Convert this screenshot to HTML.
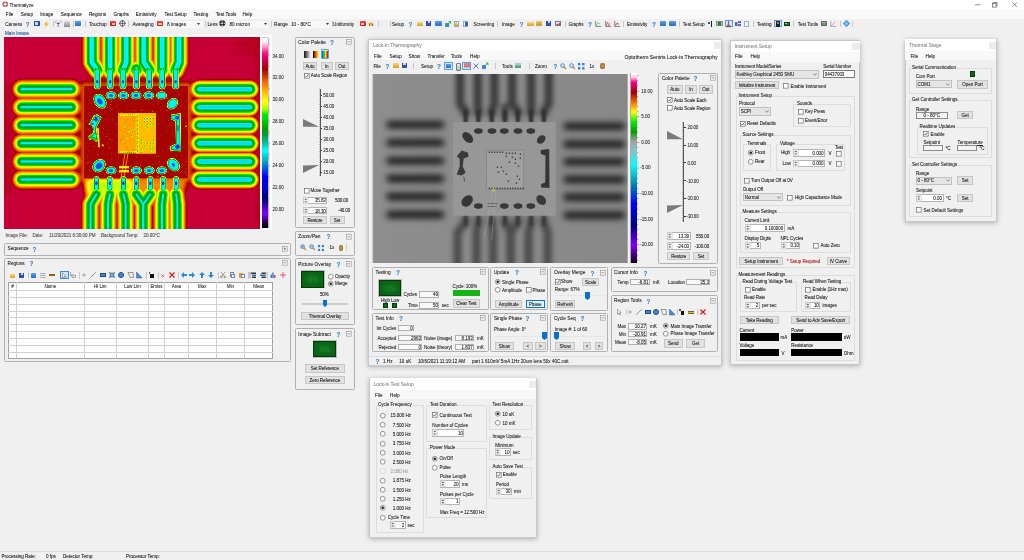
<!DOCTYPE html>
<html><head><meta charset="utf-8"><style>
html,body{margin:0;padding:0;}
body{width:1024px;height:560px;overflow:hidden;position:relative;background:#f0f0f0;font-family:"Liberation Sans",sans-serif;}
.a{position:absolute;}
.t{position:absolute;white-space:nowrap;font-family:"Liberation Sans",sans-serif;text-shadow:0 0 0.3px rgba(0,0,0,0.35);}
.btn{position:absolute;box-sizing:border-box;text-align:center;white-space:nowrap;color:#1a1a1a;font-family:"Liberation Sans",sans-serif;text-shadow:0 0 0.3px rgba(0,0,0,0.35);}
svg{position:absolute;overflow:visible;}
</style></head><body><div id="root" style="position:absolute;left:0;top:0;width:1024px;height:560px;overflow:hidden;will-change:transform;background:#f0f0f0">
<div class="a" style="left:0px;top:0px;width:1024px;height:9px;background:#ffffff;"></div>
<svg style="left:2px;top:1.2px" width="6.5" height="6.5" viewBox="0 0 10 10"><circle cx="5" cy="5" r="4.3" fill="#b04040"/><circle cx="5" cy="5" r="2" fill="#fff"/><path d="M5 0.5V9.5M0.5 5H9.5" stroke="#fff" stroke-width="0.9"/></svg>
<div class="t" style="left:9.5px;top:2.64px;font-size:4.6px;line-height:5.52px;color:#222;">Thermalyze</div>
<svg style="left:974.5px;top:1.5px" width="6" height="6" viewBox="0 0 6 6"><path d="M0 2.8H5.5" stroke="#444" stroke-width="0.6"/></svg>
<svg style="left:992.2px;top:1.5px" width="6" height="6" viewBox="0 0 6 6"><rect x="0.5" y="1.5" width="3.6" height="3.6" fill="none" stroke="#444" stroke-width="0.6"/><path d="M1.5 1.5V0.5H5.1V4.1H4.1" fill="none" stroke="#444" stroke-width="0.6"/></svg>
<svg style="left:1011.5px;top:1.5px" width="6" height="6" viewBox="0 0 6 6"><path d="M0.4 0.4L4.9 4.9M4.9 0.4L0.4 4.9" stroke="#444" stroke-width="0.6"/></svg>
<div class="a" style="left:0px;top:9px;width:1024px;height:9.8px;background:#f9f9f9;"></div>
<div class="t" style="left:5.8px;top:11.88px;font-size:4.7px;line-height:5.64px;color:#1a1a1a;">File</div>
<div class="t" style="left:20.8px;top:11.88px;font-size:4.7px;line-height:5.64px;color:#1a1a1a;">Setup</div>
<div class="t" style="left:40.3px;top:11.88px;font-size:4.7px;line-height:5.64px;color:#1a1a1a;">Image</div>
<div class="t" style="left:60.8px;top:11.88px;font-size:4.7px;line-height:5.64px;color:#1a1a1a;">Sequence</div>
<div class="t" style="left:88.9px;top:11.88px;font-size:4.7px;line-height:5.64px;color:#1a1a1a;">Regions</div>
<div class="t" style="left:113.5px;top:11.88px;font-size:4.7px;line-height:5.64px;color:#1a1a1a;">Graphs</div>
<div class="t" style="left:135.7px;top:11.88px;font-size:4.7px;line-height:5.64px;color:#1a1a1a;">Emissivity</div>
<div class="t" style="left:164.4px;top:11.88px;font-size:4.7px;line-height:5.64px;color:#1a1a1a;">Test Setup</div>
<div class="t" style="left:193.4px;top:11.88px;font-size:4.7px;line-height:5.64px;color:#1a1a1a;">Testing</div>
<div class="t" style="left:215.7px;top:11.88px;font-size:4.7px;line-height:5.64px;color:#1a1a1a;">Test Tools</div>
<div class="t" style="left:242.6px;top:11.88px;font-size:4.7px;line-height:5.64px;color:#1a1a1a;">Help</div>
<div class="a" style="left:0px;top:19px;width:1024px;height:10px;background:#f0f0f0;"></div>
<div class="t" style="left:5.2px;top:21.58px;font-size:4.7px;line-height:5.64px;color:#222;">Camera</div>
<div class="t" style="left:25.8px;top:20.56px;font-size:6.4px;line-height:7.68px;color:#3a92da;font-weight:bold;">?</div>
<div class="a" style="left:33.6px;top:21.2px;width:6.4px;height:5px;background:#2a4a9a;border-radius:0.5px"></div><div class="a" style="left:35.2px;top:22.4px;width:3.2px;height:2.4px;background:#c8d8f8"></div>
<svg style="left:43px;top:20.5px" width="6.5" height="6.5" viewBox="0 0 10 10"><path d="M7 0L1 5.5H4.5L2.5 10L9.5 4H6Z" fill="#f0b020"/></svg>
<div class="a" style="left:52.7px;top:20.5px;width:0.6px;height:6.5px;background:#c8c8c8"></div>
<svg style="left:54.6px;top:20.7px" width="6.4" height="6" viewBox="0 0 12 12"><path d="M6 2V12M3 5H9" stroke="#333" stroke-width="1.2"/><path d="M0 1V4M1 0H3M12 1V4M11 0H9" stroke="#3a8ad8" stroke-width="1.2"/></svg>
<div class="a" style="left:63.5px;top:20.7px;width:6.3px;height:6px;background:linear-gradient(#d8d8d8,#8a8a8a);border-radius:2px 2px 0.5px 0.5px"></div>
<div class="a" style="left:73px;top:20.5px;width:0.6px;height:6.5px;background:#c8c8c8"></div>
<div class="a" style="left:74.85px;top:21.099999999999998px;width:6.3px;height:5.2px;background:linear-gradient(#5aa0e6,#2a6cc0);border-radius:0.8px"></div>
<div class="a" style="left:84.5px;top:20.5px;width:0.6px;height:6.5px;background:#c8c8c8"></div>
<div class="t" style="left:89px;top:21.58px;font-size:4.7px;line-height:5.64px;color:#222;">Touchup</div>
<div class="a" style="left:110px;top:21.2px;width:6.3px;height:5px;background:linear-gradient(#f04848,#c01818);border-radius:0.8px"></div><div class="a" style="left:111.5px;top:22.7px;width:3.3px;height:2px;background:#fbb"></div>
<svg style="left:118.8px;top:20.3px" width="6.8" height="6.8" viewBox="0 0 10 10"><circle cx="5" cy="5" r="3.9" stroke="#222" stroke-width="1" fill="#fff"/><path d="M5 0V10M0 5H10" stroke="#222" stroke-width="0.9"/><circle cx="5" cy="5" r="1.1" fill="#d02020"/></svg>
<div class="a" style="left:128px;top:20.5px;width:0.6px;height:6.5px;background:#c8c8c8"></div>
<div class="t" style="left:132.5px;top:21.58px;font-size:4.7px;line-height:5.64px;color:#222;">Averaging</div>
<div class="a" style="left:156.8px;top:21.2px;width:6.3px;height:5px;background:linear-gradient(#f04848,#c01818);border-radius:0.8px"></div><div class="a" style="left:158.3px;top:22.7px;width:3.3px;height:2px;background:#fbb"></div>
<div class="a" style="left:165px;top:20.5px;width:38px;height:7.0px;background:#f8f8f8;"></div>
<div class="t" style="left:167px;top:21.58px;font-size:4.7px;line-height:5.64px;color:#222;">8 images</div>
<svg style="left:197px;top:22.7px" width="3" height="2" viewBox="0 0 3 2"><path d="M0 0H3L1.5 2Z" fill="#333"/></svg>
<div class="a" style="left:205px;top:20.5px;width:0.6px;height:6.5px;background:#c8c8c8"></div>
<div class="t" style="left:207.5px;top:21.58px;font-size:4.7px;line-height:5.64px;color:#222;">Lens</div>
<svg style="left:219.3px;top:20.4px" width="6.6" height="6.6" viewBox="0 0 10 10"><circle cx="5" cy="5" r="4.6" fill="#222"/><circle cx="5" cy="5" r="1.7" fill="#ddd"/><g fill="#ddd"><circle cx="5" cy="1.6" r="1"/><circle cx="5" cy="8.4" r="1"/><circle cx="1.6" cy="5" r="1"/><circle cx="8.4" cy="5" r="1"/></g></svg>
<div class="a" style="left:228px;top:20.5px;width:41px;height:7.0px;background:#f8f8f8;"></div>
<div class="t" style="left:229.5px;top:21.58px;font-size:4.7px;line-height:5.64px;color:#222;">80 micron</div>
<svg style="left:264px;top:22.7px" width="3" height="2" viewBox="0 0 3 2"><path d="M0 0H3L1.5 2Z" fill="#333"/></svg>
<div class="a" style="left:271px;top:20.5px;width:0.6px;height:6.5px;background:#c8c8c8"></div>
<div class="t" style="left:274px;top:21.58px;font-size:4.7px;line-height:5.64px;color:#222;">Range</div>
<div class="a" style="left:289.5px;top:20.5px;width:41.5px;height:7.0px;background:#f8f8f8;"></div>
<div class="t" style="left:291px;top:21.58px;font-size:4.7px;line-height:5.64px;color:#222;">10 - 80°C</div>
<svg style="left:325.5px;top:22.7px" width="3" height="2" viewBox="0 0 3 2"><path d="M0 0H3L1.5 2Z" fill="#333"/></svg>
<div class="a" style="left:331.5px;top:20.5px;width:0.6px;height:6.5px;background:#c8c8c8"></div>
<div class="t" style="left:333px;top:21.58px;font-size:4.7px;line-height:5.64px;color:#222;">Uniformity</div>
<div class="a" style="left:359.5px;top:21.2px;width:6.3px;height:5px;background:linear-gradient(#f04848,#c01818);border-radius:0.8px"></div><div class="a" style="left:361px;top:22.7px;width:3.3px;height:2px;background:#fbb"></div>
<svg style="left:368.0px;top:21.2px" width="6" height="5" viewBox="0 0 10 10"><rect x="1" y="4" width="2.5" height="6" fill="#e05020"/><rect x="4" y="2" width="2.5" height="8" fill="#f0a020"/><rect x="7" y="5" width="2.5" height="5" fill="#30a040"/></svg>
<div class="a" style="left:378px;top:20.5px;width:0.6px;height:6.5px;background:#c8c8c8"></div>
<div class="a" style="left:389.5px;top:20.5px;width:0.6px;height:6.5px;background:#c8c8c8"></div>
<div class="t" style="left:392px;top:21.64px;font-size:4.6px;line-height:5.52px;color:#222;">Setup</div>
<div class="t" style="left:408.5px;top:20.56px;font-size:6.4px;line-height:7.68px;color:#3a92da;font-weight:bold;">?</div>
<div class="a" style="left:416.85px;top:21.599999999999998px;width:6.3px;height:4.7px;background:linear-gradient(#f8d870,#d8a030);border-radius:0.5px"></div>
<div class="a" style="left:426.4px;top:20.9px;width:5.1px;height:5.6px;background:#3050b0"></div>
<div class="a" style="left:427.59999999999997px;top:20.9px;width:2.6999999999999997px;height:2.2399999999999998px;background:#c8d8f0"></div>
<div class="a" style="left:435.25px;top:21.099999999999998px;width:6.3px;height:5.2px;background:linear-gradient(#5aa0e6,#2a6cc0);border-radius:0.8px"></div>
<svg style="left:444.7px;top:20.7px" width="6.3" height="6" viewBox="0 0 12 12"><rect x="0" y="4" width="8" height="8" fill="#3a8ad8"/><path d="M5 7L11 1M7 1H11V5" stroke="#30a030" stroke-width="1.8" fill="none"/></svg>
<div class="a" style="left:453.6px;top:20.7px;width:5.6px;height:6px;background:#eef4fb;border:0.5px solid #8aa8c8;box-sizing:border-box"></div>
<svg style="left:454.2px;top:22.2px" width="4.5" height="4" viewBox="0 0 10 9"><path d="M5 0L10 9H0Z" fill="#e8b020"/></svg>
<div class="a" style="left:462.5px;top:20.7px;width:5.8px;height:6px;background:#eef4fb;border:0.5px solid #8aa8c8;box-sizing:border-box"></div><div class="a" style="left:464.8px;top:22.2px;width:2.8px;height:4px;background:#2a6ac0"></div>
<div class="t" style="left:473.5px;top:21.64px;font-size:4.6px;line-height:5.52px;color:#222;">Screening</div>
<div class="a" style="left:497px;top:20.5px;width:0.6px;height:6.5px;background:#c8c8c8"></div>
<div class="t" style="left:502px;top:21.64px;font-size:4.6px;line-height:5.52px;color:#222;">Image</div>
<div class="t" style="left:519.5px;top:20.56px;font-size:6.4px;line-height:7.68px;color:#3a92da;font-weight:bold;">?</div>
<div class="a" style="left:527.25px;top:21.599999999999998px;width:6.3px;height:4.7px;background:linear-gradient(#f8d870,#d8a030);border-radius:0.5px"></div>
<div class="a" style="left:536.0500000000001px;top:21.45px;width:6.3px;height:5.0px;background:linear-gradient(#f8d870,#d8a030);border-radius:0.5px"></div>
<svg style="left:536px;top:21.0px" width="6.3" height="5.5" viewBox="0 0 12 10"><path d="M0 3.5H12M0 6.5H12M4 0V10M8 0V10" stroke="#b08020" stroke-width="0.6"/></svg>
<div class="a" style="left:546.4000000000001px;top:20.9px;width:5.1px;height:5.6px;background:#3050b0"></div>
<div class="a" style="left:547.6000000000001px;top:20.9px;width:2.6999999999999997px;height:2.2399999999999998px;background:#c8d8f0"></div>
<div class="a" style="left:554.6px;top:21.099999999999998px;width:6.3px;height:5.2px;background:#e8eef8;border:0.6px solid #6a7a9a;box-sizing:border-box"></div>
<svg style="left:555.6px;top:22.099999999999998px" width="4.3" height="3.2" viewBox="0 0 10 7"><path d="M0 7L3 3L5 5L8 1L10 4V7Z" fill="#d04040"/></svg>
<div class="a" style="left:564.7px;top:20.5px;width:0.6px;height:6.5px;background:#c8c8c8"></div>
<div class="t" style="left:568.5px;top:21.64px;font-size:4.6px;line-height:5.52px;color:#222;">Graphs</div>
<div class="t" style="left:588px;top:20.56px;font-size:6.4px;line-height:7.68px;color:#3a92da;font-weight:bold;">?</div>
<svg style="left:595.0500000000001px;top:20.7px" width="6.3" height="6" viewBox="0 0 10 10"><path d="M1 0V9H10" stroke="#333" stroke-width="1" fill="none"/><path d="M2 7L5 3L8 5" stroke="#30a030" stroke-width="1" fill="none"/></svg>
<svg style="left:604.65px;top:20.7px" width="6.3" height="6" viewBox="0 0 10 10"><path d="M1 0V9H10" stroke="#333" stroke-width="1" fill="none"/><path d="M2 8L4 2L6 8L8 3" stroke="#d03030" stroke-width="1" fill="none"/></svg>
<svg style="left:613.65px;top:20.7px" width="6.3" height="6" viewBox="0 0 10 10"><path d="M1 0V9H10" stroke="#333" stroke-width="1" fill="none"/><path d="M2 7L5 3L8 5" stroke="#30a030" stroke-width="1" fill="none"/></svg>
<svg style="left:613.6px;top:20.7px" width="6.3" height="6" viewBox="0 0 10 10"><path d="M2 8L5 4L8 6" stroke="#d03030" stroke-width="0.9" fill="none"/></svg>
<div class="a" style="left:623.4px;top:20.5px;width:0.6px;height:6.5px;background:#c8c8c8"></div>
<div class="t" style="left:627px;top:21.64px;font-size:4.6px;line-height:5.52px;color:#222;">Emissivity</div>
<div class="t" style="left:652px;top:20.56px;font-size:6.4px;line-height:7.68px;color:#3a92da;font-weight:bold;">?</div>
<div class="a" style="left:660.0500000000001px;top:21.099999999999998px;width:6.3px;height:5.2px;background:linear-gradient(#5aa0e6,#2a6cc0);border-radius:0.8px"></div>
<div class="a" style="left:668.9px;top:20.95px;width:6.8px;height:5.5px;background:linear-gradient(#5aa0e6,#2a6cc0);border-radius:0.8px"></div>
<div class="a" style="left:679px;top:20.5px;width:0.6px;height:6.5px;background:#c8c8c8"></div>
<div class="t" style="left:682.8px;top:21.64px;font-size:4.6px;line-height:5.52px;color:#222;">Test Setup</div>
<div class="a" style="left:708.2px;top:21.5px;width:2.2px;height:2.8px;background:#2a4a9a"></div><div class="a" style="left:711.2px;top:20.7px;width:0.9px;height:6px;background:#222"></div>
<div class="a" style="left:716.4px;top:21.099999999999998px;width:6.4px;height:5.4px;background:#c8c8c8;border:0.5px solid #888;box-sizing:border-box"></div><div class="a" style="left:717.8px;top:22.2px;width:3.6px;height:3px;background:#1a7a2a"></div>
<div class="a" style="left:724.7px;top:19.9px;width:8.3px;height:7.6px;background:#cce4f7;border:0.6px solid #5aa0e8;box-sizing:border-box"></div>
<svg style="left:726.3px;top:20.7px" width="5" height="6" viewBox="0 0 10 12"><path d="M4 0H6V6L9 11H1L4 6Z" fill="#e04040"/><path d="M0 11.5H10" stroke="#333" stroke-width="1"/></svg>
<svg style="left:734.8px;top:21.099999999999998px" width="6" height="5.2" viewBox="0 0 12 10"><rect x="0" y="2" width="5" height="8" fill="#4a6aa8"/><rect x="6" y="0" width="6" height="4" fill="#4a6aa8"/><rect x="6" y="6" width="6" height="4" fill="#4a6aa8"/></svg>
<div class="a" style="left:743.8px;top:20.5px;width:5.6px;height:6.4px;background:#eef4fb;border:0.5px solid #9ab0d0;box-sizing:border-box;border-radius:0.5px"></div>
<div class="a" style="left:752.7px;top:20.5px;width:0.6px;height:6.5px;background:#c8c8c8"></div>
<div class="t" style="left:757px;top:21.64px;font-size:4.6px;line-height:5.52px;color:#222;">Testing</div>
<div class="a" style="left:773.6px;top:19.9px;width:8.9px;height:7.6px;background:#cce4f7;border:0.6px solid #5aa0e8;box-sizing:border-box"></div>
<div class="a" style="left:776.4px;top:20.7px;width:3.3px;height:6px;background:#222;border-radius:0.6px"></div><div class="a" style="left:777.2px;top:22.3px;width:1.7px;height:1.7px;background:#f08020;border-radius:50%"></div>
<div class="a" style="left:783.8px;top:21.5px;width:6.3px;height:4.4px;background:#1a7a2a;border:0.5px solid #0a3a10;box-sizing:border-box"></div><div class="a" style="left:785px;top:22.7px;width:1.6px;height:1.6px;background:#a0d0a0"></div>
<div class="a" style="left:793.3px;top:20.5px;width:0.6px;height:6.5px;background:#c8c8c8"></div>
<div class="t" style="left:797.7px;top:21.64px;font-size:4.6px;line-height:5.52px;color:#222;">Test Tools</div>
<div class="a" style="left:820.6px;top:21.2px;width:6.4px;height:5px;background:linear-gradient(#8ab0d8 50%,#6a9a50 50%);border:0.5px solid #666;box-sizing:border-box"></div>
<svg style="left:829.5px;top:20.7px" width="6.3" height="6" viewBox="0 0 10 10"><path d="M1 0V9H10" stroke="#6a6a9a" stroke-width="0.9" fill="none"/><path d="M2 8L9 1" stroke="#c04040" stroke-width="0.8"/></svg>
<div class="a" style="left:839.6px;top:20.5px;width:0.6px;height:6.5px;background:#c8c8c8"></div>
<svg style="left:842.8px;top:20.3px" width="7" height="7" viewBox="0 0 10 10"><path d="M5 0L10 5L5 10L0 5Z" fill="#2a7ad0"/><path d="M5 1.5L8.5 5L5 8.5L1.5 5Z" fill="#7cc0f8"/></svg>
<div class="a" style="left:852.3px;top:20.5px;width:0.6px;height:6.5px;background:#c8c8c8"></div>
<div class="t" style="left:5px;top:30.94px;font-size:4.6px;line-height:5.52px;color:#1c5ab8;">Main Image</div>
<div class="a" style="left:4px;top:35px;width:267.5px;height:194.8px;background:#fcfdfd;"></div>
<div class="t" style="left:5.6px;top:233.47px;font-size:4.55px;line-height:5.46px;color:#555;letter-spacing:-0.025px;">Image File:</div>
<div class="t" style="left:32.5px;top:233.47px;font-size:4.55px;line-height:5.46px;color:#555;letter-spacing:-0.025px;">Date:</div>
<div class="t" style="left:49px;top:233.47px;font-size:4.55px;line-height:5.46px;color:#555;letter-spacing:-0.025px;">11/29/2021 6:30:00 PM</div>
<div class="t" style="left:101px;top:233.47px;font-size:4.55px;line-height:5.46px;color:#555;letter-spacing:-0.025px;">Background Temp:</div>
<div class="t" style="left:143.5px;top:233.47px;font-size:4.55px;line-height:5.46px;color:#555;letter-spacing:-0.025px;">20.00°C</div>
<div class="a" style="left:4px;top:243px;width:286.5px;height:13px;border:1px solid #b0b0b0;box-sizing:border-box;border-radius:1.5px"></div>
<div class="t" style="left:7.5px;top:246.38px;font-size:4.7px;line-height:5.64px;color:#222;">Sequence</div>
<div class="t" style="left:32.5px;top:245.66px;font-size:6.4px;line-height:7.68px;color:#3a92da;font-weight:bold;">?</div>
<svg style="left:282.0px;top:245.7px" width="5.6" height="5.6" viewBox="0 0 5.6 5.6"><rect x="0.4" y="0.4" width="4.8" height="4.8" fill="#f8f8f8" stroke="#9a9a9a" stroke-width="0.7"/><path d="M1.5 2.8 H4.1" stroke="#555" stroke-width="0.6"/><path d="M2.8 1.5 V4.1" stroke="#555" stroke-width="0.6"/></svg>
<div class="a" style="left:4px;top:257.5px;width:286.5px;height:104.5px;border:1px solid #b0b0b0;box-sizing:border-box;border-radius:1.5px"></div>
<div class="t" style="left:7.5px;top:260.88px;font-size:4.7px;line-height:5.64px;color:#222;">Regions</div>
<div class="t" style="left:29.5px;top:260.16px;font-size:6.4px;line-height:7.68px;color:#3a92da;font-weight:bold;">?</div>
<svg style="left:282.0px;top:260.2px" width="5.6" height="5.6" viewBox="0 0 5.6 5.6"><rect x="0.4" y="0.4" width="4.8" height="4.8" fill="#f8f8f8" stroke="#9a9a9a" stroke-width="0.7"/><path d="M1.5 2.8 H4.1" stroke="#555" stroke-width="0.6"/></svg>
<div class="a" style="left:10.1px;top:273.55px;width:5px;height:4.0px;background:linear-gradient(#f8d870,#d8a030);border-radius:0.5px"></div>
<div class="a" style="left:19.4px;top:272.8px;width:4.5px;height:5px;background:#3050b0"></div>
<div class="a" style="left:20.599999999999998px;top:272.8px;width:2.1px;height:2.0px;background:#c8d8f0"></div>
<div class="a" style="left:28.3px;top:271.5px;width:0.6px;height:7.5px;background:#c8c8c8"></div>
<div class="a" style="left:30.75px;top:273.05px;width:5.5px;height:4.5px;background:linear-gradient(#5aa0e6,#2a6cc0);border-radius:0.8px"></div>
<svg style="left:40px;top:272.8px" width="6" height="5" viewBox="0 0 12 10"><g fill="#4a80c8"><rect x="0" y="0.5" width="1.6" height="1.6"/><rect x="0" y="4.2" width="1.6" height="1.6"/><rect x="0" y="7.9" width="1.6" height="1.6"/></g><g fill="#555"><rect x="3" y="0.8" width="8" height="1"/><rect x="3" y="4.5" width="8" height="1"/><rect x="3" y="8.2" width="8" height="1"/></g></svg>
<div class="a" style="left:49.0px;top:274.3px;width:6px;height:2px;background:#e0b030;border-top:0.6px solid #806020;border-bottom:0.6px solid #806020;box-sizing:border-box"></div>
<div class="a" style="left:59.5px;top:271.3px;width:9px;height:8px;background:#cce4f7;border:0.6px solid #3c8ad8;box-sizing:border-box"></div>
<svg style="left:62px;top:272.5px" width="5" height="6" viewBox="0 0 10 12"><path d="M1 0V10L3.5 7.5L5.5 11.5L7 10.8L5 7H8.5Z" fill="#fff" stroke="#333" stroke-width="0.8"/></svg>
<svg style="left:70px;top:272.3px" width="6" height="6" viewBox="0 0 12 12"><path d="M1 0V7L2.5 5.5L4 8" fill="none" stroke="#333" stroke-width="0.8"/><rect x="4" y="6" width="7" height="5" fill="#e8e8e8" stroke="#333" stroke-width="0.8"/></svg>
<div class="a" style="left:79.3px;top:271.5px;width:0.6px;height:7.5px;background:#c8c8c8"></div>
<svg style="left:82px;top:273.3px" width="4" height="4" viewBox="0 0 4 4"><path d="M2 0V4M0 2H4" stroke="#888" stroke-width="0.6"/></svg>
<svg style="left:90px;top:272.3px" width="6" height="6" viewBox="0 0 6 6"><path d="M0.3 5.7L5.7 0.3" stroke="#444" stroke-width="0.6"/></svg>
<div class="a" style="left:99.5px;top:273.3px;width:6px;height:4px;background:#3a8ad8;border:0.6px solid #1a4a90;box-sizing:border-box"></div>
<svg style="left:109px;top:272.3px" width="6" height="6" viewBox="0 0 12 12"><rect x="2" y="2" width="8" height="8" fill="#6ab0f0" stroke="#234" stroke-width="0.9"/><path d="M0 0L3 3M12 0L9 3M0 12L3 9M12 12L9 9" stroke="#234" stroke-width="1"/></svg>
<div class="a" style="left:118px;top:272.3px;width:6px;height:6px;border-radius:50%;background:#3a8ad8;border:0.5px solid #1a4a90;box-sizing:border-box"></div>
<svg style="left:127.5px;top:272.3px" width="6" height="6" viewBox="0 0 12 12"><path d="M0 1H10L11 11H4Z" fill="#eee" stroke="#333" stroke-width="0.9"/></svg>
<svg style="left:136px;top:272.3px" width="6" height="6" viewBox="0 0 12 12"><path d="M1 0L11 10L11 12H1Z" fill="#4a90d8" stroke="#1a4a90" stroke-width="0.9"/></svg>
<div class="a" style="left:146px;top:271.5px;width:0.6px;height:7.5px;background:#c8c8c8"></div>
<div class="a" style="left:150px;top:274.3px;width:3.5px;height:3.5px;background:#111"></div><div class="a" style="left:148.5px;top:272.3px;width:1.5px;height:1.5px;background:#555"></div>
<div class="a" style="left:157.6px;top:271.5px;width:0.6px;height:7.5px;background:#c8c8c8"></div>
<svg style="left:161px;top:273.6px" width="3.4" height="3.4" viewBox="0 0 4 4"><path d="M0.4 0.4L3.6 3.6M3.6 0.4L0.4 3.6" stroke="#e02020" stroke-width="0.7"/></svg>
<svg style="left:169px;top:272.3px" width="6" height="6" viewBox="0 0 6 6"><path d="M0.5 0.5L5.5 5.5M5.5 0.5L0.5 5.5" stroke="#e01818" stroke-width="1.2"/></svg>
<div class="a" style="left:178.4px;top:271.5px;width:0.6px;height:7.5px;background:#c8c8c8"></div>
<svg style="left:181px;top:272.3px;transform:rotate(180deg)" width="6" height="6" viewBox="0 0 12 12"><path d="M0 4H6V0L12 6L6 12V8H0Z" fill="#2a8ae0"/></svg>
<svg style="left:189.3px;top:272.3px;transform:rotate(0deg)" width="6" height="6" viewBox="0 0 12 12"><path d="M0 4H6V0L12 6L6 12V8H0Z" fill="#2a8ae0"/></svg>
<svg style="left:199.2px;top:272.3px;transform:rotate(270deg)" width="6" height="6" viewBox="0 0 12 12"><path d="M0 4H6V0L12 6L6 12V8H0Z" fill="#2a8ae0"/></svg>
<svg style="left:208.3px;top:272.3px;transform:rotate(90deg)" width="6" height="6" viewBox="0 0 12 12"><path d="M0 4H6V0L12 6L6 12V8H0Z" fill="#2a8ae0"/></svg>
<div class="a" style="left:217.6px;top:271.5px;width:0.6px;height:7.5px;background:#c8c8c8"></div>
<svg style="left:220px;top:272.3px" width="6" height="6" viewBox="0 0 12 12"><path d="M2 0L9 9M10 0L3 9" stroke="#555" stroke-width="1"/><circle cx="2.5" cy="10" r="1.8" fill="none" stroke="#555"/><circle cx="9.5" cy="10" r="1.8" fill="none" stroke="#555"/></svg>
<div class="a" style="left:229.5px;top:272.3px;width:4px;height:4.5px;border:0.5px solid #6a8ab0;background:#f4f8fc;box-sizing:border-box"></div><div class="a" style="left:231px;top:273.8px;width:4px;height:4.5px;border:0.5px solid #6a8ab0;background:#f4f8fc;box-sizing:border-box"></div>
<div class="a" style="left:238.5px;top:272.8px;width:4.5px;height:5px;background:#e8a030"></div><div class="a" style="left:241px;top:274.3px;width:3.5px;height:4px;border:0.5px solid #6a8ab0;background:#fff;box-sizing:border-box"></div>
<div class="a" style="left:247.6px;top:271.5px;width:0.6px;height:7.5px;background:#c8c8c8"></div>
<svg style="left:249.5px;top:272.3px" width="6" height="6" viewBox="0 0 12 12"><rect x="2" y="1" width="10" height="3" fill="#333"/><rect x="4" y="5" width="8" height="3" fill="#2a70c0"/><rect x="4" y="9" width="8" height="3" fill="#333"/><path d="M0 0V12" stroke="#333"/></svg>
<svg style="left:259.5px;top:272.3px" width="6" height="6" viewBox="0 0 12 12"><rect x="3" y="1" width="8" height="3" fill="#333"/><rect x="0" y="5" width="10" height="3" fill="#2a70c0"/><rect x="3" y="9" width="8" height="3" fill="#333"/><path d="M11.5 0V12" stroke="#333"/></svg>
<div class="a" style="left:267.4px;top:271.5px;width:0.6px;height:7.5px;background:#c8c8c8"></div>
<svg style="left:270px;top:272.3px" width="6" height="6" viewBox="0 0 12 12"><rect x="1" y="5" width="3" height="7" fill="#3a7ad8"/><rect x="4.5" y="1" width="3" height="11" fill="#3a7ad8"/><rect x="8" y="6" width="3" height="6" fill="#e04040"/></svg>
<svg style="left:279.5px;top:272.3px" width="6" height="6" viewBox="0 0 12 12"><path d="M6 0V12M0 6H12" stroke="#e04040" stroke-width="1.6"/></svg>
<div class="a" style="left:8px;top:282px;width:265px;height:76.5px;background:#ffffff;border:1px solid #a0a0a0;box-sizing:border-box;"></div>
<div class="a" style="left:16.3px;top:282px;width:0.6000000000000014px;height:76px;background:#cfcfcf;"></div>
<div class="a" style="left:84.4px;top:282px;width:0.5999999999999943px;height:76px;background:#cfcfcf;"></div>
<div class="a" style="left:116.3px;top:282px;width:0.5999999999999943px;height:76px;background:#cfcfcf;"></div>
<div class="a" style="left:148.4px;top:282px;width:0.5999999999999943px;height:76px;background:#cfcfcf;"></div>
<div class="a" style="left:164.4px;top:282px;width:0.5999999999999943px;height:76px;background:#cfcfcf;"></div>
<div class="a" style="left:188.4px;top:282px;width:0.5999999999999943px;height:76px;background:#cfcfcf;"></div>
<div class="a" style="left:216.25px;top:282px;width:0.5999999999999943px;height:76px;background:#cfcfcf;"></div>
<div class="a" style="left:244.4px;top:282px;width:0.5999999999999943px;height:76px;background:#cfcfcf;"></div>
<div class="a" style="left:8px;top:290px;width:265px;height:0.6000000000000227px;background:#d0d0d0;"></div>
<div class="a" style="left:8px;top:296.9px;width:265px;height:0.6000000000000227px;background:#d0d0d0;"></div>
<div class="a" style="left:8px;top:303.75px;width:265px;height:0.6000000000000227px;background:#d0d0d0;"></div>
<div class="a" style="left:8px;top:310.6px;width:265px;height:0.6000000000000227px;background:#d0d0d0;"></div>
<div class="a" style="left:8px;top:317.4px;width:265px;height:0.6000000000000227px;background:#d0d0d0;"></div>
<div class="a" style="left:8px;top:324.2px;width:265px;height:0.6000000000000227px;background:#d0d0d0;"></div>
<div class="a" style="left:8px;top:331px;width:265px;height:0.6000000000000227px;background:#d0d0d0;"></div>
<div class="a" style="left:8px;top:337.8px;width:265px;height:0.6000000000000227px;background:#d0d0d0;"></div>
<div class="a" style="left:8px;top:344.7px;width:265px;height:0.6000000000000227px;background:#d0d0d0;"></div>
<div class="a" style="left:8px;top:351.6px;width:265px;height:0.6000000000000227px;background:#d0d0d0;"></div>
<div class="t" style="left:-37.5px;width:100px;text-align:center;top:284.27px;font-size:4.55px;line-height:5.46px;color:#222;letter-spacing:-0.075px;">#</div>
<div class="t" style="left:0.29999999999999716px;width:100px;text-align:center;top:284.27px;font-size:4.55px;line-height:5.46px;color:#333;letter-spacing:-0.075px;">Name</div>
<div class="t" style="left:50.3px;width:100px;text-align:center;top:284.27px;font-size:4.55px;line-height:5.46px;color:#333;letter-spacing:-0.075px;">Hi Lim</div>
<div class="t" style="left:82.4px;width:100px;text-align:center;top:284.27px;font-size:4.55px;line-height:5.46px;color:#333;letter-spacing:-0.075px;">Low Lim</div>
<div class="t" style="left:106.4px;width:100px;text-align:center;top:284.27px;font-size:4.55px;line-height:5.46px;color:#333;letter-spacing:-0.075px;">Emiss</div>
<div class="t" style="left:126.4px;width:100px;text-align:center;top:284.27px;font-size:4.55px;line-height:5.46px;color:#333;letter-spacing:-0.075px;">Area</div>
<div class="t" style="left:152.3px;width:100px;text-align:center;top:284.27px;font-size:4.55px;line-height:5.46px;color:#333;letter-spacing:-0.075px;">Max</div>
<div class="t" style="left:180.3px;width:100px;text-align:center;top:284.27px;font-size:4.55px;line-height:5.46px;color:#333;letter-spacing:-0.075px;">Min</div>
<div class="t" style="left:208.7px;width:100px;text-align:center;top:284.27px;font-size:4.55px;line-height:5.46px;color:#333;letter-spacing:-0.075px;">Mean</div>
<div class="a" style="left:0px;top:551px;width:1024px;height:0.6000000000000227px;background:#dcdcdc;"></div>
<div class="t" style="left:1.5px;top:553.97px;font-size:4.55px;line-height:5.46px;color:#1a1a1a;letter-spacing:-0.025px;">Processing Rate:</div>
<div class="t" style="left:46px;top:553.97px;font-size:4.55px;line-height:5.46px;color:#1a1a1a;letter-spacing:-0.025px;">0 fps</div>
<div class="t" style="left:63px;top:553.97px;font-size:4.55px;line-height:5.46px;color:#1a1a1a;letter-spacing:-0.025px;">Detector Temp:</div>
<div class="t" style="left:126px;top:553.97px;font-size:4.55px;line-height:5.46px;color:#1a1a1a;letter-spacing:-0.025px;">Processor Temp:</div>
<svg style="left:4px;top:36.8px;overflow:hidden" width="256" height="192" viewBox="4 36.8 256 192"><defs><filter id="cm" x="4" y="36.8" width="256" height="192" filterUnits="userSpaceOnUse" color-interpolation-filters="sRGB"><feGaussianBlur stdDeviation="0.65"/><feComponentTransfer><feFuncR type="table" tableValues="1.000 1.000 1.000 1.000 1.000 1.000 1.000 1.000 0.975 0.925 0.879 0.835 0.791 0.746 0.700 0.654 0.648 0.698 0.747 0.797 0.845 0.892 0.940 0.987 1.000 1.000 1.000 1.000 1.000 1.000 1.000 1.000 0.959 0.895 0.832 0.768 0.560 0.304 0.049 0.000 0.000 0.000 0.000 0.000 0.000 0.000 0.000 0.000 0.000 0.000 0.000 0.000 0.000 0.000 0.000 0.000 0.000 0.000 0.000 0.000 0.000 0.000 0.000 0.000 0.000 0.000 0.000 0.000 0.000 0.000 0.000 0.000 0.000 0.000 0.000 0.000 0.000 0.000 0.000 0.000 0.000 0.060 0.126 0.193 0.259 0.325 0.391 0.457 0.478 0.402 0.327 0.251 0.175 0.099 0.041 0.000"/><feFuncG type="table" tableValues="1.000 0.969 0.926 0.780 0.633 0.476 0.311 0.146 0.046 0.011 0.000 0.000 0.000 0.000 0.000 0.000 0.028 0.094 0.160 0.226 0.291 0.355 0.420 0.484 0.547 0.608 0.670 0.732 0.793 0.855 0.917 0.978 1.000 1.000 1.000 1.000 0.985 0.965 0.945 0.908 0.866 0.825 0.782 0.738 0.694 0.650 0.627 0.627 0.627 0.640 0.674 0.707 0.741 0.796 0.861 0.926 0.991 0.948 0.888 0.828 0.767 0.707 0.630 0.548 0.465 0.383 0.295 0.207 0.119 0.031 0.000 0.000 0.000 0.000 0.000 0.000 0.000 0.000 0.000 0.000 0.000 0.000 0.000 0.000 0.000 0.000 0.000 0.000 0.000 0.000 0.000 0.000 0.000 0.000 0.000 0.000"/><feFuncB type="table" tableValues="1.000 0.986 0.965 0.892 0.818 0.740 0.658 0.575 0.499 0.429 0.364 0.301 0.238 0.172 0.105 0.039 0.000 0.000 0.000 0.000 0.000 0.000 0.000 0.000 0.000 0.000 0.000 0.000 0.000 0.000 0.000 0.000 0.000 0.000 0.000 0.000 0.000 0.000 0.000 0.000 0.000 0.000 0.000 0.000 0.000 0.000 0.040 0.120 0.200 0.288 0.389 0.491 0.592 0.692 0.790 0.888 0.986 0.964 0.922 0.880 0.838 0.796 0.802 0.827 0.852 0.877 0.905 0.933 0.962 0.990 0.978 0.944 0.909 0.875 0.841 0.807 0.772 0.715 0.625 0.536 0.447 0.507 0.581 0.654 0.728 0.802 0.876 0.949 0.952 0.802 0.651 0.500 0.349 0.198 0.083 0.000"/></feComponentTransfer></filter><filter id="sb" color-interpolation-filters="sRGB" x="-50%" y="-50%" width="200%" height="200%"><feGaussianBlur stdDeviation="2.5"/></filter><radialGradient id="tr" cx="1" cy="0" r="0.45"><stop offset="0" stop-color="rgb(38,38,38)"/><stop offset="1" stop-color="rgb(33,33,33)"/></radialGradient></defs><g filter="url(#cm)"><rect x="4" y="36" width="256" height="194" fill="rgb(33,33,33)"/><rect x="180" y="37" width="80" height="70" fill="url(#tr)"/><rect x="0" y="82" width="12" height="112" fill="rgb(37,37,37)" filter="url(#sb)"/><rect x="256" y="37" width="10" height="191" fill="rgb(38,38,38)" filter="url(#sb)"/><g fill="none" stroke-linecap="round" stroke-linejoin="round"><path d="M21.6 89.0H71.4" stroke="rgb(33,33,33)" stroke-width="23.20"/><path d="M21.6 107.0H71.4" stroke="rgb(33,33,33)" stroke-width="23.20"/><path d="M21.6 125.0H71.4" stroke="rgb(33,33,33)" stroke-width="23.20"/><path d="M21.6 143.1H71.4" stroke="rgb(33,33,33)" stroke-width="23.20"/><path d="M21.6 161.3H71.4" stroke="rgb(33,33,33)" stroke-width="23.20"/><path d="M21.6 179.3H71.4" stroke="rgb(33,33,33)" stroke-width="23.20"/><path d="M21.6 89.0H71.4" stroke="rgb(37,37,37)" stroke-width="22.20"/><path d="M21.6 107.0H71.4" stroke="rgb(37,37,37)" stroke-width="22.20"/><path d="M21.6 125.0H71.4" stroke="rgb(37,37,37)" stroke-width="22.20"/><path d="M21.6 143.1H71.4" stroke="rgb(37,37,37)" stroke-width="22.20"/><path d="M21.6 161.3H71.4" stroke="rgb(37,37,37)" stroke-width="22.20"/><path d="M21.6 179.3H71.4" stroke="rgb(37,37,37)" stroke-width="22.20"/><path d="M199.5 89.0H250.0" stroke="rgb(33,33,33)" stroke-width="22.60"/><path d="M199.5 107.0H250.0" stroke="rgb(33,33,33)" stroke-width="22.60"/><path d="M199.5 125.0H250.0" stroke="rgb(33,33,33)" stroke-width="22.60"/><path d="M199.5 143.1H250.0" stroke="rgb(33,33,33)" stroke-width="22.60"/><path d="M199.5 161.3H250.0" stroke="rgb(33,33,33)" stroke-width="22.60"/><path d="M199.5 179.3H250.0" stroke="rgb(33,33,33)" stroke-width="22.60"/><path d="M91.8 30V62L97.3 70" stroke="rgb(33,33,33)" stroke-width="23.00"/><path d="M110.1 30V62L110.2 70" stroke="rgb(33,33,33)" stroke-width="23.00"/><path d="M126.2 30V62L123 70" stroke="rgb(33,33,33)" stroke-width="23.00"/><path d="M136.4 69V70" stroke="rgb(33,33,33)" stroke-width="23.00"/><path d="M143.8 30V62L149.3 70" stroke="rgb(33,33,33)" stroke-width="23.00"/><path d="M162.2 30V62L162.2 70" stroke="rgb(33,33,33)" stroke-width="23.00"/><path d="M179.0 30V62L175.6 70" stroke="rgb(33,33,33)" stroke-width="23.00"/><path d="M21.6 89.0H71.4" stroke="rgb(40,40,40)" stroke-width="21.20"/><path d="M21.6 107.0H71.4" stroke="rgb(40,40,40)" stroke-width="21.20"/><path d="M21.6 125.0H71.4" stroke="rgb(40,40,40)" stroke-width="21.20"/><path d="M21.6 143.1H71.4" stroke="rgb(40,40,40)" stroke-width="21.20"/><path d="M21.6 161.3H71.4" stroke="rgb(40,40,40)" stroke-width="21.20"/><path d="M21.6 179.3H71.4" stroke="rgb(40,40,40)" stroke-width="21.20"/><path d="M199.5 89.0H250.0" stroke="rgb(36,36,36)" stroke-width="21.60"/><path d="M199.5 107.0H250.0" stroke="rgb(36,36,36)" stroke-width="21.60"/><path d="M199.5 125.0H250.0" stroke="rgb(36,36,36)" stroke-width="21.60"/><path d="M199.5 143.1H250.0" stroke="rgb(36,36,36)" stroke-width="21.60"/><path d="M199.5 161.3H250.0" stroke="rgb(36,36,36)" stroke-width="21.60"/><path d="M199.5 179.3H250.0" stroke="rgb(36,36,36)" stroke-width="21.60"/><path d="M91.8 30V62L97.3 70" stroke="rgb(37,37,37)" stroke-width="22.00"/><path d="M110.1 30V62L110.2 70" stroke="rgb(37,37,37)" stroke-width="22.00"/><path d="M126.2 30V62L123 70" stroke="rgb(37,37,37)" stroke-width="22.00"/><path d="M136.4 69V70" stroke="rgb(37,37,37)" stroke-width="22.00"/><path d="M143.8 30V62L149.3 70" stroke="rgb(37,37,37)" stroke-width="22.00"/><path d="M162.2 30V62L162.2 70" stroke="rgb(37,37,37)" stroke-width="22.00"/><path d="M179.0 30V62L175.6 70" stroke="rgb(37,37,37)" stroke-width="22.00"/><path d="M90.5 240V204L96.4 194" stroke="rgb(33,33,33)" stroke-width="21.00"/><path d="M108 240V204L109.9 194" stroke="rgb(33,33,33)" stroke-width="21.00"/><path d="M125.7 240V204L123.4 194" stroke="rgb(33,33,33)" stroke-width="21.00"/><path d="M143.3 240V204L136.3 194" stroke="rgb(33,33,33)" stroke-width="21.00"/><path d="M143.3 240V204L150.3 194" stroke="rgb(33,33,33)" stroke-width="21.00"/><path d="M162 240V204L163.2 194" stroke="rgb(33,33,33)" stroke-width="21.00"/><path d="M177.3 240V204L176.1 194" stroke="rgb(33,33,33)" stroke-width="21.00"/><path d="M21.6 89.0H71.4" stroke="rgb(44,44,44)" stroke-width="20.20"/><path d="M21.6 107.0H71.4" stroke="rgb(44,44,44)" stroke-width="20.20"/><path d="M21.6 125.0H71.4" stroke="rgb(44,44,44)" stroke-width="20.20"/><path d="M21.6 143.1H71.4" stroke="rgb(44,44,44)" stroke-width="20.20"/><path d="M21.6 161.3H71.4" stroke="rgb(44,44,44)" stroke-width="20.20"/><path d="M21.6 179.3H71.4" stroke="rgb(44,44,44)" stroke-width="20.20"/><path d="M199.5 89.0H250.0" stroke="rgb(38,38,38)" stroke-width="20.60"/><path d="M199.5 107.0H250.0" stroke="rgb(38,38,38)" stroke-width="20.60"/><path d="M199.5 125.0H250.0" stroke="rgb(38,38,38)" stroke-width="20.60"/><path d="M199.5 143.1H250.0" stroke="rgb(38,38,38)" stroke-width="20.60"/><path d="M199.5 161.3H250.0" stroke="rgb(38,38,38)" stroke-width="20.60"/><path d="M199.5 179.3H250.0" stroke="rgb(38,38,38)" stroke-width="20.60"/><path d="M91.8 30V62L97.3 70" stroke="rgb(41,41,41)" stroke-width="21.00"/><path d="M110.1 30V62L110.2 70" stroke="rgb(41,41,41)" stroke-width="21.00"/><path d="M126.2 30V62L123 70" stroke="rgb(41,41,41)" stroke-width="21.00"/><path d="M136.4 69V70" stroke="rgb(41,41,41)" stroke-width="21.00"/><path d="M143.8 30V62L149.3 70" stroke="rgb(41,41,41)" stroke-width="21.00"/><path d="M162.2 30V62L162.2 70" stroke="rgb(41,41,41)" stroke-width="21.00"/><path d="M179.0 30V62L175.6 70" stroke="rgb(41,41,41)" stroke-width="21.00"/><path d="M90.5 240V204L96.4 194" stroke="rgb(37,37,37)" stroke-width="20.00"/><path d="M108 240V204L109.9 194" stroke="rgb(37,37,37)" stroke-width="20.00"/><path d="M125.7 240V204L123.4 194" stroke="rgb(37,37,37)" stroke-width="20.00"/><path d="M143.3 240V204L136.3 194" stroke="rgb(37,37,37)" stroke-width="20.00"/><path d="M143.3 240V204L150.3 194" stroke="rgb(37,37,37)" stroke-width="20.00"/><path d="M162 240V204L163.2 194" stroke="rgb(37,37,37)" stroke-width="20.00"/><path d="M177.3 240V204L176.1 194" stroke="rgb(37,37,37)" stroke-width="20.00"/><path d="M21.6 89.0H71.4" stroke="rgb(48,48,48)" stroke-width="19.20"/><path d="M21.6 107.0H71.4" stroke="rgb(48,48,48)" stroke-width="19.20"/><path d="M21.6 125.0H71.4" stroke="rgb(48,48,48)" stroke-width="19.20"/><path d="M21.6 143.1H71.4" stroke="rgb(48,48,48)" stroke-width="19.20"/><path d="M21.6 161.3H71.4" stroke="rgb(48,48,48)" stroke-width="19.20"/><path d="M21.6 179.3H71.4" stroke="rgb(48,48,48)" stroke-width="19.20"/><path d="M199.5 89.0H250.0" stroke="rgb(44,44,44)" stroke-width="19.60"/><path d="M199.5 107.0H250.0" stroke="rgb(44,44,44)" stroke-width="19.60"/><path d="M199.5 125.0H250.0" stroke="rgb(44,44,44)" stroke-width="19.60"/><path d="M199.5 143.1H250.0" stroke="rgb(44,44,44)" stroke-width="19.60"/><path d="M199.5 161.3H250.0" stroke="rgb(44,44,44)" stroke-width="19.60"/><path d="M199.5 179.3H250.0" stroke="rgb(44,44,44)" stroke-width="19.60"/><path d="M91.8 30V62L97.3 70" stroke="rgb(45,45,45)" stroke-width="20.00"/><path d="M110.1 30V62L110.2 70" stroke="rgb(45,45,45)" stroke-width="20.00"/><path d="M126.2 30V62L123 70" stroke="rgb(45,45,45)" stroke-width="20.00"/><path d="M136.4 69V70" stroke="rgb(45,45,45)" stroke-width="20.00"/><path d="M143.8 30V62L149.3 70" stroke="rgb(45,45,45)" stroke-width="20.00"/><path d="M162.2 30V62L162.2 70" stroke="rgb(45,45,45)" stroke-width="20.00"/><path d="M179.0 30V62L175.6 70" stroke="rgb(45,45,45)" stroke-width="20.00"/><path d="M90.5 240V204L96.4 194" stroke="rgb(42,42,42)" stroke-width="19.00"/><path d="M108 240V204L109.9 194" stroke="rgb(42,42,42)" stroke-width="19.00"/><path d="M125.7 240V204L123.4 194" stroke="rgb(42,42,42)" stroke-width="19.00"/><path d="M143.3 240V204L136.3 194" stroke="rgb(42,42,42)" stroke-width="19.00"/><path d="M143.3 240V204L150.3 194" stroke="rgb(42,42,42)" stroke-width="19.00"/><path d="M162 240V204L163.2 194" stroke="rgb(42,42,42)" stroke-width="19.00"/><path d="M177.3 240V204L176.1 194" stroke="rgb(42,42,42)" stroke-width="19.00"/><path d="M21.6 89.0H71.4" stroke="rgb(53,53,53)" stroke-width="18.20"/><path d="M21.6 107.0H71.4" stroke="rgb(53,53,53)" stroke-width="18.20"/><path d="M21.6 125.0H71.4" stroke="rgb(53,53,53)" stroke-width="18.20"/><path d="M21.6 143.1H71.4" stroke="rgb(53,53,53)" stroke-width="18.20"/><path d="M21.6 161.3H71.4" stroke="rgb(53,53,53)" stroke-width="18.20"/><path d="M21.6 179.3H71.4" stroke="rgb(53,53,53)" stroke-width="18.20"/><path d="M199.5 89.0H250.0" stroke="rgb(49,49,49)" stroke-width="18.60"/><path d="M199.5 107.0H250.0" stroke="rgb(49,49,49)" stroke-width="18.60"/><path d="M199.5 125.0H250.0" stroke="rgb(49,49,49)" stroke-width="18.60"/><path d="M199.5 143.1H250.0" stroke="rgb(49,49,49)" stroke-width="18.60"/><path d="M199.5 161.3H250.0" stroke="rgb(49,49,49)" stroke-width="18.60"/><path d="M199.5 179.3H250.0" stroke="rgb(49,49,49)" stroke-width="18.60"/><path d="M91.8 30V62L97.3 70" stroke="rgb(49,49,49)" stroke-width="19.00"/><path d="M110.1 30V62L110.2 70" stroke="rgb(49,49,49)" stroke-width="19.00"/><path d="M126.2 30V62L123 70" stroke="rgb(49,49,49)" stroke-width="19.00"/><path d="M136.4 69V70" stroke="rgb(49,49,49)" stroke-width="19.00"/><path d="M143.8 30V62L149.3 70" stroke="rgb(49,49,49)" stroke-width="19.00"/><path d="M162.2 30V62L162.2 70" stroke="rgb(49,49,49)" stroke-width="19.00"/><path d="M179.0 30V62L175.6 70" stroke="rgb(49,49,49)" stroke-width="19.00"/><path d="M90.5 240V204L96.4 194" stroke="rgb(47,47,47)" stroke-width="18.00"/><path d="M108 240V204L109.9 194" stroke="rgb(47,47,47)" stroke-width="18.00"/><path d="M125.7 240V204L123.4 194" stroke="rgb(47,47,47)" stroke-width="18.00"/><path d="M143.3 240V204L136.3 194" stroke="rgb(47,47,47)" stroke-width="18.00"/><path d="M143.3 240V204L150.3 194" stroke="rgb(47,47,47)" stroke-width="18.00"/><path d="M162 240V204L163.2 194" stroke="rgb(47,47,47)" stroke-width="18.00"/><path d="M177.3 240V204L176.1 194" stroke="rgb(47,47,47)" stroke-width="18.00"/><path d="M21.6 89.0H71.4" stroke="rgb(57,57,57)" stroke-width="17.20"/><path d="M21.6 107.0H71.4" stroke="rgb(57,57,57)" stroke-width="17.20"/><path d="M21.6 125.0H71.4" stroke="rgb(57,57,57)" stroke-width="17.20"/><path d="M21.6 143.1H71.4" stroke="rgb(57,57,57)" stroke-width="17.20"/><path d="M21.6 161.3H71.4" stroke="rgb(57,57,57)" stroke-width="17.20"/><path d="M21.6 179.3H71.4" stroke="rgb(57,57,57)" stroke-width="17.20"/><path d="M199.5 89.0H250.0" stroke="rgb(56,56,56)" stroke-width="17.60"/><path d="M199.5 107.0H250.0" stroke="rgb(56,56,56)" stroke-width="17.60"/><path d="M199.5 125.0H250.0" stroke="rgb(56,56,56)" stroke-width="17.60"/><path d="M199.5 143.1H250.0" stroke="rgb(56,56,56)" stroke-width="17.60"/><path d="M199.5 161.3H250.0" stroke="rgb(56,56,56)" stroke-width="17.60"/><path d="M199.5 179.3H250.0" stroke="rgb(56,56,56)" stroke-width="17.60"/><path d="M91.8 30V62L97.3 70" stroke="rgb(53,53,53)" stroke-width="18.00"/><path d="M110.1 30V62L110.2 70" stroke="rgb(53,53,53)" stroke-width="18.00"/><path d="M126.2 30V62L123 70" stroke="rgb(53,53,53)" stroke-width="18.00"/><path d="M136.4 69V70" stroke="rgb(53,53,53)" stroke-width="18.00"/><path d="M143.8 30V62L149.3 70" stroke="rgb(53,53,53)" stroke-width="18.00"/><path d="M162.2 30V62L162.2 70" stroke="rgb(53,53,53)" stroke-width="18.00"/><path d="M179.0 30V62L175.6 70" stroke="rgb(53,53,53)" stroke-width="18.00"/><path d="M90.5 240V204L96.4 194" stroke="rgb(52,52,52)" stroke-width="17.00"/><path d="M108 240V204L109.9 194" stroke="rgb(52,52,52)" stroke-width="17.00"/><path d="M125.7 240V204L123.4 194" stroke="rgb(52,52,52)" stroke-width="17.00"/><path d="M143.3 240V204L136.3 194" stroke="rgb(52,52,52)" stroke-width="17.00"/><path d="M143.3 240V204L150.3 194" stroke="rgb(52,52,52)" stroke-width="17.00"/><path d="M162 240V204L163.2 194" stroke="rgb(52,52,52)" stroke-width="17.00"/><path d="M177.3 240V204L176.1 194" stroke="rgb(52,52,52)" stroke-width="17.00"/><path d="M21.6 89.0H71.4" stroke="rgb(62,62,62)" stroke-width="16.20"/><path d="M21.6 107.0H71.4" stroke="rgb(62,62,62)" stroke-width="16.20"/><path d="M21.6 125.0H71.4" stroke="rgb(62,62,62)" stroke-width="16.20"/><path d="M21.6 143.1H71.4" stroke="rgb(62,62,62)" stroke-width="16.20"/><path d="M21.6 161.3H71.4" stroke="rgb(62,62,62)" stroke-width="16.20"/><path d="M21.6 179.3H71.4" stroke="rgb(62,62,62)" stroke-width="16.20"/><path d="M199.5 89.0H250.0" stroke="rgb(64,64,64)" stroke-width="16.60"/><path d="M199.5 107.0H250.0" stroke="rgb(64,64,64)" stroke-width="16.60"/><path d="M199.5 125.0H250.0" stroke="rgb(64,64,64)" stroke-width="16.60"/><path d="M199.5 143.1H250.0" stroke="rgb(64,64,64)" stroke-width="16.60"/><path d="M199.5 161.3H250.0" stroke="rgb(64,64,64)" stroke-width="16.60"/><path d="M199.5 179.3H250.0" stroke="rgb(64,64,64)" stroke-width="16.60"/><path d="M91.8 30V62L97.3 70" stroke="rgb(58,58,58)" stroke-width="17.00"/><path d="M110.1 30V62L110.2 70" stroke="rgb(58,58,58)" stroke-width="17.00"/><path d="M126.2 30V62L123 70" stroke="rgb(58,58,58)" stroke-width="17.00"/><path d="M136.4 69V70" stroke="rgb(58,58,58)" stroke-width="17.00"/><path d="M143.8 30V62L149.3 70" stroke="rgb(58,58,58)" stroke-width="17.00"/><path d="M162.2 30V62L162.2 70" stroke="rgb(58,58,58)" stroke-width="17.00"/><path d="M179.0 30V62L175.6 70" stroke="rgb(58,58,58)" stroke-width="17.00"/><path d="M90.5 240V204L96.4 194" stroke="rgb(57,57,57)" stroke-width="16.00"/><path d="M108 240V204L109.9 194" stroke="rgb(57,57,57)" stroke-width="16.00"/><path d="M125.7 240V204L123.4 194" stroke="rgb(57,57,57)" stroke-width="16.00"/><path d="M143.3 240V204L136.3 194" stroke="rgb(57,57,57)" stroke-width="16.00"/><path d="M143.3 240V204L150.3 194" stroke="rgb(57,57,57)" stroke-width="16.00"/><path d="M162 240V204L163.2 194" stroke="rgb(57,57,57)" stroke-width="16.00"/><path d="M177.3 240V204L176.1 194" stroke="rgb(57,57,57)" stroke-width="16.00"/><path d="M21.6 89.0H71.4" stroke="rgb(67,67,67)" stroke-width="15.20"/><path d="M21.6 107.0H71.4" stroke="rgb(67,67,67)" stroke-width="15.20"/><path d="M21.6 125.0H71.4" stroke="rgb(67,67,67)" stroke-width="15.20"/><path d="M21.6 143.1H71.4" stroke="rgb(67,67,67)" stroke-width="15.20"/><path d="M21.6 161.3H71.4" stroke="rgb(67,67,67)" stroke-width="15.20"/><path d="M21.6 179.3H71.4" stroke="rgb(67,67,67)" stroke-width="15.20"/><path d="M199.5 89.0H250.0" stroke="rgb(72,72,72)" stroke-width="15.60"/><path d="M199.5 107.0H250.0" stroke="rgb(72,72,72)" stroke-width="15.60"/><path d="M199.5 125.0H250.0" stroke="rgb(72,72,72)" stroke-width="15.60"/><path d="M199.5 143.1H250.0" stroke="rgb(72,72,72)" stroke-width="15.60"/><path d="M199.5 161.3H250.0" stroke="rgb(72,72,72)" stroke-width="15.60"/><path d="M199.5 179.3H250.0" stroke="rgb(72,72,72)" stroke-width="15.60"/><path d="M91.8 30V62L97.3 70" stroke="rgb(65,65,65)" stroke-width="16.00"/><path d="M110.1 30V62L110.2 70" stroke="rgb(65,65,65)" stroke-width="16.00"/><path d="M126.2 30V62L123 70" stroke="rgb(65,65,65)" stroke-width="16.00"/><path d="M136.4 69V70" stroke="rgb(65,65,65)" stroke-width="16.00"/><path d="M143.8 30V62L149.3 70" stroke="rgb(65,65,65)" stroke-width="16.00"/><path d="M162.2 30V62L162.2 70" stroke="rgb(65,65,65)" stroke-width="16.00"/><path d="M179.0 30V62L175.6 70" stroke="rgb(65,65,65)" stroke-width="16.00"/><path d="M90.5 240V204L96.4 194" stroke="rgb(63,63,63)" stroke-width="15.00"/><path d="M108 240V204L109.9 194" stroke="rgb(63,63,63)" stroke-width="15.00"/><path d="M125.7 240V204L123.4 194" stroke="rgb(63,63,63)" stroke-width="15.00"/><path d="M143.3 240V204L136.3 194" stroke="rgb(63,63,63)" stroke-width="15.00"/><path d="M143.3 240V204L150.3 194" stroke="rgb(63,63,63)" stroke-width="15.00"/><path d="M162 240V204L163.2 194" stroke="rgb(63,63,63)" stroke-width="15.00"/><path d="M177.3 240V204L176.1 194" stroke="rgb(63,63,63)" stroke-width="15.00"/><path d="M21.6 89.0H71.4" stroke="rgb(72,72,72)" stroke-width="14.20"/><path d="M21.6 107.0H71.4" stroke="rgb(72,72,72)" stroke-width="14.20"/><path d="M21.6 125.0H71.4" stroke="rgb(72,72,72)" stroke-width="14.20"/><path d="M21.6 143.1H71.4" stroke="rgb(72,72,72)" stroke-width="14.20"/><path d="M21.6 161.3H71.4" stroke="rgb(72,72,72)" stroke-width="14.20"/><path d="M21.6 179.3H71.4" stroke="rgb(72,72,72)" stroke-width="14.20"/><path d="M199.5 89.0H250.0" stroke="rgb(79,79,79)" stroke-width="14.60"/><path d="M199.5 107.0H250.0" stroke="rgb(79,79,79)" stroke-width="14.60"/><path d="M199.5 125.0H250.0" stroke="rgb(79,79,79)" stroke-width="14.60"/><path d="M199.5 143.1H250.0" stroke="rgb(79,79,79)" stroke-width="14.60"/><path d="M199.5 161.3H250.0" stroke="rgb(79,79,79)" stroke-width="14.60"/><path d="M199.5 179.3H250.0" stroke="rgb(79,79,79)" stroke-width="14.60"/><path d="M91.8 30V62L97.3 70" stroke="rgb(71,71,71)" stroke-width="15.00"/><path d="M110.1 30V62L110.2 70" stroke="rgb(71,71,71)" stroke-width="15.00"/><path d="M126.2 30V62L123 70" stroke="rgb(71,71,71)" stroke-width="15.00"/><path d="M136.4 69V70" stroke="rgb(71,71,71)" stroke-width="15.00"/><path d="M143.8 30V62L149.3 70" stroke="rgb(71,71,71)" stroke-width="15.00"/><path d="M162.2 30V62L162.2 70" stroke="rgb(71,71,71)" stroke-width="15.00"/><path d="M179.0 30V62L175.6 70" stroke="rgb(71,71,71)" stroke-width="15.00"/><path d="M90.5 240V204L96.4 194" stroke="rgb(69,69,69)" stroke-width="14.00"/><path d="M108 240V204L109.9 194" stroke="rgb(69,69,69)" stroke-width="14.00"/><path d="M125.7 240V204L123.4 194" stroke="rgb(69,69,69)" stroke-width="14.00"/><path d="M143.3 240V204L136.3 194" stroke="rgb(69,69,69)" stroke-width="14.00"/><path d="M143.3 240V204L150.3 194" stroke="rgb(69,69,69)" stroke-width="14.00"/><path d="M162 240V204L163.2 194" stroke="rgb(69,69,69)" stroke-width="14.00"/><path d="M177.3 240V204L176.1 194" stroke="rgb(69,69,69)" stroke-width="14.00"/><path d="M21.6 89.0H71.4" stroke="rgb(78,78,78)" stroke-width="13.20"/><path d="M21.6 107.0H71.4" stroke="rgb(78,78,78)" stroke-width="13.20"/><path d="M21.6 125.0H71.4" stroke="rgb(78,78,78)" stroke-width="13.20"/><path d="M21.6 143.1H71.4" stroke="rgb(78,78,78)" stroke-width="13.20"/><path d="M21.6 161.3H71.4" stroke="rgb(78,78,78)" stroke-width="13.20"/><path d="M21.6 179.3H71.4" stroke="rgb(78,78,78)" stroke-width="13.20"/><path d="M199.5 89.0H250.0" stroke="rgb(85,85,85)" stroke-width="13.60"/><path d="M199.5 107.0H250.0" stroke="rgb(85,85,85)" stroke-width="13.60"/><path d="M199.5 125.0H250.0" stroke="rgb(85,85,85)" stroke-width="13.60"/><path d="M199.5 143.1H250.0" stroke="rgb(85,85,85)" stroke-width="13.60"/><path d="M199.5 161.3H250.0" stroke="rgb(85,85,85)" stroke-width="13.60"/><path d="M199.5 179.3H250.0" stroke="rgb(85,85,85)" stroke-width="13.60"/><path d="M91.8 30V62L97.3 70" stroke="rgb(77,77,77)" stroke-width="14.00"/><path d="M110.1 30V62L110.2 70" stroke="rgb(77,77,77)" stroke-width="14.00"/><path d="M126.2 30V62L123 70" stroke="rgb(77,77,77)" stroke-width="14.00"/><path d="M136.4 69V70" stroke="rgb(77,77,77)" stroke-width="14.00"/><path d="M143.8 30V62L149.3 70" stroke="rgb(77,77,77)" stroke-width="14.00"/><path d="M162.2 30V62L162.2 70" stroke="rgb(77,77,77)" stroke-width="14.00"/><path d="M179.0 30V62L175.6 70" stroke="rgb(77,77,77)" stroke-width="14.00"/><path d="M90.5 240V204L96.4 194" stroke="rgb(75,75,75)" stroke-width="13.00"/><path d="M108 240V204L109.9 194" stroke="rgb(75,75,75)" stroke-width="13.00"/><path d="M125.7 240V204L123.4 194" stroke="rgb(75,75,75)" stroke-width="13.00"/><path d="M143.3 240V204L136.3 194" stroke="rgb(75,75,75)" stroke-width="13.00"/><path d="M143.3 240V204L150.3 194" stroke="rgb(75,75,75)" stroke-width="13.00"/><path d="M162 240V204L163.2 194" stroke="rgb(75,75,75)" stroke-width="13.00"/><path d="M177.3 240V204L176.1 194" stroke="rgb(75,75,75)" stroke-width="13.00"/><path d="M21.6 89.0H71.4" stroke="rgb(85,85,85)" stroke-width="12.20"/><path d="M21.6 107.0H71.4" stroke="rgb(85,85,85)" stroke-width="12.20"/><path d="M21.6 125.0H71.4" stroke="rgb(85,85,85)" stroke-width="12.20"/><path d="M21.6 143.1H71.4" stroke="rgb(85,85,85)" stroke-width="12.20"/><path d="M21.6 161.3H71.4" stroke="rgb(85,85,85)" stroke-width="12.20"/><path d="M21.6 179.3H71.4" stroke="rgb(85,85,85)" stroke-width="12.20"/><path d="M199.5 89.0H250.0" stroke="rgb(92,92,92)" stroke-width="12.60"/><path d="M199.5 107.0H250.0" stroke="rgb(92,92,92)" stroke-width="12.60"/><path d="M199.5 125.0H250.0" stroke="rgb(92,92,92)" stroke-width="12.60"/><path d="M199.5 143.1H250.0" stroke="rgb(92,92,92)" stroke-width="12.60"/><path d="M199.5 161.3H250.0" stroke="rgb(92,92,92)" stroke-width="12.60"/><path d="M199.5 179.3H250.0" stroke="rgb(92,92,92)" stroke-width="12.60"/><path d="M91.8 30V62L97.3 70" stroke="rgb(83,83,83)" stroke-width="13.00"/><path d="M110.1 30V62L110.2 70" stroke="rgb(83,83,83)" stroke-width="13.00"/><path d="M126.2 30V62L123 70" stroke="rgb(83,83,83)" stroke-width="13.00"/><path d="M136.4 69V70" stroke="rgb(83,83,83)" stroke-width="13.00"/><path d="M143.8 30V62L149.3 70" stroke="rgb(83,83,83)" stroke-width="13.00"/><path d="M162.2 30V62L162.2 70" stroke="rgb(83,83,83)" stroke-width="13.00"/><path d="M179.0 30V62L175.6 70" stroke="rgb(83,83,83)" stroke-width="13.00"/><path d="M90.5 240V204L96.4 194" stroke="rgb(82,82,82)" stroke-width="12.00"/><path d="M108 240V204L109.9 194" stroke="rgb(82,82,82)" stroke-width="12.00"/><path d="M125.7 240V204L123.4 194" stroke="rgb(82,82,82)" stroke-width="12.00"/><path d="M143.3 240V204L136.3 194" stroke="rgb(82,82,82)" stroke-width="12.00"/><path d="M143.3 240V204L150.3 194" stroke="rgb(82,82,82)" stroke-width="12.00"/><path d="M162 240V204L163.2 194" stroke="rgb(82,82,82)" stroke-width="12.00"/><path d="M177.3 240V204L176.1 194" stroke="rgb(82,82,82)" stroke-width="12.00"/><path d="M21.6 89.0H71.4" stroke="rgb(91,91,91)" stroke-width="11.20"/><path d="M21.6 107.0H71.4" stroke="rgb(91,91,91)" stroke-width="11.20"/><path d="M21.6 125.0H71.4" stroke="rgb(91,91,91)" stroke-width="11.20"/><path d="M21.6 143.1H71.4" stroke="rgb(91,91,91)" stroke-width="11.20"/><path d="M21.6 161.3H71.4" stroke="rgb(91,91,91)" stroke-width="11.20"/><path d="M21.6 179.3H71.4" stroke="rgb(91,91,91)" stroke-width="11.20"/><path d="M199.5 89.0H250.0" stroke="rgb(98,98,98)" stroke-width="11.60"/><path d="M199.5 107.0H250.0" stroke="rgb(98,98,98)" stroke-width="11.60"/><path d="M199.5 125.0H250.0" stroke="rgb(98,98,98)" stroke-width="11.60"/><path d="M199.5 143.1H250.0" stroke="rgb(98,98,98)" stroke-width="11.60"/><path d="M199.5 161.3H250.0" stroke="rgb(98,98,98)" stroke-width="11.60"/><path d="M199.5 179.3H250.0" stroke="rgb(98,98,98)" stroke-width="11.60"/><path d="M91.8 30V62L97.3 70" stroke="rgb(90,90,90)" stroke-width="12.00"/><path d="M110.1 30V62L110.2 70" stroke="rgb(90,90,90)" stroke-width="12.00"/><path d="M126.2 30V62L123 70" stroke="rgb(90,90,90)" stroke-width="12.00"/><path d="M136.4 69V70" stroke="rgb(90,90,90)" stroke-width="12.00"/><path d="M143.8 30V62L149.3 70" stroke="rgb(90,90,90)" stroke-width="12.00"/><path d="M162.2 30V62L162.2 70" stroke="rgb(90,90,90)" stroke-width="12.00"/><path d="M179.0 30V62L175.6 70" stroke="rgb(90,90,90)" stroke-width="12.00"/><path d="M90.5 240V204L96.4 194" stroke="rgb(88,88,88)" stroke-width="11.00"/><path d="M108 240V204L109.9 194" stroke="rgb(88,88,88)" stroke-width="11.00"/><path d="M125.7 240V204L123.4 194" stroke="rgb(88,88,88)" stroke-width="11.00"/><path d="M143.3 240V204L136.3 194" stroke="rgb(88,88,88)" stroke-width="11.00"/><path d="M143.3 240V204L150.3 194" stroke="rgb(88,88,88)" stroke-width="11.00"/><path d="M162 240V204L163.2 194" stroke="rgb(88,88,88)" stroke-width="11.00"/><path d="M177.3 240V204L176.1 194" stroke="rgb(88,88,88)" stroke-width="11.00"/><path d="M21.6 89.0H71.4" stroke="rgb(98,98,98)" stroke-width="10.20"/><path d="M21.6 107.0H71.4" stroke="rgb(98,98,98)" stroke-width="10.20"/><path d="M21.6 125.0H71.4" stroke="rgb(98,98,98)" stroke-width="10.20"/><path d="M21.6 143.1H71.4" stroke="rgb(98,98,98)" stroke-width="10.20"/><path d="M21.6 161.3H71.4" stroke="rgb(98,98,98)" stroke-width="10.20"/><path d="M21.6 179.3H71.4" stroke="rgb(98,98,98)" stroke-width="10.20"/><path d="M199.5 89.0H250.0" stroke="rgb(104,104,104)" stroke-width="10.60"/><path d="M199.5 107.0H250.0" stroke="rgb(104,104,104)" stroke-width="10.60"/><path d="M199.5 125.0H250.0" stroke="rgb(104,104,104)" stroke-width="10.60"/><path d="M199.5 143.1H250.0" stroke="rgb(104,104,104)" stroke-width="10.60"/><path d="M199.5 161.3H250.0" stroke="rgb(104,104,104)" stroke-width="10.60"/><path d="M199.5 179.3H250.0" stroke="rgb(104,104,104)" stroke-width="10.60"/><path d="M91.8 30V62L97.3 70" stroke="rgb(98,98,98)" stroke-width="11.00"/><path d="M110.1 30V62L110.2 70" stroke="rgb(98,98,98)" stroke-width="11.00"/><path d="M126.2 30V62L123 70" stroke="rgb(98,98,98)" stroke-width="11.00"/><path d="M136.4 69V70" stroke="rgb(98,98,98)" stroke-width="11.00"/><path d="M143.8 30V62L149.3 70" stroke="rgb(98,98,98)" stroke-width="11.00"/><path d="M162.2 30V62L162.2 70" stroke="rgb(98,98,98)" stroke-width="11.00"/><path d="M179.0 30V62L175.6 70" stroke="rgb(98,98,98)" stroke-width="11.00"/><path d="M90.5 240V204L96.4 194" stroke="rgb(94,94,94)" stroke-width="10.00"/><path d="M108 240V204L109.9 194" stroke="rgb(94,94,94)" stroke-width="10.00"/><path d="M125.7 240V204L123.4 194" stroke="rgb(94,94,94)" stroke-width="10.00"/><path d="M143.3 240V204L136.3 194" stroke="rgb(94,94,94)" stroke-width="10.00"/><path d="M143.3 240V204L150.3 194" stroke="rgb(94,94,94)" stroke-width="10.00"/><path d="M162 240V204L163.2 194" stroke="rgb(94,94,94)" stroke-width="10.00"/><path d="M177.3 240V204L176.1 194" stroke="rgb(94,94,94)" stroke-width="10.00"/><path d="M21.6 89.0H71.4" stroke="rgb(105,105,105)" stroke-width="9.20"/><path d="M21.6 107.0H71.4" stroke="rgb(105,105,105)" stroke-width="9.20"/><path d="M21.6 125.0H71.4" stroke="rgb(105,105,105)" stroke-width="9.20"/><path d="M21.6 143.1H71.4" stroke="rgb(105,105,105)" stroke-width="9.20"/><path d="M21.6 161.3H71.4" stroke="rgb(105,105,105)" stroke-width="9.20"/><path d="M21.6 179.3H71.4" stroke="rgb(105,105,105)" stroke-width="9.20"/><path d="M199.5 89.0H250.0" stroke="rgb(110,110,110)" stroke-width="9.60"/><path d="M199.5 107.0H250.0" stroke="rgb(110,110,110)" stroke-width="9.60"/><path d="M199.5 125.0H250.0" stroke="rgb(110,110,110)" stroke-width="9.60"/><path d="M199.5 143.1H250.0" stroke="rgb(110,110,110)" stroke-width="9.60"/><path d="M199.5 161.3H250.0" stroke="rgb(110,110,110)" stroke-width="9.60"/><path d="M199.5 179.3H250.0" stroke="rgb(110,110,110)" stroke-width="9.60"/><path d="M91.8 30V62L97.3 70" stroke="rgb(106,106,106)" stroke-width="10.00"/><path d="M110.1 30V62L110.2 70" stroke="rgb(106,106,106)" stroke-width="10.00"/><path d="M126.2 30V62L123 70" stroke="rgb(106,106,106)" stroke-width="10.00"/><path d="M136.4 69V70" stroke="rgb(106,106,106)" stroke-width="10.00"/><path d="M143.8 30V62L149.3 70" stroke="rgb(106,106,106)" stroke-width="10.00"/><path d="M162.2 30V62L162.2 70" stroke="rgb(106,106,106)" stroke-width="10.00"/><path d="M179.0 30V62L175.6 70" stroke="rgb(106,106,106)" stroke-width="10.00"/><path d="M90.5 240V204L96.4 194" stroke="rgb(101,101,101)" stroke-width="9.00"/><path d="M108 240V204L109.9 194" stroke="rgb(101,101,101)" stroke-width="9.00"/><path d="M125.7 240V204L123.4 194" stroke="rgb(101,101,101)" stroke-width="9.00"/><path d="M143.3 240V204L136.3 194" stroke="rgb(101,101,101)" stroke-width="9.00"/><path d="M143.3 240V204L150.3 194" stroke="rgb(101,101,101)" stroke-width="9.00"/><path d="M162 240V204L163.2 194" stroke="rgb(101,101,101)" stroke-width="9.00"/><path d="M177.3 240V204L176.1 194" stroke="rgb(101,101,101)" stroke-width="9.00"/><path d="M21.6 89.0H71.4" stroke="rgb(111,111,111)" stroke-width="8.20"/><path d="M21.6 107.0H71.4" stroke="rgb(111,111,111)" stroke-width="8.20"/><path d="M21.6 125.0H71.4" stroke="rgb(111,111,111)" stroke-width="8.20"/><path d="M21.6 143.1H71.4" stroke="rgb(111,111,111)" stroke-width="8.20"/><path d="M21.6 161.3H71.4" stroke="rgb(111,111,111)" stroke-width="8.20"/><path d="M21.6 179.3H71.4" stroke="rgb(111,111,111)" stroke-width="8.20"/><path d="M199.5 89.0H250.0" stroke="rgb(116,116,116)" stroke-width="8.60"/><path d="M199.5 107.0H250.0" stroke="rgb(116,116,116)" stroke-width="8.60"/><path d="M199.5 125.0H250.0" stroke="rgb(116,116,116)" stroke-width="8.60"/><path d="M199.5 143.1H250.0" stroke="rgb(116,116,116)" stroke-width="8.60"/><path d="M199.5 161.3H250.0" stroke="rgb(116,116,116)" stroke-width="8.60"/><path d="M199.5 179.3H250.0" stroke="rgb(116,116,116)" stroke-width="8.60"/><path d="M91.8 30V62L97.3 70" stroke="rgb(112,112,112)" stroke-width="9.00"/><path d="M110.1 30V62L110.2 70" stroke="rgb(112,112,112)" stroke-width="9.00"/><path d="M126.2 30V62L123 70" stroke="rgb(112,112,112)" stroke-width="9.00"/><path d="M136.4 69V70" stroke="rgb(112,112,112)" stroke-width="9.00"/><path d="M143.8 30V62L149.3 70" stroke="rgb(112,112,112)" stroke-width="9.00"/><path d="M162.2 30V62L162.2 70" stroke="rgb(112,112,112)" stroke-width="9.00"/><path d="M179.0 30V62L175.6 70" stroke="rgb(112,112,112)" stroke-width="9.00"/><path d="M90.5 240V204L96.4 194" stroke="rgb(107,107,107)" stroke-width="8.00"/><path d="M108 240V204L109.9 194" stroke="rgb(107,107,107)" stroke-width="8.00"/><path d="M125.7 240V204L123.4 194" stroke="rgb(107,107,107)" stroke-width="8.00"/><path d="M143.3 240V204L136.3 194" stroke="rgb(107,107,107)" stroke-width="8.00"/><path d="M143.3 240V204L150.3 194" stroke="rgb(107,107,107)" stroke-width="8.00"/><path d="M162 240V204L163.2 194" stroke="rgb(107,107,107)" stroke-width="8.00"/><path d="M177.3 240V204L176.1 194" stroke="rgb(107,107,107)" stroke-width="8.00"/><path d="M21.6 89.0H71.4" stroke="rgb(117,117,117)" stroke-width="7.20"/><path d="M21.6 107.0H71.4" stroke="rgb(117,117,117)" stroke-width="7.20"/><path d="M21.6 125.0H71.4" stroke="rgb(117,117,117)" stroke-width="7.20"/><path d="M21.6 143.1H71.4" stroke="rgb(117,117,117)" stroke-width="7.20"/><path d="M21.6 161.3H71.4" stroke="rgb(117,117,117)" stroke-width="7.20"/><path d="M21.6 179.3H71.4" stroke="rgb(117,117,117)" stroke-width="7.20"/><path d="M199.5 89.0H250.0" stroke="rgb(120,120,120)" stroke-width="7.60"/><path d="M199.5 107.0H250.0" stroke="rgb(120,120,120)" stroke-width="7.60"/><path d="M199.5 125.0H250.0" stroke="rgb(120,120,120)" stroke-width="7.60"/><path d="M199.5 143.1H250.0" stroke="rgb(120,120,120)" stroke-width="7.60"/><path d="M199.5 161.3H250.0" stroke="rgb(120,120,120)" stroke-width="7.60"/><path d="M199.5 179.3H250.0" stroke="rgb(120,120,120)" stroke-width="7.60"/><path d="M91.8 30V62L97.3 70" stroke="rgb(117,117,117)" stroke-width="8.00"/><path d="M110.1 30V62L110.2 70" stroke="rgb(117,117,117)" stroke-width="8.00"/><path d="M126.2 30V62L123 70" stroke="rgb(117,117,117)" stroke-width="8.00"/><path d="M136.4 69V70" stroke="rgb(117,117,117)" stroke-width="8.00"/><path d="M143.8 30V62L149.3 70" stroke="rgb(117,117,117)" stroke-width="8.00"/><path d="M162.2 30V62L162.2 70" stroke="rgb(117,117,117)" stroke-width="8.00"/><path d="M179.0 30V62L175.6 70" stroke="rgb(117,117,117)" stroke-width="8.00"/><path d="M90.5 240V204L96.4 194" stroke="rgb(113,113,113)" stroke-width="7.00"/><path d="M108 240V204L109.9 194" stroke="rgb(113,113,113)" stroke-width="7.00"/><path d="M125.7 240V204L123.4 194" stroke="rgb(113,113,113)" stroke-width="7.00"/><path d="M143.3 240V204L136.3 194" stroke="rgb(113,113,113)" stroke-width="7.00"/><path d="M143.3 240V204L150.3 194" stroke="rgb(113,113,113)" stroke-width="7.00"/><path d="M162 240V204L163.2 194" stroke="rgb(113,113,113)" stroke-width="7.00"/><path d="M177.3 240V204L176.1 194" stroke="rgb(113,113,113)" stroke-width="7.00"/><path d="M21.6 89.0H71.4" stroke="rgb(121,121,121)" stroke-width="6.20"/><path d="M21.6 107.0H71.4" stroke="rgb(121,121,121)" stroke-width="6.20"/><path d="M21.6 125.0H71.4" stroke="rgb(121,121,121)" stroke-width="6.20"/><path d="M21.6 143.1H71.4" stroke="rgb(121,121,121)" stroke-width="6.20"/><path d="M21.6 161.3H71.4" stroke="rgb(121,121,121)" stroke-width="6.20"/><path d="M21.6 179.3H71.4" stroke="rgb(121,121,121)" stroke-width="6.20"/><path d="M199.5 89.0H250.0" stroke="rgb(125,125,125)" stroke-width="6.60"/><path d="M199.5 107.0H250.0" stroke="rgb(125,125,125)" stroke-width="6.60"/><path d="M199.5 125.0H250.0" stroke="rgb(125,125,125)" stroke-width="6.60"/><path d="M199.5 143.1H250.0" stroke="rgb(125,125,125)" stroke-width="6.60"/><path d="M199.5 161.3H250.0" stroke="rgb(125,125,125)" stroke-width="6.60"/><path d="M199.5 179.3H250.0" stroke="rgb(125,125,125)" stroke-width="6.60"/><path d="M91.8 30V62L97.3 70" stroke="rgb(123,123,123)" stroke-width="7.00"/><path d="M110.1 30V62L110.2 70" stroke="rgb(123,123,123)" stroke-width="7.00"/><path d="M126.2 30V62L123 70" stroke="rgb(123,123,123)" stroke-width="7.00"/><path d="M136.4 69V70" stroke="rgb(123,123,123)" stroke-width="7.00"/><path d="M143.8 30V62L149.3 70" stroke="rgb(123,123,123)" stroke-width="7.00"/><path d="M162.2 30V62L162.2 70" stroke="rgb(123,123,123)" stroke-width="7.00"/><path d="M179.0 30V62L175.6 70" stroke="rgb(123,123,123)" stroke-width="7.00"/><path d="M90.5 240V204L96.4 194" stroke="rgb(119,119,119)" stroke-width="6.00"/><path d="M108 240V204L109.9 194" stroke="rgb(119,119,119)" stroke-width="6.00"/><path d="M125.7 240V204L123.4 194" stroke="rgb(119,119,119)" stroke-width="6.00"/><path d="M143.3 240V204L136.3 194" stroke="rgb(119,119,119)" stroke-width="6.00"/><path d="M143.3 240V204L150.3 194" stroke="rgb(119,119,119)" stroke-width="6.00"/><path d="M162 240V204L163.2 194" stroke="rgb(119,119,119)" stroke-width="6.00"/><path d="M177.3 240V204L176.1 194" stroke="rgb(119,119,119)" stroke-width="6.00"/><path d="M21.6 89.0H71.4" stroke="rgb(126,126,126)" stroke-width="5.20"/><path d="M21.6 107.0H71.4" stroke="rgb(126,126,126)" stroke-width="5.20"/><path d="M21.6 125.0H71.4" stroke="rgb(126,126,126)" stroke-width="5.20"/><path d="M21.6 143.1H71.4" stroke="rgb(126,126,126)" stroke-width="5.20"/><path d="M21.6 161.3H71.4" stroke="rgb(126,126,126)" stroke-width="5.20"/><path d="M21.6 179.3H71.4" stroke="rgb(126,126,126)" stroke-width="5.20"/><path d="M199.5 89.0H250.0" stroke="rgb(129,129,129)" stroke-width="5.60"/><path d="M199.5 107.0H250.0" stroke="rgb(129,129,129)" stroke-width="5.60"/><path d="M199.5 125.0H250.0" stroke="rgb(129,129,129)" stroke-width="5.60"/><path d="M199.5 143.1H250.0" stroke="rgb(129,129,129)" stroke-width="5.60"/><path d="M199.5 161.3H250.0" stroke="rgb(129,129,129)" stroke-width="5.60"/><path d="M199.5 179.3H250.0" stroke="rgb(129,129,129)" stroke-width="5.60"/><path d="M91.8 30V62L97.3 70" stroke="rgb(128,128,128)" stroke-width="6.00"/><path d="M110.1 30V62L110.2 70" stroke="rgb(128,128,128)" stroke-width="6.00"/><path d="M126.2 30V62L123 70" stroke="rgb(128,128,128)" stroke-width="6.00"/><path d="M136.4 69V70" stroke="rgb(128,128,128)" stroke-width="6.00"/><path d="M143.8 30V62L149.3 70" stroke="rgb(128,128,128)" stroke-width="6.00"/><path d="M162.2 30V62L162.2 70" stroke="rgb(128,128,128)" stroke-width="6.00"/><path d="M179.0 30V62L175.6 70" stroke="rgb(128,128,128)" stroke-width="6.00"/><path d="M90.5 240V204L96.4 194" stroke="rgb(123,123,123)" stroke-width="5.00"/><path d="M108 240V204L109.9 194" stroke="rgb(123,123,123)" stroke-width="5.00"/><path d="M125.7 240V204L123.4 194" stroke="rgb(123,123,123)" stroke-width="5.00"/><path d="M143.3 240V204L136.3 194" stroke="rgb(123,123,123)" stroke-width="5.00"/><path d="M143.3 240V204L150.3 194" stroke="rgb(123,123,123)" stroke-width="5.00"/><path d="M162 240V204L163.2 194" stroke="rgb(123,123,123)" stroke-width="5.00"/><path d="M177.3 240V204L176.1 194" stroke="rgb(123,123,123)" stroke-width="5.00"/><path d="M21.6 89.0H71.4" stroke="rgb(133,133,133)" stroke-width="4.20"/><path d="M21.6 107.0H71.4" stroke="rgb(133,133,133)" stroke-width="4.20"/><path d="M21.6 125.0H71.4" stroke="rgb(133,133,133)" stroke-width="4.20"/><path d="M21.6 143.1H71.4" stroke="rgb(133,133,133)" stroke-width="4.20"/><path d="M21.6 161.3H71.4" stroke="rgb(133,133,133)" stroke-width="4.20"/><path d="M21.6 179.3H71.4" stroke="rgb(133,133,133)" stroke-width="4.20"/><path d="M199.5 89.0H250.0" stroke="rgb(153,153,153)" stroke-width="4.60"/><path d="M199.5 107.0H250.0" stroke="rgb(153,153,153)" stroke-width="4.60"/><path d="M199.5 125.0H250.0" stroke="rgb(153,153,153)" stroke-width="4.60"/><path d="M199.5 143.1H250.0" stroke="rgb(153,153,153)" stroke-width="4.60"/><path d="M199.5 161.3H250.0" stroke="rgb(153,153,153)" stroke-width="4.60"/><path d="M199.5 179.3H250.0" stroke="rgb(153,153,153)" stroke-width="4.60"/><path d="M91.8 30V62L97.3 70" stroke="rgb(148,148,148)" stroke-width="5.00"/><path d="M110.1 30V62L110.2 70" stroke="rgb(148,148,148)" stroke-width="5.00"/><path d="M126.2 30V62L123 70" stroke="rgb(148,148,148)" stroke-width="5.00"/><path d="M136.4 69V70" stroke="rgb(148,148,148)" stroke-width="5.00"/><path d="M143.8 30V62L149.3 70" stroke="rgb(148,148,148)" stroke-width="5.00"/><path d="M162.2 30V62L162.2 70" stroke="rgb(148,148,148)" stroke-width="5.00"/><path d="M179.0 30V62L175.6 70" stroke="rgb(148,148,148)" stroke-width="5.00"/><path d="M90.5 240V204L96.4 194" stroke="rgb(130,130,130)" stroke-width="4.00"/><path d="M108 240V204L109.9 194" stroke="rgb(130,130,130)" stroke-width="4.00"/><path d="M125.7 240V204L123.4 194" stroke="rgb(130,130,130)" stroke-width="4.00"/><path d="M143.3 240V204L136.3 194" stroke="rgb(130,130,130)" stroke-width="4.00"/><path d="M143.3 240V204L150.3 194" stroke="rgb(130,130,130)" stroke-width="4.00"/><path d="M162 240V204L163.2 194" stroke="rgb(130,130,130)" stroke-width="4.00"/><path d="M177.3 240V204L176.1 194" stroke="rgb(130,130,130)" stroke-width="4.00"/><path d="M21.6 89.0H71.4" stroke="rgb(153,153,153)" stroke-width="2.10"/><path d="M21.6 107.0H71.4" stroke="rgb(153,153,153)" stroke-width="2.10"/><path d="M21.6 125.0H71.4" stroke="rgb(153,153,153)" stroke-width="2.10"/><path d="M21.6 143.1H71.4" stroke="rgb(153,153,153)" stroke-width="2.10"/><path d="M21.6 161.3H71.4" stroke="rgb(153,153,153)" stroke-width="2.10"/><path d="M21.6 179.3H71.4" stroke="rgb(153,153,153)" stroke-width="2.10"/><path d="M199.5 89.0H250.0" stroke="rgb(156,156,156)" stroke-width="2.76"/><path d="M199.5 107.0H250.0" stroke="rgb(156,156,156)" stroke-width="2.76"/><path d="M199.5 125.0H250.0" stroke="rgb(156,156,156)" stroke-width="2.76"/><path d="M199.5 143.1H250.0" stroke="rgb(156,156,156)" stroke-width="2.76"/><path d="M199.5 161.3H250.0" stroke="rgb(156,156,156)" stroke-width="2.76"/><path d="M199.5 179.3H250.0" stroke="rgb(156,156,156)" stroke-width="2.76"/><path d="M91.8 30V62L97.3 70" stroke="rgb(153,153,153)" stroke-width="2.94"/><path d="M110.1 30V62L110.2 70" stroke="rgb(153,153,153)" stroke-width="2.94"/><path d="M126.2 30V62L123 70" stroke="rgb(153,153,153)" stroke-width="2.94"/><path d="M136.4 69V70" stroke="rgb(153,153,153)" stroke-width="2.94"/><path d="M143.8 30V62L149.3 70" stroke="rgb(153,153,153)" stroke-width="2.94"/><path d="M162.2 30V62L162.2 70" stroke="rgb(153,153,153)" stroke-width="2.94"/><path d="M179.0 30V62L175.6 70" stroke="rgb(153,153,153)" stroke-width="2.94"/><path d="M90.5 240V204L96.4 194" stroke="rgb(149,149,149)" stroke-width="1.98"/><path d="M108 240V204L109.9 194" stroke="rgb(149,149,149)" stroke-width="1.98"/><path d="M125.7 240V204L123.4 194" stroke="rgb(149,149,149)" stroke-width="1.98"/><path d="M143.3 240V204L136.3 194" stroke="rgb(149,149,149)" stroke-width="1.98"/><path d="M143.3 240V204L150.3 194" stroke="rgb(149,149,149)" stroke-width="1.98"/><path d="M162 240V204L163.2 194" stroke="rgb(149,149,149)" stroke-width="1.98"/><path d="M177.3 240V204L176.1 194" stroke="rgb(149,149,149)" stroke-width="1.98"/></g><g style="mix-blend-mode:lighten"><path d="M84 178 L186 178 L186 190 L150 192 L126 196 L112 194 L98 200 L86 196Z" fill="rgb(64,64,64)" filter="url(#sb)"/><path d="M86 179 L132 179 L132 190 L126 194 L112 192 L98 197 L88 194Z" fill="rgb(94,94,94)" filter="url(#sb)"/></g><g style="mix-blend-mode:lighten"><rect x="83.4" y="85.1" width="105.4" height="93.6" fill="none" stroke="rgb(64,64,64)" stroke-width="5" filter="url(#sb)"/></g><rect x="83.4" y="85.1" width="105.4" height="93.6" fill="rgb(56,56,56)"/><rect x="84.2" y="85.9" width="103.8" height="92" fill="rgb(42,42,42)"/><path d="M131.1 137.4h0.8v0.8h-0.8zM113.2 177.3h0.6v0.6h-0.6zM114.3 92.9h0.6v0.6h-0.6zM186.5 86.5h1.0v1.0h-1.0zM157.1 109.9h1.0v1.0h-1.0zM147.5 133.7h0.8v0.8h-0.8zM98.5 131.7h0.6v0.6h-0.6zM88.2 107.1h0.8v0.8h-0.8zM187.2 101.0h1.0v1.0h-1.0zM185.2 135.4h0.8v0.8h-0.8zM167.8 92.3h0.6v0.6h-0.6zM102.3 117.0h0.6v0.6h-0.6zM150.3 134.1h1.0v1.0h-1.0zM110.9 147.6h1.0v1.0h-1.0zM179.8 98.3h0.6v0.6h-0.6zM170.2 124.9h1.0v1.0h-1.0zM96.4 132.5h0.8v0.8h-0.8zM134.2 88.7h1.0v1.0h-1.0zM85.9 150.3h0.6v0.6h-0.6zM156.1 156.3h0.6v0.6h-0.6zM150.7 150.3h0.8v0.8h-0.8zM92.3 140.9h0.6v0.6h-0.6zM96.2 167.7h1.0v1.0h-1.0zM130.6 161.3h0.6v0.6h-0.6zM114.5 155.6h0.6v0.6h-0.6zM93.7 127.8h0.8v0.8h-0.8zM98.6 130.9h1.0v1.0h-1.0zM86.3 130.3h0.6v0.6h-0.6zM185.0 158.8h0.8v0.8h-0.8zM84.6 161.2h0.6v0.6h-0.6zM172.8 114.1h0.6v0.6h-0.6zM164.0 164.4h1.0v1.0h-1.0zM126.4 93.1h0.8v0.8h-0.8zM131.3 123.2h1.0v1.0h-1.0zM98.7 155.3h1.0v1.0h-1.0zM180.5 91.4h0.6v0.6h-0.6zM134.5 177.0h1.0v1.0h-1.0zM123.3 115.8h0.8v0.8h-0.8zM171.5 108.6h0.8v0.8h-0.8zM177.6 95.5h0.6v0.6h-0.6zM117.9 99.5h0.8v0.8h-0.8zM175.0 104.9h1.0v1.0h-1.0zM176.9 104.3h0.8v0.8h-0.8zM108.8 147.0h0.8v0.8h-0.8zM113.8 109.3h1.0v1.0h-1.0zM93.5 112.4h0.6v0.6h-0.6zM143.1 135.9h1.0v1.0h-1.0zM160.5 138.1h1.0v1.0h-1.0zM179.7 102.6h0.8v0.8h-0.8zM181.0 119.2h0.6v0.6h-0.6zM170.9 127.4h0.8v0.8h-0.8zM115.2 147.5h0.6v0.6h-0.6zM133.8 109.9h1.0v1.0h-1.0zM143.8 172.3h0.6v0.6h-0.6zM127.3 111.6h0.8v0.8h-0.8zM84.9 136.3h1.0v1.0h-1.0zM163.3 93.7h1.0v1.0h-1.0zM175.6 149.4h0.8v0.8h-0.8zM118.8 149.2h1.0v1.0h-1.0zM175.7 114.7h0.8v0.8h-0.8zM133.1 149.6h0.6v0.6h-0.6zM126.2 168.8h1.0v1.0h-1.0zM187.2 104.9h0.8v0.8h-0.8zM134.4 124.2h1.0v1.0h-1.0zM181.2 165.2h0.8v0.8h-0.8zM91.1 119.7h1.0v1.0h-1.0zM125.6 159.6h1.0v1.0h-1.0zM94.3 173.0h0.6v0.6h-0.6zM129.4 129.0h0.8v0.8h-0.8zM89.9 174.6h0.8v0.8h-0.8zM186.8 92.4h0.6v0.6h-0.6zM157.8 109.3h0.8v0.8h-0.8zM131.3 135.3h0.8v0.8h-0.8zM92.1 137.0h0.8v0.8h-0.8zM144.2 112.4h0.8v0.8h-0.8zM123.1 140.5h0.8v0.8h-0.8zM186.7 122.5h0.6v0.6h-0.6zM187.5 146.2h1.0v1.0h-1.0zM183.2 149.8h1.0v1.0h-1.0zM86.1 164.7h0.6v0.6h-0.6zM172.1 96.0h1.0v1.0h-1.0zM126.4 142.2h1.0v1.0h-1.0zM107.2 94.2h0.8v0.8h-0.8zM93.3 176.1h0.8v0.8h-0.8zM118.3 115.4h0.6v0.6h-0.6zM154.5 176.0h0.6v0.6h-0.6zM145.1 128.6h1.0v1.0h-1.0zM95.0 114.4h0.6v0.6h-0.6zM182.4 156.1h0.8v0.8h-0.8zM155.5 119.6h1.0v1.0h-1.0zM167.6 141.8h1.0v1.0h-1.0zM92.3 89.1h0.8v0.8h-0.8zM111.3 91.4h0.8v0.8h-0.8zM99.2 168.6h1.0v1.0h-1.0zM138.0 139.3h1.0v1.0h-1.0zM159.3 147.8h0.6v0.6h-0.6zM140.1 93.7h1.0v1.0h-1.0zM98.8 98.9h1.0v1.0h-1.0zM156.8 108.1h1.0v1.0h-1.0zM112.7 134.0h1.0v1.0h-1.0zM125.8 131.8h1.0v1.0h-1.0zM166.9 107.8h0.8v0.8h-0.8zM166.6 151.3h0.8v0.8h-0.8zM167.0 102.5h0.8v0.8h-0.8zM115.7 108.7h0.6v0.6h-0.6zM187.0 131.8h1.0v1.0h-1.0zM143.9 153.8h0.6v0.6h-0.6zM126.8 114.1h0.6v0.6h-0.6zM90.7 139.6h0.6v0.6h-0.6zM162.0 139.7h1.0v1.0h-1.0zM136.9 88.5h1.0v1.0h-1.0zM182.7 118.6h0.6v0.6h-0.6zM99.8 114.8h1.0v1.0h-1.0zM168.1 168.8h0.8v0.8h-0.8zM156.7 89.0h1.0v1.0h-1.0zM151.2 170.4h0.8v0.8h-0.8zM154.4 91.4h0.8v0.8h-0.8zM130.2 138.9h0.6v0.6h-0.6zM138.2 119.9h1.0v1.0h-1.0zM186.6 169.9h0.6v0.6h-0.6zM103.5 103.6h1.0v1.0h-1.0zM159.3 151.6h0.6v0.6h-0.6zM104.0 129.1h0.8v0.8h-0.8zM148.3 154.4h0.8v0.8h-0.8zM158.9 91.2h0.6v0.6h-0.6zM91.8 161.7h0.8v0.8h-0.8zM186.2 89.1h0.8v0.8h-0.8zM180.8 125.0h1.0v1.0h-1.0z" fill="rgb(38,38,38)"/><path d="M131.0 164.3h0.6v0.6h-0.6zM91.0 89.7h1.0v1.0h-1.0zM157.4 115.2h1.0v1.0h-1.0zM115.8 167.0h0.6v0.6h-0.6zM94.8 176.5h0.8v0.8h-0.8zM124.3 93.3h1.0v1.0h-1.0zM149.1 114.8h1.0v1.0h-1.0zM88.5 174.1h1.0v1.0h-1.0zM147.8 112.0h1.0v1.0h-1.0zM155.7 139.7h1.0v1.0h-1.0zM176.8 120.0h1.0v1.0h-1.0zM152.5 126.7h0.8v0.8h-0.8zM167.3 155.2h0.6v0.6h-0.6zM96.1 129.4h0.8v0.8h-0.8zM132.3 145.8h0.6v0.6h-0.6zM182.3 94.3h0.8v0.8h-0.8zM113.8 152.3h1.0v1.0h-1.0zM116.9 170.5h0.6v0.6h-0.6zM175.9 98.7h0.6v0.6h-0.6zM136.3 148.9h0.6v0.6h-0.6zM104.0 97.0h0.6v0.6h-0.6zM126.2 104.3h0.6v0.6h-0.6zM182.6 153.3h0.8v0.8h-0.8zM149.7 155.1h0.6v0.6h-0.6zM136.2 145.9h1.0v1.0h-1.0zM100.4 140.3h0.6v0.6h-0.6zM125.6 106.3h0.8v0.8h-0.8zM165.6 91.8h0.6v0.6h-0.6zM158.0 141.7h0.8v0.8h-0.8zM95.0 143.1h1.0v1.0h-1.0zM149.4 102.8h0.8v0.8h-0.8zM180.0 99.2h0.6v0.6h-0.6zM117.2 158.3h1.0v1.0h-1.0zM169.5 142.1h0.8v0.8h-0.8zM120.8 132.0h1.0v1.0h-1.0zM91.0 169.8h1.0v1.0h-1.0zM119.1 98.5h1.0v1.0h-1.0zM175.4 166.3h0.6v0.6h-0.6zM174.1 151.4h0.8v0.8h-0.8zM157.7 104.4h1.0v1.0h-1.0zM137.6 175.4h1.0v1.0h-1.0zM180.2 132.0h0.6v0.6h-0.6zM108.8 131.0h1.0v1.0h-1.0zM146.6 110.3h1.0v1.0h-1.0zM93.6 161.2h0.8v0.8h-0.8zM126.8 119.7h1.0v1.0h-1.0zM161.2 90.1h0.8v0.8h-0.8zM127.6 94.3h0.8v0.8h-0.8zM106.7 118.1h1.0v1.0h-1.0zM135.0 143.5h0.8v0.8h-0.8zM112.2 119.4h1.0v1.0h-1.0zM90.2 122.4h0.8v0.8h-0.8zM107.3 170.7h0.8v0.8h-0.8zM115.1 160.7h1.0v1.0h-1.0zM100.6 104.0h0.6v0.6h-0.6zM153.4 107.5h0.6v0.6h-0.6zM140.7 159.3h0.8v0.8h-0.8zM86.9 139.0h0.8v0.8h-0.8zM145.7 110.6h1.0v1.0h-1.0zM103.0 90.8h1.0v1.0h-1.0zM100.5 120.4h0.8v0.8h-0.8zM124.7 170.3h0.8v0.8h-0.8zM180.2 173.4h0.8v0.8h-0.8zM117.1 173.6h1.0v1.0h-1.0zM146.6 149.7h0.6v0.6h-0.6zM120.2 150.5h0.8v0.8h-0.8zM107.7 130.0h1.0v1.0h-1.0zM151.6 92.0h0.6v0.6h-0.6zM116.3 118.6h0.6v0.6h-0.6zM145.4 128.9h1.0v1.0h-1.0zM87.8 119.2h1.0v1.0h-1.0zM156.0 162.9h1.0v1.0h-1.0zM163.1 91.6h0.8v0.8h-0.8zM124.3 97.2h1.0v1.0h-1.0zM141.3 116.8h0.8v0.8h-0.8zM94.6 157.9h0.6v0.6h-0.6zM101.3 103.8h0.8v0.8h-0.8zM169.2 136.0h1.0v1.0h-1.0zM93.7 159.3h1.0v1.0h-1.0zM155.2 118.0h1.0v1.0h-1.0zM180.6 174.0h0.8v0.8h-0.8zM147.6 142.3h0.6v0.6h-0.6zM108.6 166.7h0.6v0.6h-0.6zM165.2 116.8h1.0v1.0h-1.0zM110.8 166.3h0.8v0.8h-0.8zM127.7 147.5h0.8v0.8h-0.8zM178.7 99.6h0.6v0.6h-0.6zM117.4 90.4h0.6v0.6h-0.6zM159.4 170.6h0.6v0.6h-0.6zM89.8 101.3h0.8v0.8h-0.8zM151.7 128.8h0.8v0.8h-0.8zM118.7 169.6h1.0v1.0h-1.0zM150.3 92.1h0.6v0.6h-0.6zM174.2 114.8h1.0v1.0h-1.0zM175.5 132.0h0.6v0.6h-0.6zM139.2 106.1h0.8v0.8h-0.8zM185.0 173.1h0.8v0.8h-0.8zM109.7 160.7h1.0v1.0h-1.0zM159.7 142.8h0.6v0.6h-0.6zM175.8 93.3h0.8v0.8h-0.8zM187.1 127.9h1.0v1.0h-1.0zM111.2 142.3h0.8v0.8h-0.8zM150.1 88.9h0.8v0.8h-0.8zM175.8 102.5h1.0v1.0h-1.0zM141.5 90.5h1.0v1.0h-1.0zM107.3 88.4h0.8v0.8h-0.8zM102.3 102.2h0.6v0.6h-0.6zM130.3 151.8h0.8v0.8h-0.8zM93.8 132.1h1.0v1.0h-1.0zM186.8 87.7h0.8v0.8h-0.8zM145.5 139.5h0.6v0.6h-0.6zM85.8 152.2h1.0v1.0h-1.0zM109.4 145.4h0.6v0.6h-0.6z" fill="rgb(46,46,46)"/><path d="M167.3 129.8h0.6v0.6h-0.6zM148.6 98.1h0.8v0.8h-0.8zM116.6 89.6h1.0v1.0h-1.0zM131.6 128.6h0.6v0.6h-0.6zM158.3 163.1h0.8v0.8h-0.8zM88.8 151.0h0.8v0.8h-0.8zM96.4 96.4h1.0v1.0h-1.0zM158.1 155.2h1.0v1.0h-1.0zM140.1 172.7h1.0v1.0h-1.0zM123.3 138.3h0.8v0.8h-0.8zM105.9 163.9h1.0v1.0h-1.0zM155.7 92.5h0.8v0.8h-0.8zM117.2 103.9h0.6v0.6h-0.6zM135.9 132.0h0.6v0.6h-0.6zM149.7 161.6h0.6v0.6h-0.6zM139.9 165.1h1.0v1.0h-1.0zM107.0 106.2h1.0v1.0h-1.0zM137.6 125.6h0.8v0.8h-0.8zM103.2 93.5h0.8v0.8h-0.8zM185.4 88.6h0.6v0.6h-0.6zM140.2 124.3h1.0v1.0h-1.0zM184.4 164.4h1.0v1.0h-1.0zM87.3 156.8h0.6v0.6h-0.6zM185.3 160.8h1.0v1.0h-1.0zM105.5 91.2h0.6v0.6h-0.6zM131.4 110.4h1.0v1.0h-1.0zM127.7 157.3h0.6v0.6h-0.6zM155.1 137.9h0.6v0.6h-0.6zM122.5 146.0h0.8v0.8h-0.8zM171.2 125.0h1.0v1.0h-1.0zM98.0 154.0h0.8v0.8h-0.8zM137.6 91.3h0.6v0.6h-0.6zM132.8 173.4h1.0v1.0h-1.0zM106.0 135.9h0.8v0.8h-0.8zM148.7 152.7h1.0v1.0h-1.0zM163.5 168.7h0.6v0.6h-0.6zM158.0 176.3h1.0v1.0h-1.0zM157.3 171.7h0.6v0.6h-0.6zM109.1 138.3h1.0v1.0h-1.0zM186.7 160.9h0.6v0.6h-0.6zM176.9 108.4h0.8v0.8h-0.8zM170.1 103.4h0.6v0.6h-0.6zM126.6 126.0h0.6v0.6h-0.6zM177.7 134.4h1.0v1.0h-1.0zM122.5 136.2h0.6v0.6h-0.6zM107.3 154.4h0.6v0.6h-0.6zM125.4 118.9h0.6v0.6h-0.6zM132.2 93.4h0.6v0.6h-0.6zM139.2 90.6h1.0v1.0h-1.0zM109.8 111.9h0.6v0.6h-0.6zM152.3 157.8h0.8v0.8h-0.8zM161.2 134.9h0.6v0.6h-0.6zM118.0 141.9h0.8v0.8h-0.8zM88.9 115.1h1.0v1.0h-1.0zM138.6 110.6h0.8v0.8h-0.8zM108.2 109.5h0.6v0.6h-0.6zM116.3 172.6h0.6v0.6h-0.6zM118.0 156.6h1.0v1.0h-1.0zM88.7 100.2h0.6v0.6h-0.6zM90.1 131.6h0.8v0.8h-0.8zM107.2 133.9h0.8v0.8h-0.8zM121.8 150.8h1.0v1.0h-1.0zM171.3 161.9h0.8v0.8h-0.8zM104.5 118.9h0.6v0.6h-0.6zM125.3 91.7h1.0v1.0h-1.0zM172.8 172.5h0.6v0.6h-0.6zM149.2 132.4h0.6v0.6h-0.6zM136.2 120.7h1.0v1.0h-1.0zM88.9 170.2h1.0v1.0h-1.0zM90.1 116.1h0.8v0.8h-0.8zM118.3 109.8h0.8v0.8h-0.8zM103.9 129.2h0.8v0.8h-0.8zM169.9 159.1h0.8v0.8h-0.8zM93.6 145.6h1.0v1.0h-1.0zM111.9 120.6h0.8v0.8h-0.8zM122.3 116.8h0.8v0.8h-0.8zM180.5 133.6h0.6v0.6h-0.6zM135.7 162.1h0.8v0.8h-0.8zM95.7 124.1h1.0v1.0h-1.0zM109.0 146.8h1.0v1.0h-1.0zM100.4 174.8h0.6v0.6h-0.6zM157.9 100.7h1.0v1.0h-1.0zM105.5 176.9h0.6v0.6h-0.6zM148.9 110.8h0.8v0.8h-0.8zM96.5 114.8h0.6v0.6h-0.6zM172.6 105.9h0.8v0.8h-0.8zM89.4 143.3h0.6v0.6h-0.6zM180.7 155.0h1.0v1.0h-1.0zM109.6 105.9h0.6v0.6h-0.6zM142.1 175.3h0.8v0.8h-0.8zM88.1 150.1h0.6v0.6h-0.6zM161.8 150.4h1.0v1.0h-1.0zM92.3 136.5h1.0v1.0h-1.0zM93.4 149.7h0.8v0.8h-0.8zM87.5 172.0h0.6v0.6h-0.6zM156.8 171.9h0.6v0.6h-0.6zM111.5 139.8h1.0v1.0h-1.0zM151.9 110.2h1.0v1.0h-1.0zM97.2 115.7h0.6v0.6h-0.6zM95.3 130.5h0.8v0.8h-0.8zM121.2 166.9h1.0v1.0h-1.0zM180.7 115.0h1.0v1.0h-1.0zM138.7 112.7h0.8v0.8h-0.8zM89.9 118.8h1.0v1.0h-1.0zM167.8 170.6h0.8v0.8h-0.8zM142.6 108.8h0.8v0.8h-0.8zM172.3 130.8h0.8v0.8h-0.8zM131.2 115.2h0.6v0.6h-0.6zM131.4 129.6h0.8v0.8h-0.8zM152.4 148.2h0.8v0.8h-0.8zM108.1 141.5h1.0v1.0h-1.0zM144.9 152.7h1.0v1.0h-1.0zM170.7 122.1h1.0v1.0h-1.0zM139.1 176.7h0.6v0.6h-0.6zM112.7 119.1h1.0v1.0h-1.0zM86.7 91.7h0.6v0.6h-0.6zM163.5 148.4h0.6v0.6h-0.6zM127.5 169.2h0.6v0.6h-0.6zM175.9 155.1h1.0v1.0h-1.0zM186.4 168.0h1.0v1.0h-1.0zM106.8 127.2h0.8v0.8h-0.8zM186.4 170.4h0.6v0.6h-0.6zM103.5 144.3h0.6v0.6h-0.6zM180.8 90.5h0.8v0.8h-0.8zM118.5 100.0h1.0v1.0h-1.0zM178.7 102.9h0.6v0.6h-0.6zM136.0 156.2h1.0v1.0h-1.0zM186.3 159.6h0.6v0.6h-0.6zM129.5 93.2h0.6v0.6h-0.6z" fill="rgb(54,54,54)"/><path d="M94.2 114.1h1.0v1.0h-1.0zM167.9 149.6h1.0v1.0h-1.0zM147.9 100.8h1.0v1.0h-1.0zM183.2 163.6h0.6v0.6h-0.6zM185.5 122.7h1.0v1.0h-1.0zM98.4 150.8h0.6v0.6h-0.6zM146.7 124.9h0.6v0.6h-0.6zM93.2 129.6h0.8v0.8h-0.8zM85.8 93.1h1.0v1.0h-1.0zM116.3 158.5h1.0v1.0h-1.0zM98.5 127.9h0.8v0.8h-0.8zM109.0 99.3h1.0v1.0h-1.0zM150.4 120.1h1.0v1.0h-1.0zM111.5 151.9h0.8v0.8h-0.8zM127.9 111.5h0.6v0.6h-0.6zM88.2 100.7h1.0v1.0h-1.0zM156.7 166.5h0.8v0.8h-0.8zM159.3 110.1h0.8v0.8h-0.8zM186.5 170.8h1.0v1.0h-1.0zM137.3 87.9h1.0v1.0h-1.0zM126.3 152.3h0.8v0.8h-0.8zM110.3 155.3h1.0v1.0h-1.0zM128.3 143.2h0.6v0.6h-0.6zM140.3 93.1h1.0v1.0h-1.0zM161.2 162.8h0.6v0.6h-0.6zM128.5 120.1h0.8v0.8h-0.8zM174.6 93.6h0.8v0.8h-0.8zM115.3 157.1h0.8v0.8h-0.8zM106.5 146.8h1.0v1.0h-1.0zM159.3 119.8h0.8v0.8h-0.8zM168.1 106.6h1.0v1.0h-1.0zM100.8 113.4h1.0v1.0h-1.0zM87.2 146.0h1.0v1.0h-1.0zM92.0 142.8h0.8v0.8h-0.8zM139.0 111.4h0.8v0.8h-0.8zM164.4 102.8h0.8v0.8h-0.8zM127.4 169.9h0.8v0.8h-0.8zM153.2 92.6h1.0v1.0h-1.0zM161.4 157.9h1.0v1.0h-1.0zM133.5 113.2h0.8v0.8h-0.8zM162.3 137.1h0.8v0.8h-0.8zM103.9 120.8h0.8v0.8h-0.8zM94.8 89.4h0.8v0.8h-0.8zM149.1 104.5h0.6v0.6h-0.6zM100.8 124.0h0.6v0.6h-0.6zM184.7 129.8h1.0v1.0h-1.0zM115.0 152.8h0.8v0.8h-0.8zM104.2 166.6h1.0v1.0h-1.0zM122.9 146.7h1.0v1.0h-1.0zM103.7 168.1h1.0v1.0h-1.0zM172.7 89.3h0.6v0.6h-0.6zM170.1 158.1h0.8v0.8h-0.8zM115.2 125.1h0.6v0.6h-0.6zM105.6 121.3h0.6v0.6h-0.6zM159.0 169.0h0.8v0.8h-0.8zM120.0 106.1h0.6v0.6h-0.6zM161.5 130.4h1.0v1.0h-1.0zM142.0 118.7h0.8v0.8h-0.8zM108.7 144.1h0.8v0.8h-0.8zM135.5 129.5h0.6v0.6h-0.6zM111.7 96.0h0.8v0.8h-0.8zM97.5 92.3h0.6v0.6h-0.6zM137.3 148.3h0.6v0.6h-0.6zM89.5 151.4h0.6v0.6h-0.6zM172.6 102.1h0.8v0.8h-0.8zM129.1 100.3h0.8v0.8h-0.8zM122.2 110.1h0.6v0.6h-0.6zM143.3 172.1h0.6v0.6h-0.6zM154.0 111.2h1.0v1.0h-1.0zM116.4 133.3h0.6v0.6h-0.6zM163.6 176.2h0.8v0.8h-0.8zM86.8 122.9h0.8v0.8h-0.8zM86.6 102.4h1.0v1.0h-1.0zM175.9 160.4h1.0v1.0h-1.0zM152.7 169.4h0.6v0.6h-0.6zM131.0 112.4h1.0v1.0h-1.0zM163.9 136.5h0.6v0.6h-0.6zM153.3 125.7h0.8v0.8h-0.8zM102.2 139.3h0.6v0.6h-0.6zM148.7 114.5h0.6v0.6h-0.6zM163.8 104.7h1.0v1.0h-1.0zM113.3 98.7h0.6v0.6h-0.6zM85.8 142.1h0.8v0.8h-0.8zM124.5 111.8h1.0v1.0h-1.0zM153.3 100.7h0.8v0.8h-0.8zM151.4 150.3h0.6v0.6h-0.6zM94.4 158.8h0.6v0.6h-0.6zM184.9 157.1h0.8v0.8h-0.8zM187.4 137.8h1.0v1.0h-1.0zM183.8 124.1h0.6v0.6h-0.6zM150.7 163.6h0.8v0.8h-0.8zM143.0 132.1h0.8v0.8h-0.8zM161.7 130.9h0.8v0.8h-0.8zM126.4 174.4h1.0v1.0h-1.0zM165.7 144.9h0.8v0.8h-0.8zM180.0 144.6h1.0v1.0h-1.0zM96.2 165.5h0.8v0.8h-0.8zM117.9 99.2h0.6v0.6h-0.6zM174.5 129.5h0.8v0.8h-0.8zM164.1 116.0h0.8v0.8h-0.8zM120.6 123.9h0.8v0.8h-0.8zM161.0 114.0h0.6v0.6h-0.6zM116.4 165.9h1.0v1.0h-1.0zM179.8 166.5h0.8v0.8h-0.8zM172.9 171.6h1.0v1.0h-1.0zM163.7 100.8h0.6v0.6h-0.6zM96.0 165.6h0.8v0.8h-0.8zM167.7 86.6h0.6v0.6h-0.6zM119.1 118.1h0.6v0.6h-0.6zM89.9 89.5h0.8v0.8h-0.8zM92.9 106.8h0.8v0.8h-0.8zM160.3 105.8h0.6v0.6h-0.6zM86.1 114.2h0.8v0.8h-0.8zM150.3 144.2h0.8v0.8h-0.8zM113.4 126.8h0.8v0.8h-0.8zM95.0 118.6h0.6v0.6h-0.6zM107.7 151.2h0.6v0.6h-0.6zM118.6 170.9h0.8v0.8h-0.8zM138.3 130.9h0.6v0.6h-0.6zM109.4 116.3h0.8v0.8h-0.8zM144.9 124.7h1.0v1.0h-1.0zM93.5 103.1h1.0v1.0h-1.0zM88.8 91.8h0.8v0.8h-0.8zM176.0 91.6h0.6v0.6h-0.6zM173.4 123.7h1.0v1.0h-1.0zM115.2 141.2h1.0v1.0h-1.0zM126.5 100.8h0.6v0.6h-0.6zM110.2 102.7h0.6v0.6h-0.6zM146.3 165.0h0.6v0.6h-0.6zM128.4 137.1h0.8v0.8h-0.8zM137.7 176.6h1.0v1.0h-1.0zM183.2 137.3h1.0v1.0h-1.0zM179.0 147.9h0.8v0.8h-0.8zM124.1 134.8h0.6v0.6h-0.6zM92.5 165.2h0.6v0.6h-0.6zM99.7 101.3h0.6v0.6h-0.6z" fill="rgb(43,43,43)"/><path d="M185.7 174.3h1.0v1.0h-1.0zM171.3 133.7h0.8v0.8h-0.8zM132.4 130.8h1.0v1.0h-1.0zM103.9 132.8h0.6v0.6h-0.6zM125.1 164.2h1.0v1.0h-1.0zM110.2 103.8h1.0v1.0h-1.0zM135.1 133.8h0.6v0.6h-0.6zM97.5 130.1h1.0v1.0h-1.0zM176.3 175.7h1.0v1.0h-1.0zM122.4 90.5h1.0v1.0h-1.0zM118.5 171.5h1.0v1.0h-1.0zM93.5 88.5h0.6v0.6h-0.6zM126.2 109.3h0.8v0.8h-0.8zM123.9 133.8h0.8v0.8h-0.8zM177.8 94.4h0.8v0.8h-0.8zM97.9 127.8h0.6v0.6h-0.6zM158.9 161.0h1.0v1.0h-1.0zM133.0 177.5h1.0v1.0h-1.0zM138.7 112.9h1.0v1.0h-1.0zM172.2 143.2h0.6v0.6h-0.6zM144.9 98.9h1.0v1.0h-1.0zM97.5 123.2h0.6v0.6h-0.6zM103.2 127.8h0.8v0.8h-0.8zM113.3 97.1h0.6v0.6h-0.6zM180.2 146.9h0.8v0.8h-0.8zM149.7 123.7h0.8v0.8h-0.8zM166.7 106.9h0.8v0.8h-0.8zM97.3 126.8h0.8v0.8h-0.8zM142.6 130.6h0.8v0.8h-0.8zM115.8 152.5h0.8v0.8h-0.8zM157.6 138.3h0.8v0.8h-0.8zM117.2 122.9h1.0v1.0h-1.0zM168.6 124.9h0.6v0.6h-0.6zM150.4 134.2h0.6v0.6h-0.6zM109.8 101.3h0.8v0.8h-0.8zM116.3 96.9h0.6v0.6h-0.6zM99.0 147.3h0.8v0.8h-0.8zM130.4 165.1h1.0v1.0h-1.0zM88.3 128.6h0.6v0.6h-0.6zM109.7 139.0h0.8v0.8h-0.8zM132.2 97.8h0.6v0.6h-0.6zM177.9 142.5h0.6v0.6h-0.6zM178.2 136.1h0.8v0.8h-0.8zM181.3 166.6h1.0v1.0h-1.0zM177.1 88.0h1.0v1.0h-1.0zM187.0 104.9h0.6v0.6h-0.6zM107.8 98.6h0.6v0.6h-0.6zM136.6 163.4h1.0v1.0h-1.0zM96.0 126.1h0.8v0.8h-0.8zM140.9 109.8h1.0v1.0h-1.0zM167.5 132.3h0.8v0.8h-0.8zM110.7 101.0h1.0v1.0h-1.0zM154.5 151.7h1.0v1.0h-1.0zM88.6 123.2h0.6v0.6h-0.6zM125.0 170.5h0.6v0.6h-0.6zM140.5 98.9h1.0v1.0h-1.0zM111.3 152.5h0.8v0.8h-0.8zM180.4 112.4h0.8v0.8h-0.8zM163.6 118.4h0.6v0.6h-0.6zM153.3 131.9h0.6v0.6h-0.6zM120.0 122.7h1.0v1.0h-1.0zM150.5 97.9h0.8v0.8h-0.8zM153.1 121.7h0.6v0.6h-0.6zM129.7 165.7h0.8v0.8h-0.8zM185.5 121.9h0.6v0.6h-0.6zM142.8 99.6h0.8v0.8h-0.8zM111.8 108.8h0.8v0.8h-0.8zM124.5 120.1h0.8v0.8h-0.8zM168.0 119.7h0.8v0.8h-0.8zM121.0 111.9h0.8v0.8h-0.8zM138.6 87.4h1.0v1.0h-1.0zM97.0 153.7h0.8v0.8h-0.8zM95.9 103.5h0.6v0.6h-0.6zM104.7 111.9h0.6v0.6h-0.6zM182.6 93.6h0.8v0.8h-0.8zM127.1 106.6h0.6v0.6h-0.6zM152.3 110.9h1.0v1.0h-1.0zM177.8 146.9h0.8v0.8h-0.8zM100.3 161.0h1.0v1.0h-1.0zM168.8 147.9h0.8v0.8h-0.8zM167.7 172.4h0.8v0.8h-0.8zM125.9 112.5h0.6v0.6h-0.6zM102.3 94.1h0.6v0.6h-0.6zM130.3 168.2h0.6v0.6h-0.6zM170.2 151.3h0.6v0.6h-0.6zM125.4 149.4h1.0v1.0h-1.0zM180.3 104.7h0.8v0.8h-0.8zM164.7 96.1h0.6v0.6h-0.6zM93.8 131.0h0.8v0.8h-0.8zM102.3 167.4h0.8v0.8h-0.8zM140.4 126.2h0.6v0.6h-0.6zM98.9 104.1h0.8v0.8h-0.8zM134.9 140.2h1.0v1.0h-1.0zM87.8 162.0h1.0v1.0h-1.0zM185.8 152.5h0.6v0.6h-0.6zM185.0 171.5h1.0v1.0h-1.0zM103.7 174.3h1.0v1.0h-1.0zM180.9 164.1h0.6v0.6h-0.6zM133.9 96.7h1.0v1.0h-1.0zM151.5 148.9h0.8v0.8h-0.8zM166.7 109.7h1.0v1.0h-1.0zM185.3 170.0h0.6v0.6h-0.6zM147.4 169.4h0.6v0.6h-0.6zM156.0 155.5h1.0v1.0h-1.0zM151.3 154.7h0.6v0.6h-0.6zM143.1 172.4h0.8v0.8h-0.8zM151.8 157.1h0.6v0.6h-0.6zM103.8 145.5h0.6v0.6h-0.6zM133.5 124.4h1.0v1.0h-1.0zM126.0 121.4h0.8v0.8h-0.8zM86.8 162.5h1.0v1.0h-1.0zM111.0 158.5h0.8v0.8h-0.8zM115.4 173.5h0.8v0.8h-0.8zM133.8 109.8h1.0v1.0h-1.0zM92.3 113.8h0.6v0.6h-0.6zM87.0 120.6h0.8v0.8h-0.8zM153.4 163.9h0.6v0.6h-0.6zM154.9 149.4h0.8v0.8h-0.8zM132.3 168.4h0.8v0.8h-0.8zM156.7 175.7h1.0v1.0h-1.0zM149.2 121.4h0.8v0.8h-0.8zM109.1 103.8h0.6v0.6h-0.6zM126.7 120.9h1.0v1.0h-1.0zM98.1 121.4h0.8v0.8h-0.8zM179.7 96.3h0.6v0.6h-0.6z" fill="rgb(59,59,59)"/><path d="M87.6 128.7h1.0v1.0h-1.0zM136.0 146.8h1.0v1.0h-1.0zM125.7 163.5h0.6v0.6h-0.6zM106.1 169.3h0.8v0.8h-0.8zM93.5 116.8h0.6v0.6h-0.6zM127.7 121.4h0.8v0.8h-0.8zM170.2 98.9h0.6v0.6h-0.6zM181.4 104.4h0.8v0.8h-0.8zM86.2 111.0h0.6v0.6h-0.6zM98.6 93.1h1.0v1.0h-1.0zM181.8 89.3h1.0v1.0h-1.0zM86.0 146.8h1.0v1.0h-1.0zM96.4 109.9h1.0v1.0h-1.0zM135.7 142.4h0.8v0.8h-0.8zM97.2 108.5h0.6v0.6h-0.6zM171.0 149.2h1.0v1.0h-1.0zM112.6 131.8h1.0v1.0h-1.0zM96.3 86.9h0.6v0.6h-0.6zM139.9 90.5h1.0v1.0h-1.0zM167.0 137.7h0.6v0.6h-0.6zM127.1 173.6h0.8v0.8h-0.8zM177.3 171.6h1.0v1.0h-1.0zM147.7 168.9h0.6v0.6h-0.6zM90.9 173.1h0.6v0.6h-0.6zM163.3 116.2h0.8v0.8h-0.8zM174.7 169.2h1.0v1.0h-1.0zM115.3 106.2h1.0v1.0h-1.0zM160.6 109.9h1.0v1.0h-1.0zM89.7 104.3h0.6v0.6h-0.6zM171.7 95.6h1.0v1.0h-1.0zM124.3 171.9h0.8v0.8h-0.8zM145.9 125.6h0.8v0.8h-0.8zM89.9 115.2h0.6v0.6h-0.6zM94.6 160.2h0.6v0.6h-0.6zM96.4 143.3h0.6v0.6h-0.6zM130.3 154.5h0.6v0.6h-0.6zM121.9 122.5h0.6v0.6h-0.6zM160.6 120.0h1.0v1.0h-1.0zM167.5 162.4h1.0v1.0h-1.0zM167.1 124.9h0.6v0.6h-0.6zM155.0 115.7h0.8v0.8h-0.8zM145.1 141.1h1.0v1.0h-1.0zM141.0 160.9h0.8v0.8h-0.8zM140.9 173.6h0.6v0.6h-0.6zM174.5 168.9h0.6v0.6h-0.6zM158.3 95.3h1.0v1.0h-1.0zM116.4 111.4h1.0v1.0h-1.0zM150.5 127.2h0.6v0.6h-0.6zM103.9 114.4h0.6v0.6h-0.6zM138.9 97.3h0.6v0.6h-0.6zM158.8 158.2h0.8v0.8h-0.8zM146.3 129.3h1.0v1.0h-1.0zM178.5 137.9h0.8v0.8h-0.8zM115.0 142.6h1.0v1.0h-1.0zM97.3 135.4h0.6v0.6h-0.6zM102.2 126.6h1.0v1.0h-1.0zM156.2 171.8h0.8v0.8h-0.8zM132.0 154.8h0.6v0.6h-0.6zM184.5 91.3h0.6v0.6h-0.6zM184.5 90.3h1.0v1.0h-1.0zM186.1 99.7h1.0v1.0h-1.0zM176.2 99.4h1.0v1.0h-1.0zM180.9 105.9h0.6v0.6h-0.6zM167.3 130.2h0.6v0.6h-0.6zM145.7 155.6h0.8v0.8h-0.8zM87.8 114.9h0.8v0.8h-0.8zM157.9 123.4h1.0v1.0h-1.0zM96.8 131.4h0.8v0.8h-0.8zM138.1 154.1h0.6v0.6h-0.6zM116.3 169.7h0.6v0.6h-0.6zM122.0 92.2h0.8v0.8h-0.8zM149.1 143.0h1.0v1.0h-1.0zM175.1 121.3h0.6v0.6h-0.6zM167.5 105.4h1.0v1.0h-1.0zM148.5 124.1h0.6v0.6h-0.6zM167.0 97.9h1.0v1.0h-1.0zM107.5 152.2h0.6v0.6h-0.6zM112.7 107.2h0.6v0.6h-0.6zM92.6 103.1h0.6v0.6h-0.6zM95.7 176.4h0.8v0.8h-0.8zM183.7 106.5h1.0v1.0h-1.0zM148.0 117.9h1.0v1.0h-1.0zM174.8 93.1h0.6v0.6h-0.6zM96.6 103.0h0.6v0.6h-0.6zM172.0 142.7h0.6v0.6h-0.6zM95.2 146.3h0.6v0.6h-0.6zM102.1 132.5h1.0v1.0h-1.0zM164.4 97.4h0.6v0.6h-0.6zM131.0 137.3h0.6v0.6h-0.6zM85.1 153.6h0.8v0.8h-0.8zM123.4 127.2h0.6v0.6h-0.6zM135.3 149.3h1.0v1.0h-1.0zM169.3 145.8h1.0v1.0h-1.0zM167.2 148.7h1.0v1.0h-1.0zM99.7 150.5h0.8v0.8h-0.8zM181.7 100.3h0.6v0.6h-0.6zM151.6 135.9h0.8v0.8h-0.8zM153.0 99.3h1.0v1.0h-1.0zM185.0 162.3h0.8v0.8h-0.8zM119.0 147.9h1.0v1.0h-1.0zM99.9 109.6h0.6v0.6h-0.6zM109.7 106.3h1.0v1.0h-1.0zM178.3 176.6h0.6v0.6h-0.6zM145.6 154.0h0.6v0.6h-0.6zM120.6 177.3h0.8v0.8h-0.8zM88.5 99.9h1.0v1.0h-1.0zM87.0 155.9h1.0v1.0h-1.0zM107.1 159.2h1.0v1.0h-1.0zM127.4 135.7h0.8v0.8h-0.8zM151.1 149.3h0.8v0.8h-0.8zM183.0 146.4h1.0v1.0h-1.0zM129.4 123.6h0.6v0.6h-0.6zM173.3 135.2h1.0v1.0h-1.0zM178.9 93.7h0.8v0.8h-0.8zM112.3 149.7h0.6v0.6h-0.6zM130.7 119.8h0.6v0.6h-0.6zM179.5 158.7h1.0v1.0h-1.0zM134.7 169.0h1.0v1.0h-1.0zM99.5 141.6h0.8v0.8h-0.8zM155.6 161.9h1.0v1.0h-1.0zM133.8 91.9h1.0v1.0h-1.0zM86.0 119.6h1.0v1.0h-1.0zM113.9 113.5h0.6v0.6h-0.6zM151.2 90.1h0.8v0.8h-0.8zM158.1 154.8h1.0v1.0h-1.0zM149.8 153.9h1.0v1.0h-1.0zM158.1 103.4h1.0v1.0h-1.0zM135.3 91.9h1.0v1.0h-1.0zM108.2 102.9h0.6v0.6h-0.6z" fill="rgb(51,51,51)"/><path d="M149.3 157.3h0.8v0.8h-0.8zM111.1 156.8h0.8v0.8h-0.8zM150.1 87.9h0.8v0.8h-0.8zM90.7 102.5h1.0v1.0h-1.0zM143.4 98.5h0.6v0.6h-0.6zM88.1 88.1h1.0v1.0h-1.0zM92.2 92.6h0.8v0.8h-0.8zM157.0 158.7h0.8v0.8h-0.8zM137.9 133.3h1.0v1.0h-1.0zM124.1 139.6h0.6v0.6h-0.6zM157.8 173.0h0.6v0.6h-0.6zM117.5 161.9h1.0v1.0h-1.0zM104.9 161.5h0.6v0.6h-0.6zM136.5 89.9h1.0v1.0h-1.0zM109.9 131.4h0.8v0.8h-0.8zM168.0 168.6h1.0v1.0h-1.0zM94.4 138.4h0.8v0.8h-0.8zM146.3 132.4h0.8v0.8h-0.8zM168.4 123.4h1.0v1.0h-1.0zM115.6 95.7h1.0v1.0h-1.0zM177.5 91.0h1.0v1.0h-1.0zM94.6 109.3h1.0v1.0h-1.0zM113.8 122.8h0.8v0.8h-0.8zM139.1 130.5h1.0v1.0h-1.0zM144.4 152.3h0.6v0.6h-0.6zM148.9 119.2h1.0v1.0h-1.0zM88.6 92.0h0.8v0.8h-0.8zM101.1 107.9h0.8v0.8h-0.8zM133.8 105.7h0.8v0.8h-0.8zM113.6 99.5h1.0v1.0h-1.0zM129.6 159.6h0.8v0.8h-0.8zM110.1 119.4h0.6v0.6h-0.6zM116.0 136.1h0.6v0.6h-0.6zM112.7 96.1h0.6v0.6h-0.6zM134.9 169.1h0.8v0.8h-0.8zM125.1 117.2h1.0v1.0h-1.0zM162.5 176.2h0.6v0.6h-0.6zM116.7 104.5h0.6v0.6h-0.6zM136.9 126.7h0.8v0.8h-0.8zM102.3 155.4h1.0v1.0h-1.0zM134.4 123.1h1.0v1.0h-1.0zM100.7 115.8h1.0v1.0h-1.0zM169.2 94.0h1.0v1.0h-1.0zM100.7 162.2h0.8v0.8h-0.8zM116.5 93.4h0.8v0.8h-0.8zM105.8 142.6h1.0v1.0h-1.0zM123.2 135.6h0.8v0.8h-0.8zM169.1 121.6h0.8v0.8h-0.8zM186.0 134.7h0.8v0.8h-0.8zM141.9 105.1h0.8v0.8h-0.8zM118.4 171.0h0.8v0.8h-0.8zM97.1 161.5h1.0v1.0h-1.0zM129.0 168.8h0.6v0.6h-0.6zM89.2 89.3h0.8v0.8h-0.8zM95.4 152.5h0.8v0.8h-0.8zM92.6 106.8h0.6v0.6h-0.6zM141.8 145.2h0.8v0.8h-0.8zM109.0 99.8h0.8v0.8h-0.8zM155.7 119.5h1.0v1.0h-1.0zM86.4 103.1h1.0v1.0h-1.0zM99.7 105.1h1.0v1.0h-1.0zM173.7 107.1h0.8v0.8h-0.8zM132.8 116.1h0.6v0.6h-0.6zM86.9 118.1h1.0v1.0h-1.0zM132.8 142.5h0.6v0.6h-0.6zM167.3 148.7h0.8v0.8h-0.8zM146.9 111.1h1.0v1.0h-1.0zM114.7 124.2h1.0v1.0h-1.0zM124.9 151.7h0.8v0.8h-0.8zM158.2 116.2h0.6v0.6h-0.6zM112.1 111.2h1.0v1.0h-1.0zM102.5 96.2h0.8v0.8h-0.8zM91.1 167.7h1.0v1.0h-1.0zM152.2 143.2h0.6v0.6h-0.6zM125.9 150.7h1.0v1.0h-1.0zM115.9 105.2h0.6v0.6h-0.6zM168.1 102.7h0.6v0.6h-0.6zM156.6 163.4h1.0v1.0h-1.0zM113.2 110.0h1.0v1.0h-1.0zM155.7 153.5h0.8v0.8h-0.8zM93.6 119.6h0.6v0.6h-0.6zM159.0 147.4h0.6v0.6h-0.6zM87.4 96.5h1.0v1.0h-1.0zM127.4 93.6h1.0v1.0h-1.0zM96.0 170.1h0.8v0.8h-0.8zM124.1 145.5h0.8v0.8h-0.8zM101.3 121.3h0.8v0.8h-0.8zM145.6 173.9h1.0v1.0h-1.0zM96.6 155.5h0.6v0.6h-0.6zM170.5 173.5h1.0v1.0h-1.0zM179.4 159.5h0.8v0.8h-0.8zM173.2 153.6h0.6v0.6h-0.6zM185.6 96.5h0.6v0.6h-0.6zM114.0 137.5h0.8v0.8h-0.8zM136.6 138.0h0.6v0.6h-0.6zM98.4 113.8h0.6v0.6h-0.6zM108.4 113.9h1.0v1.0h-1.0zM186.4 120.2h0.6v0.6h-0.6zM186.7 105.3h1.0v1.0h-1.0zM174.9 173.9h0.8v0.8h-0.8zM175.7 147.3h0.8v0.8h-0.8zM130.1 159.6h0.6v0.6h-0.6zM111.3 142.8h1.0v1.0h-1.0zM133.2 143.3h0.6v0.6h-0.6zM132.7 137.6h0.6v0.6h-0.6zM126.1 150.4h0.8v0.8h-0.8zM143.1 91.6h0.8v0.8h-0.8zM135.0 130.4h0.8v0.8h-0.8zM171.1 132.3h0.6v0.6h-0.6zM185.1 101.0h0.8v0.8h-0.8zM137.6 115.3h1.0v1.0h-1.0zM139.4 139.3h0.8v0.8h-0.8zM164.2 116.8h0.6v0.6h-0.6zM100.0 136.7h1.0v1.0h-1.0zM144.7 171.6h1.0v1.0h-1.0zM179.9 144.6h0.8v0.8h-0.8zM124.8 162.9h0.8v0.8h-0.8zM157.9 117.4h1.0v1.0h-1.0zM119.9 173.2h0.6v0.6h-0.6zM153.1 113.0h0.6v0.6h-0.6zM148.8 119.5h0.8v0.8h-0.8zM113.5 132.5h0.6v0.6h-0.6zM141.0 141.3h0.6v0.6h-0.6zM154.2 102.1h1.0v1.0h-1.0zM157.3 106.2h0.6v0.6h-0.6zM94.3 90.5h0.8v0.8h-0.8zM84.9 170.6h0.8v0.8h-0.8zM132.8 133.1h1.0v1.0h-1.0zM168.6 119.5h0.8v0.8h-0.8zM92.2 109.0h1.0v1.0h-1.0zM92.0 155.8h0.6v0.6h-0.6zM107.5 101.6h0.6v0.6h-0.6zM183.2 115.7h1.0v1.0h-1.0zM123.9 161.5h0.8v0.8h-0.8zM184.2 108.3h0.8v0.8h-0.8zM103.7 108.1h1.0v1.0h-1.0zM87.4 175.9h1.0v1.0h-1.0zM158.0 99.1h1.0v1.0h-1.0zM94.4 87.0h0.6v0.6h-0.6zM172.2 112.9h1.0v1.0h-1.0z" fill="rgb(48,48,48)"/><g fill="none" stroke-linecap="round"><path d="M97.3 71V85.8" stroke="rgb(92,92,92)" stroke-width="6.6"/><path d="M110.2 71V85.8" stroke="rgb(92,92,92)" stroke-width="6.6"/><path d="M123 71V85.8" stroke="rgb(92,92,92)" stroke-width="6.6"/><path d="M136.4 71V85.8" stroke="rgb(92,92,92)" stroke-width="6.6"/><path d="M149.3 71V85.8" stroke="rgb(92,92,92)" stroke-width="6.6"/><path d="M162.2 71V85.8" stroke="rgb(92,92,92)" stroke-width="6.6"/><path d="M175.6 71V85.8" stroke="rgb(92,92,92)" stroke-width="6.6"/><path d="M96.4 179V188" stroke="rgb(92,92,92)" stroke-width="5.94"/><path d="M109.9 179V188" stroke="rgb(92,92,92)" stroke-width="5.94"/><path d="M123.4 179V188" stroke="rgb(92,92,92)" stroke-width="5.94"/><path d="M136.3 179V188" stroke="rgb(92,92,92)" stroke-width="5.94"/><path d="M150.3 179V188" stroke="rgb(92,92,92)" stroke-width="5.94"/><path d="M163.2 179V188" stroke="rgb(92,92,92)" stroke-width="5.94"/><path d="M176.1 179V188" stroke="rgb(92,92,92)" stroke-width="5.94"/><path d="M97.3 71V85.8" stroke="rgb(112,112,112)" stroke-width="5.4"/><path d="M110.2 71V85.8" stroke="rgb(112,112,112)" stroke-width="5.4"/><path d="M123 71V85.8" stroke="rgb(112,112,112)" stroke-width="5.4"/><path d="M136.4 71V85.8" stroke="rgb(112,112,112)" stroke-width="5.4"/><path d="M149.3 71V85.8" stroke="rgb(112,112,112)" stroke-width="5.4"/><path d="M162.2 71V85.8" stroke="rgb(112,112,112)" stroke-width="5.4"/><path d="M175.6 71V85.8" stroke="rgb(112,112,112)" stroke-width="5.4"/><path d="M96.4 179V188" stroke="rgb(112,112,112)" stroke-width="4.86"/><path d="M109.9 179V188" stroke="rgb(112,112,112)" stroke-width="4.86"/><path d="M123.4 179V188" stroke="rgb(112,112,112)" stroke-width="4.86"/><path d="M136.3 179V188" stroke="rgb(112,112,112)" stroke-width="4.86"/><path d="M150.3 179V188" stroke="rgb(112,112,112)" stroke-width="4.86"/><path d="M163.2 179V188" stroke="rgb(112,112,112)" stroke-width="4.86"/><path d="M176.1 179V188" stroke="rgb(112,112,112)" stroke-width="4.86"/><path d="M97.3 71V85.8" stroke="rgb(143,143,143)" stroke-width="4.4"/><path d="M110.2 71V85.8" stroke="rgb(143,143,143)" stroke-width="4.4"/><path d="M123 71V85.8" stroke="rgb(143,143,143)" stroke-width="4.4"/><path d="M136.4 71V85.8" stroke="rgb(143,143,143)" stroke-width="4.4"/><path d="M149.3 71V85.8" stroke="rgb(143,143,143)" stroke-width="4.4"/><path d="M162.2 71V85.8" stroke="rgb(143,143,143)" stroke-width="4.4"/><path d="M175.6 71V85.8" stroke="rgb(143,143,143)" stroke-width="4.4"/><path d="M96.4 179V188" stroke="rgb(143,143,143)" stroke-width="3.96"/><path d="M109.9 179V188" stroke="rgb(143,143,143)" stroke-width="3.96"/><path d="M123.4 179V188" stroke="rgb(143,143,143)" stroke-width="3.96"/><path d="M136.3 179V188" stroke="rgb(143,143,143)" stroke-width="3.96"/><path d="M150.3 179V188" stroke="rgb(143,143,143)" stroke-width="3.96"/><path d="M163.2 179V188" stroke="rgb(143,143,143)" stroke-width="3.96"/><path d="M176.1 179V188" stroke="rgb(143,143,143)" stroke-width="3.96"/><path d="M97.3 71V85.8" stroke="rgb(153,153,153)" stroke-width="3.4"/><path d="M110.2 71V85.8" stroke="rgb(153,153,153)" stroke-width="3.4"/><path d="M123 71V85.8" stroke="rgb(153,153,153)" stroke-width="3.4"/><path d="M136.4 71V85.8" stroke="rgb(153,153,153)" stroke-width="3.4"/><path d="M149.3 71V85.8" stroke="rgb(153,153,153)" stroke-width="3.4"/><path d="M162.2 71V85.8" stroke="rgb(153,153,153)" stroke-width="3.4"/><path d="M175.6 71V85.8" stroke="rgb(153,153,153)" stroke-width="3.4"/><path d="M96.4 179V188" stroke="rgb(153,153,153)" stroke-width="3.06"/><path d="M109.9 179V188" stroke="rgb(153,153,153)" stroke-width="3.06"/><path d="M123.4 179V188" stroke="rgb(153,153,153)" stroke-width="3.06"/><path d="M136.3 179V188" stroke="rgb(153,153,153)" stroke-width="3.06"/><path d="M150.3 179V188" stroke="rgb(153,153,153)" stroke-width="3.06"/><path d="M163.2 179V188" stroke="rgb(153,153,153)" stroke-width="3.06"/><path d="M176.1 179V188" stroke="rgb(153,153,153)" stroke-width="3.06"/></g><ellipse cx="97.3" cy="81.5" rx="1.3" ry="1.8" fill="rgb(181,181,181)"/><ellipse cx="110.2" cy="81.5" rx="1.3" ry="1.8" fill="rgb(181,181,181)"/><ellipse cx="123" cy="81.5" rx="1.3" ry="1.8" fill="rgb(181,181,181)"/><ellipse cx="136.4" cy="81.5" rx="1.3" ry="1.8" fill="rgb(181,181,181)"/><ellipse cx="149.3" cy="81.5" rx="1.3" ry="1.8" fill="rgb(181,181,181)"/><ellipse cx="162.2" cy="81.5" rx="1.3" ry="1.8" fill="rgb(181,181,181)"/><ellipse cx="175.6" cy="81.5" rx="1.3" ry="1.8" fill="rgb(181,181,181)"/><ellipse cx="96.4" cy="183" rx="1.2" ry="2" fill="rgb(181,181,181)"/><ellipse cx="109.9" cy="183" rx="1.2" ry="2" fill="rgb(181,181,181)"/><ellipse cx="123.4" cy="183" rx="1.2" ry="2" fill="rgb(181,181,181)"/><ellipse cx="136.3" cy="183" rx="1.2" ry="2" fill="rgb(181,181,181)"/><ellipse cx="150.3" cy="183" rx="1.2" ry="2" fill="rgb(181,181,181)"/><ellipse cx="163.2" cy="183" rx="1.2" ry="2" fill="rgb(181,181,181)"/><ellipse cx="176.1" cy="183" rx="1.2" ry="2" fill="rgb(181,181,181)"/><g><ellipse cx="111" cy="95.2" rx="5.3" ry="3.9" fill="rgb(107,107,107)"/><ellipse cx="111" cy="95.2" rx="4.3999999999999995" ry="3.0999999999999996" fill="rgb(149,149,149)"/><ellipse cx="111" cy="95.4" rx="2.42" ry="1.7049999999999998" fill="rgb(176,176,176)"/></g><g><ellipse cx="123.5" cy="95.2" rx="5.3" ry="3.9" fill="rgb(107,107,107)"/><ellipse cx="123.5" cy="95.2" rx="4.3999999999999995" ry="3.0999999999999996" fill="rgb(149,149,149)"/><ellipse cx="123.5" cy="95.4" rx="2.42" ry="1.7049999999999998" fill="rgb(176,176,176)"/></g><g><ellipse cx="136" cy="95.2" rx="5.3" ry="3.9" fill="rgb(107,107,107)"/><ellipse cx="136" cy="95.2" rx="4.3999999999999995" ry="3.0999999999999996" fill="rgb(149,149,149)"/><ellipse cx="136" cy="95.4" rx="2.42" ry="1.7049999999999998" fill="rgb(176,176,176)"/></g><g><ellipse cx="148.8" cy="95.2" rx="5.3" ry="3.9" fill="rgb(107,107,107)"/><ellipse cx="148.8" cy="95.2" rx="4.3999999999999995" ry="3.0999999999999996" fill="rgb(149,149,149)"/><ellipse cx="148.8" cy="95.4" rx="2.42" ry="1.7049999999999998" fill="rgb(176,176,176)"/></g><g><ellipse cx="161.5" cy="95.2" rx="5.3" ry="3.9" fill="rgb(107,107,107)"/><ellipse cx="161.5" cy="95.2" rx="4.3999999999999995" ry="3.0999999999999996" fill="rgb(149,149,149)"/></g><g><ellipse cx="111" cy="170.2" rx="5.3" ry="3.9" fill="rgb(107,107,107)"/><ellipse cx="111" cy="170.2" rx="4.3999999999999995" ry="3.0999999999999996" fill="rgb(149,149,149)"/><ellipse cx="111" cy="170.39999999999998" rx="2.42" ry="1.7049999999999998" fill="rgb(176,176,176)"/></g><g><ellipse cx="136.4" cy="170.2" rx="5.3" ry="3.9" fill="rgb(107,107,107)"/><ellipse cx="136.4" cy="170.2" rx="4.3999999999999995" ry="3.0999999999999996" fill="rgb(149,149,149)"/><ellipse cx="136.4" cy="170.39999999999998" rx="2.42" ry="1.7049999999999998" fill="rgb(176,176,176)"/></g><g><ellipse cx="149.2" cy="170.2" rx="5.3" ry="3.9" fill="rgb(107,107,107)"/><ellipse cx="149.2" cy="170.2" rx="4.3999999999999995" ry="3.0999999999999996" fill="rgb(149,149,149)"/><ellipse cx="149.2" cy="170.39999999999998" rx="2.42" ry="1.7049999999999998" fill="rgb(176,176,176)"/></g><g><ellipse cx="161.8" cy="170.2" rx="5.3" ry="3.9" fill="rgb(107,107,107)"/><ellipse cx="161.8" cy="170.2" rx="4.3999999999999995" ry="3.0999999999999996" fill="rgb(149,149,149)"/><ellipse cx="161.8" cy="170.39999999999998" rx="2.42" ry="1.7049999999999998" fill="rgb(176,176,176)"/></g><g transform="rotate(55 100 101)"><ellipse cx="100" cy="101" rx="8.0" ry="5.6" fill="rgb(107,107,107)"/><ellipse cx="100" cy="101" rx="7.1" ry="4.8" fill="rgb(149,149,149)"/><ellipse cx="100" cy="101.2" rx="3.55" ry="2.4" fill="rgb(176,176,176)"/></g><g transform="rotate(-50 172.5 103.5)"><ellipse cx="172.5" cy="103.5" rx="6.2" ry="4.8" fill="rgb(107,107,107)"/><ellipse cx="172.5" cy="103.5" rx="5.3" ry="4.0" fill="rgb(149,149,149)"/></g><g transform="rotate(-45 99 165.5)"><ellipse cx="99" cy="165.5" rx="7.2" ry="5.8" fill="rgb(107,107,107)"/><ellipse cx="99" cy="165.5" rx="6.3" ry="5.0" fill="rgb(149,149,149)"/><ellipse cx="99" cy="165.7" rx="3.78" ry="3.0" fill="rgb(176,176,176)"/></g><g transform="rotate(50 173.5 164.5)"><ellipse cx="173.5" cy="164.5" rx="7.2" ry="5.4" fill="rgb(107,107,107)"/><ellipse cx="173.5" cy="164.5" rx="6.3" ry="4.6000000000000005" fill="rgb(149,149,149)"/><ellipse cx="173.5" cy="164.7" rx="2.2049999999999996" ry="1.61" fill="rgb(176,176,176)"/></g><path d="M119 166H129V168H119Z M119 170H129V172H119Z" fill="rgb(92,92,92)"/><path d="M97 114 L101.5 117 L99.5 121.5 L97 126 L96.5 131 L98.5 140 L96 141.5 L93 138.5 L89.5 139.5 L88.5 136 L93.5 132.5 L92.5 125 L88.5 124.5 L91.5 120 L93.5 115.5Z" fill="rgb(107,107,107)"/><path d="M97 115.6 L100 117.5 L98.2 121 L95.8 126 L95.2 131 L96.8 138.5 L93.2 137 L90.5 137.8 L94.5 133.5 L92.5 124 L90.5 123.2 L93.2 120 L95.2 116.5Z" fill="rgb(150,150,150)"/><ellipse cx="96" cy="119" rx="1.8" ry="2.8" fill="rgb(181,181,181)"/><ellipse cx="92.5" cy="123.8" rx="1.3" ry="1" fill="rgb(181,181,181)"/><path d="M98 128 L99 147" stroke="rgb(92,92,92)" stroke-width="1.4"/><circle cx="102.8" cy="145.2" r="1.1" fill="rgb(76,76,76)"/><path d="M171 114.5 L180.5 113 L181 151 L170.5 150.5 L170.5 146 L176 143.5 L175.5 121 L171 119Z" fill="rgb(107,107,107)"/><path d="M172 115.5 L179.6 114.2 L180 149.8 L171.6 149.4 L171.6 146.8 L177 144.2 L176.6 120.2 L172 118.2Z" fill="rgb(149,149,149)"/><ellipse cx="177.3" cy="117.5" rx="2.5" ry="2" fill="rgb(178,178,178)"/><ellipse cx="178" cy="128" rx="1.1" ry="3.5" fill="rgb(168,168,168)"/><ellipse cx="177.5" cy="146.5" rx="2.4" ry="2.4" fill="rgb(181,181,181)"/><circle cx="186" cy="126" r="0.8" fill="rgb(84,84,84)"/><rect x="118" y="112.8" width="38" height="40.5" fill="rgb(69,69,69)"/><rect x="135.5" y="112.8" width="20.5" height="40.5" fill="rgb(73,73,73)"/><rect x="123.2" y="125.3" width="1.6" height="1.3" fill="rgb(65,65,65)"/><rect x="131.0" y="143.8" width="1.6" height="1.3" fill="rgb(71,71,71)"/><rect x="130.7" y="138.4" width="1.6" height="1.3" fill="rgb(71,71,71)"/><rect x="125.3" y="146.4" width="1.6" height="1.3" fill="rgb(66,66,66)"/><rect x="120.8" y="151.2" width="1.6" height="1.3" fill="rgb(71,71,71)"/><rect x="125.6" y="140.0" width="1.6" height="1.3" fill="rgb(71,71,71)"/><rect x="128.7" y="150.4" width="1.6" height="1.3" fill="rgb(71,71,71)"/><rect x="133.2" y="124.5" width="1.6" height="1.3" fill="rgb(65,65,65)"/><rect x="132.4" y="138.9" width="1.6" height="1.3" fill="rgb(71,71,71)"/><rect x="121.3" y="129.3" width="1.6" height="1.3" fill="rgb(71,71,71)"/><rect x="120.4" y="143.5" width="1.6" height="1.3" fill="rgb(71,71,71)"/><rect x="120.0" y="137.9" width="1.6" height="1.3" fill="rgb(66,66,66)"/><rect x="122.3" y="150.3" width="1.6" height="1.3" fill="rgb(66,66,66)"/><rect x="122.1" y="131.0" width="1.6" height="1.3" fill="rgb(65,65,65)"/><rect x="123.2" y="127.9" width="1.6" height="1.3" fill="rgb(71,71,71)"/><rect x="128.7" y="134.6" width="1.6" height="1.3" fill="rgb(66,66,66)"/><rect x="122.2" y="135.2" width="1.6" height="1.3" fill="rgb(66,66,66)"/><rect x="130.7" y="118.4" width="1.6" height="1.3" fill="rgb(71,71,71)"/><rect x="119.0" y="126.5" width="1.6" height="1.3" fill="rgb(66,66,66)"/><rect x="126.5" y="133.3" width="1.6" height="1.3" fill="rgb(65,65,65)"/><rect x="120.0" y="141.2" width="1.6" height="1.3" fill="rgb(65,65,65)"/><rect x="131.8" y="120.8" width="1.6" height="1.3" fill="rgb(66,66,66)"/><rect x="132.7" y="149.5" width="1.6" height="1.3" fill="rgb(66,66,66)"/><rect x="123.3" y="135.4" width="1.6" height="1.3" fill="rgb(65,65,65)"/><rect x="124.0" y="142.2" width="1.6" height="1.3" fill="rgb(66,66,66)"/><rect x="127.6" y="137.5" width="1.6" height="1.3" fill="rgb(71,71,71)"/><rect x="134.5" y="121.7" width="1.6" height="1.3" fill="rgb(71,71,71)"/><rect x="128.6" y="140.0" width="1.6" height="1.3" fill="rgb(66,66,66)"/><rect x="125.6" y="121.0" width="1.6" height="1.3" fill="rgb(71,71,71)"/><rect x="122.1" y="139.6" width="1.6" height="1.3" fill="rgb(66,66,66)"/><rect x="134.5" y="116.2" width="1.6" height="1.3" fill="rgb(65,65,65)"/><rect x="133.9" y="119.3" width="1.6" height="1.3" fill="rgb(71,71,71)"/><rect x="132.2" y="140.0" width="1.6" height="1.3" fill="rgb(71,71,71)"/><rect x="126.3" y="145.8" width="1.6" height="1.3" fill="rgb(65,65,65)"/><rect x="119.9" y="138.6" width="1.6" height="1.3" fill="rgb(66,66,66)"/><rect x="122.7" y="115.1" width="1.6" height="1.3" fill="rgb(65,65,65)"/><rect x="132.6" y="120.1" width="1.6" height="1.3" fill="rgb(66,66,66)"/><rect x="121.0" y="136.9" width="1.6" height="1.3" fill="rgb(66,66,66)"/><rect x="133.7" y="128.2" width="1.6" height="1.3" fill="rgb(71,71,71)"/><rect x="130.7" y="147.6" width="1.6" height="1.3" fill="rgb(71,71,71)"/><rect x="129.2" y="123.2" width="1.6" height="1.3" fill="rgb(65,65,65)"/><rect x="129.8" y="151.0" width="1.6" height="1.3" fill="rgb(66,66,66)"/><rect x="126.1" y="124.9" width="1.6" height="1.3" fill="rgb(66,66,66)"/><rect x="126.5" y="114.4" width="1.6" height="1.3" fill="rgb(66,66,66)"/><rect x="132.6" y="132.3" width="1.6" height="1.3" fill="rgb(71,71,71)"/><rect x="121.5" y="124.1" width="1.6" height="1.3" fill="rgb(71,71,71)"/><rect x="121.1" y="137.1" width="1.6" height="1.3" fill="rgb(71,71,71)"/><rect x="120.6" y="150.4" width="1.6" height="1.3" fill="rgb(71,71,71)"/><rect x="123.6" y="131.3" width="1.6" height="1.3" fill="rgb(71,71,71)"/><rect x="125.7" y="124.6" width="1.6" height="1.3" fill="rgb(71,71,71)"/><rect x="126.7" y="129.1" width="1.6" height="1.3" fill="rgb(66,66,66)"/><rect x="132.7" y="117.1" width="1.6" height="1.3" fill="rgb(65,65,65)"/><rect x="119.7" y="129.2" width="1.6" height="1.3" fill="rgb(65,65,65)"/><rect x="134.4" y="150.2" width="1.6" height="1.3" fill="rgb(66,66,66)"/><rect x="121.4" y="130.1" width="1.6" height="1.3" fill="rgb(71,71,71)"/><rect x="122.7" y="119.6" width="1.6" height="1.3" fill="rgb(71,71,71)"/><rect x="123.7" y="128.0" width="1.6" height="1.3" fill="rgb(65,65,65)"/><rect x="130.7" y="114.1" width="1.6" height="1.3" fill="rgb(65,65,65)"/><rect x="126.7" y="119.0" width="1.6" height="1.3" fill="rgb(65,65,65)"/><rect x="120.8" y="147.3" width="1.6" height="1.3" fill="rgb(71,71,71)"/><rect x="120.0" y="139.7" width="1.6" height="1.3" fill="rgb(65,65,65)"/><rect x="124.3" y="121.0" width="1.6" height="1.3" fill="rgb(65,65,65)"/><rect x="123.5" y="115.8" width="1.6" height="1.3" fill="rgb(71,71,71)"/><rect x="121.3" y="143.6" width="1.6" height="1.3" fill="rgb(65,65,65)"/><rect x="127.8" y="151.1" width="1.6" height="1.3" fill="rgb(66,66,66)"/><rect x="126.5" y="148.2" width="1.6" height="1.3" fill="rgb(65,65,65)"/><rect x="132.3" y="148.6" width="1.6" height="1.3" fill="rgb(65,65,65)"/><rect x="126.5" y="125.4" width="1.6" height="1.3" fill="rgb(66,66,66)"/><rect x="122.3" y="138.4" width="1.6" height="1.3" fill="rgb(65,65,65)"/><rect x="125.7" y="120.0" width="1.6" height="1.3" fill="rgb(66,66,66)"/><path d="M120.5 114.2h1.2v1.2h-1.2zM122.6 114.2h1.2v1.2h-1.2zM124.7 114.2h1.2v1.2h-1.2zM126.8 114.2h1.2v1.2h-1.2zM128.9 114.2h1.2v1.2h-1.2zM131.0 114.2h1.2v1.2h-1.2zM133.1 114.2h1.2v1.2h-1.2zM135.2 114.2h1.2v1.2h-1.2zM120.5 151.4h1.2v1.2h-1.2zM122.6 151.4h1.2v1.2h-1.2zM124.7 151.4h1.2v1.2h-1.2zM126.8 151.4h1.2v1.2h-1.2zM128.9 151.4h1.2v1.2h-1.2zM131.0 151.4h1.2v1.2h-1.2zM133.1 151.4h1.2v1.2h-1.2zM135.2 151.4h1.2v1.2h-1.2zM137.2 114.5h1.2v1.2h-1.2zM137.2 117.1h1.2v1.2h-1.2zM137.2 119.7h1.2v1.2h-1.2zM137.2 122.3h1.2v1.2h-1.2zM137.2 124.9h1.2v1.2h-1.2zM137.2 127.5h1.2v1.2h-1.2zM137.2 130.1h1.2v1.2h-1.2zM137.2 132.7h1.2v1.2h-1.2zM137.2 135.3h1.2v1.2h-1.2zM137.2 137.9h1.2v1.2h-1.2zM137.2 140.5h1.2v1.2h-1.2zM137.2 143.1h1.2v1.2h-1.2zM137.2 145.7h1.2v1.2h-1.2zM137.2 148.3h1.2v1.2h-1.2zM137.2 150.9h1.2v1.2h-1.2zM144.0 117.5h1.2v1.2h-1.2zM144.0 120.5h1.2v1.2h-1.2zM147.0 117.5h1.2v1.2h-1.2zM147.0 120.5h1.2v1.2h-1.2zM147.0 124.0h1.2v1.2h-1.2zM147.0 127.0h1.2v1.2h-1.2zM150.0 117.5h1.2v1.2h-1.2zM150.0 120.5h1.2v1.2h-1.2zM150.0 124.0h1.2v1.2h-1.2zM153.0 117.5h1.2v1.2h-1.2zM153.0 124.0h1.2v1.2h-1.2zM141.0 140.0h1.2v1.2h-1.2zM141.0 143.0h1.2v1.2h-1.2zM141.0 149.0h1.2v1.2h-1.2zM141.0 151.4h1.2v1.2h-1.2zM144.0 146.0h1.2v1.2h-1.2zM147.0 143.0h1.2v1.2h-1.2zM150.0 143.0h1.2v1.2h-1.2zM150.0 146.0h1.2v1.2h-1.2zM150.0 149.0h1.2v1.2h-1.2zM150.0 151.4h1.2v1.2h-1.2zM153.0 140.0h1.2v1.2h-1.2zM153.0 143.0h1.2v1.2h-1.2zM153.0 149.0h1.2v1.2h-1.2zM124.0 125.0h1.2v1.2h-1.2zM128.0 130.0h1.2v1.2h-1.2zM122.0 140.0h1.2v1.2h-1.2zM131.0 135.0h1.2v1.2h-1.2zM126.0 137.0h1.2v1.2h-1.2zM133.0 128.0h1.2v1.2h-1.2z" fill="rgb(120,120,120)"/><path d="M125 153 L121 178 M128 153 L124 178" stroke="rgb(79,79,79)" stroke-width="0.6" fill="none"/></g></svg>
<div class="a" style="left:262px;top:36.5px;width:6.4px;height:1.2px;background:#c8c8c8"></div>
<div class="a" style="left:262px;top:37.6px;width:6.4px;height:190.6px;background:linear-gradient(#ffffff 0.0%,#fff0f8 2.0%,#ff90c8 4.7%,#ff1088 7.9%,#e80068 9.8%,#c8003a 12.8%,#a00000 16.4%,#d04000 20.4%,#ff8000 24.5%,#ffff00 33.0%,#c0ff00 37.1%,#00f000 40.2%,#00d000 43.4%,#00a000 47.9%,#00a040 51.2%,#00c0a0 55.1%,#00ffff 59.1%,#00b0c8 64.5%,#0060e0 68.5%,#0000ff 73.0%,#0000c0 80.6%,#000070 84.3%,#8000ff 92.3%,#100020 98.4%,#000000 100.0%)"></div>
<svg style="left:268.4px;top:38.08px" width="3" height="191" viewBox="0 0 3 191"><g fill="#666"><rect x="0" y="0.000" width="1.2" height="0.5"/><rect x="0" y="1.095" width="1.2" height="0.5"/><rect x="0" y="2.190" width="1.2" height="0.5"/><rect x="0" y="3.285" width="1.2" height="0.5"/><rect x="0" y="4.380" width="1.2" height="0.5"/><rect x="0" y="5.475" width="1.2" height="0.5"/><rect x="0" y="6.570" width="1.9" height="0.5"/><rect x="0" y="7.665" width="1.2" height="0.5"/><rect x="0" y="8.760" width="1.2" height="0.5"/><rect x="0" y="9.855" width="1.2" height="0.5"/><rect x="0" y="10.950" width="1.2" height="0.5"/><rect x="0" y="12.045" width="1.2" height="0.5"/><rect x="0" y="13.140" width="1.2" height="0.5"/><rect x="0" y="14.235" width="1.2" height="0.5"/><rect x="0" y="15.330" width="1.2" height="0.5"/><rect x="0" y="16.425" width="1.2" height="0.5"/><rect x="0" y="17.520" width="1.9" height="0.5"/><rect x="0" y="18.615" width="1.2" height="0.5"/><rect x="0" y="19.710" width="1.2" height="0.5"/><rect x="0" y="20.805" width="1.2" height="0.5"/><rect x="0" y="21.900" width="1.2" height="0.5"/><rect x="0" y="22.995" width="1.2" height="0.5"/><rect x="0" y="24.090" width="1.2" height="0.5"/><rect x="0" y="25.185" width="1.2" height="0.5"/><rect x="0" y="26.280" width="1.2" height="0.5"/><rect x="0" y="27.375" width="1.2" height="0.5"/><rect x="0" y="28.470" width="1.9" height="0.5"/><rect x="0" y="29.565" width="1.2" height="0.5"/><rect x="0" y="30.660" width="1.2" height="0.5"/><rect x="0" y="31.755" width="1.2" height="0.5"/><rect x="0" y="32.850" width="1.2" height="0.5"/><rect x="0" y="33.945" width="1.2" height="0.5"/><rect x="0" y="35.040" width="1.2" height="0.5"/><rect x="0" y="36.135" width="1.2" height="0.5"/><rect x="0" y="37.230" width="1.2" height="0.5"/><rect x="0" y="38.325" width="1.2" height="0.5"/><rect x="0" y="39.420" width="1.9" height="0.5"/><rect x="0" y="40.515" width="1.2" height="0.5"/><rect x="0" y="41.610" width="1.2" height="0.5"/><rect x="0" y="42.705" width="1.2" height="0.5"/><rect x="0" y="43.800" width="1.2" height="0.5"/><rect x="0" y="44.895" width="1.2" height="0.5"/><rect x="0" y="45.990" width="1.2" height="0.5"/><rect x="0" y="47.085" width="1.2" height="0.5"/><rect x="0" y="48.180" width="1.2" height="0.5"/><rect x="0" y="49.275" width="1.2" height="0.5"/><rect x="0" y="50.370" width="1.9" height="0.5"/><rect x="0" y="51.465" width="1.2" height="0.5"/><rect x="0" y="52.560" width="1.2" height="0.5"/><rect x="0" y="53.655" width="1.2" height="0.5"/><rect x="0" y="54.750" width="1.2" height="0.5"/><rect x="0" y="55.845" width="1.2" height="0.5"/><rect x="0" y="56.940" width="1.2" height="0.5"/><rect x="0" y="58.035" width="1.2" height="0.5"/><rect x="0" y="59.130" width="1.2" height="0.5"/><rect x="0" y="60.225" width="1.2" height="0.5"/><rect x="0" y="61.320" width="1.9" height="0.5"/><rect x="0" y="62.415" width="1.2" height="0.5"/><rect x="0" y="63.510" width="1.2" height="0.5"/><rect x="0" y="64.605" width="1.2" height="0.5"/><rect x="0" y="65.700" width="1.2" height="0.5"/><rect x="0" y="66.795" width="1.2" height="0.5"/><rect x="0" y="67.890" width="1.2" height="0.5"/><rect x="0" y="68.985" width="1.2" height="0.5"/><rect x="0" y="70.080" width="1.2" height="0.5"/><rect x="0" y="71.175" width="1.2" height="0.5"/><rect x="0" y="72.270" width="1.9" height="0.5"/><rect x="0" y="73.365" width="1.2" height="0.5"/><rect x="0" y="74.460" width="1.2" height="0.5"/><rect x="0" y="75.555" width="1.2" height="0.5"/><rect x="0" y="76.650" width="1.2" height="0.5"/><rect x="0" y="77.745" width="1.2" height="0.5"/><rect x="0" y="78.840" width="1.2" height="0.5"/><rect x="0" y="79.935" width="1.2" height="0.5"/><rect x="0" y="81.030" width="1.2" height="0.5"/><rect x="0" y="82.125" width="1.2" height="0.5"/><rect x="0" y="83.220" width="1.9" height="0.5"/><rect x="0" y="84.315" width="1.2" height="0.5"/><rect x="0" y="85.410" width="1.2" height="0.5"/><rect x="0" y="86.505" width="1.2" height="0.5"/><rect x="0" y="87.600" width="1.2" height="0.5"/><rect x="0" y="88.695" width="1.2" height="0.5"/><rect x="0" y="89.790" width="1.2" height="0.5"/><rect x="0" y="90.885" width="1.2" height="0.5"/><rect x="0" y="91.980" width="1.2" height="0.5"/><rect x="0" y="93.075" width="1.2" height="0.5"/><rect x="0" y="94.170" width="1.9" height="0.5"/><rect x="0" y="95.265" width="1.2" height="0.5"/><rect x="0" y="96.360" width="1.2" height="0.5"/><rect x="0" y="97.455" width="1.2" height="0.5"/><rect x="0" y="98.550" width="1.2" height="0.5"/><rect x="0" y="99.645" width="1.2" height="0.5"/><rect x="0" y="100.740" width="1.2" height="0.5"/><rect x="0" y="101.835" width="1.2" height="0.5"/><rect x="0" y="102.930" width="1.2" height="0.5"/><rect x="0" y="104.025" width="1.2" height="0.5"/><rect x="0" y="105.120" width="1.9" height="0.5"/><rect x="0" y="106.215" width="1.2" height="0.5"/><rect x="0" y="107.310" width="1.2" height="0.5"/><rect x="0" y="108.405" width="1.2" height="0.5"/><rect x="0" y="109.500" width="1.2" height="0.5"/><rect x="0" y="110.595" width="1.2" height="0.5"/><rect x="0" y="111.690" width="1.2" height="0.5"/><rect x="0" y="112.785" width="1.2" height="0.5"/><rect x="0" y="113.880" width="1.2" height="0.5"/><rect x="0" y="114.975" width="1.2" height="0.5"/><rect x="0" y="116.070" width="1.9" height="0.5"/><rect x="0" y="117.165" width="1.2" height="0.5"/><rect x="0" y="118.260" width="1.2" height="0.5"/><rect x="0" y="119.355" width="1.2" height="0.5"/><rect x="0" y="120.450" width="1.2" height="0.5"/><rect x="0" y="121.545" width="1.2" height="0.5"/><rect x="0" y="122.640" width="1.2" height="0.5"/><rect x="0" y="123.735" width="1.2" height="0.5"/><rect x="0" y="124.830" width="1.2" height="0.5"/><rect x="0" y="125.925" width="1.2" height="0.5"/><rect x="0" y="127.020" width="1.9" height="0.5"/><rect x="0" y="128.115" width="1.2" height="0.5"/><rect x="0" y="129.210" width="1.2" height="0.5"/><rect x="0" y="130.305" width="1.2" height="0.5"/><rect x="0" y="131.400" width="1.2" height="0.5"/><rect x="0" y="132.495" width="1.2" height="0.5"/><rect x="0" y="133.590" width="1.2" height="0.5"/><rect x="0" y="134.685" width="1.2" height="0.5"/><rect x="0" y="135.780" width="1.2" height="0.5"/><rect x="0" y="136.875" width="1.2" height="0.5"/><rect x="0" y="137.970" width="1.9" height="0.5"/><rect x="0" y="139.065" width="1.2" height="0.5"/><rect x="0" y="140.160" width="1.2" height="0.5"/><rect x="0" y="141.255" width="1.2" height="0.5"/><rect x="0" y="142.350" width="1.2" height="0.5"/><rect x="0" y="143.445" width="1.2" height="0.5"/><rect x="0" y="144.540" width="1.2" height="0.5"/><rect x="0" y="145.635" width="1.2" height="0.5"/><rect x="0" y="146.730" width="1.2" height="0.5"/><rect x="0" y="147.825" width="1.2" height="0.5"/><rect x="0" y="148.920" width="1.9" height="0.5"/><rect x="0" y="150.015" width="1.2" height="0.5"/><rect x="0" y="151.110" width="1.2" height="0.5"/><rect x="0" y="152.205" width="1.2" height="0.5"/><rect x="0" y="153.300" width="1.2" height="0.5"/><rect x="0" y="154.395" width="1.2" height="0.5"/><rect x="0" y="155.490" width="1.2" height="0.5"/><rect x="0" y="156.585" width="1.2" height="0.5"/><rect x="0" y="157.680" width="1.2" height="0.5"/><rect x="0" y="158.775" width="1.2" height="0.5"/><rect x="0" y="159.870" width="1.9" height="0.5"/><rect x="0" y="160.965" width="1.2" height="0.5"/><rect x="0" y="162.060" width="1.2" height="0.5"/><rect x="0" y="163.155" width="1.2" height="0.5"/><rect x="0" y="164.250" width="1.2" height="0.5"/><rect x="0" y="165.345" width="1.2" height="0.5"/><rect x="0" y="166.440" width="1.2" height="0.5"/><rect x="0" y="167.535" width="1.2" height="0.5"/><rect x="0" y="168.630" width="1.2" height="0.5"/><rect x="0" y="169.725" width="1.2" height="0.5"/><rect x="0" y="170.820" width="1.9" height="0.5"/><rect x="0" y="171.915" width="1.2" height="0.5"/><rect x="0" y="173.010" width="1.2" height="0.5"/><rect x="0" y="174.105" width="1.2" height="0.5"/><rect x="0" y="175.200" width="1.2" height="0.5"/><rect x="0" y="176.295" width="1.2" height="0.5"/><rect x="0" y="177.390" width="1.2" height="0.5"/><rect x="0" y="178.485" width="1.2" height="0.5"/><rect x="0" y="179.580" width="1.2" height="0.5"/><rect x="0" y="180.675" width="1.2" height="0.5"/><rect x="0" y="181.770" width="1.9" height="0.5"/><rect x="0" y="182.865" width="1.2" height="0.5"/><rect x="0" y="183.960" width="1.2" height="0.5"/><rect x="0" y="185.055" width="1.2" height="0.5"/><rect x="0" y="186.150" width="1.2" height="0.5"/><rect x="0" y="187.245" width="1.2" height="0.5"/><rect x="0" y="188.340" width="1.2" height="0.5"/><rect x="0" y="189.435" width="1.2" height="0.5"/></g></svg>
<div class="t" style="left:272.5px;top:53.57px;font-size:4.55px;line-height:5.46px;color:#333;letter-spacing:-0.025px;">34.00</div>
<div class="t" style="left:272.5px;top:75.47px;font-size:4.55px;line-height:5.46px;color:#333;letter-spacing:-0.025px;">32.00</div>
<div class="t" style="left:272.5px;top:97.37px;font-size:4.55px;line-height:5.46px;color:#333;letter-spacing:-0.025px;">30.00</div>
<div class="t" style="left:272.5px;top:119.27px;font-size:4.55px;line-height:5.46px;color:#333;letter-spacing:-0.025px;">28.00</div>
<div class="t" style="left:272.5px;top:141.17px;font-size:4.55px;line-height:5.46px;color:#333;letter-spacing:-0.025px;">26.00</div>
<div class="t" style="left:272.5px;top:163.07px;font-size:4.55px;line-height:5.46px;color:#333;letter-spacing:-0.025px;">24.00</div>
<div class="t" style="left:272.5px;top:184.97px;font-size:4.55px;line-height:5.46px;color:#333;letter-spacing:-0.025px;">22.00</div>
<div class="t" style="left:272.5px;top:206.87px;font-size:4.55px;line-height:5.46px;color:#333;letter-spacing:-0.025px;">20.00</div>
<div class="a" style="left:294.8px;top:36.7px;width:60.0px;height:191.60000000000002px;border:1px solid #b0b0b0;box-sizing:border-box;border-radius:1.5px"></div>
<div class="t" style="left:298.3px;top:40.02px;font-size:4.8px;line-height:5.76px;color:#222;">Color Palette</div>
<div class="t" style="left:330px;top:39.36px;font-size:6.4px;line-height:7.68px;color:#3a92da;font-weight:bold;">?</div>
<svg style="left:346.3px;top:39.400000000000006px" width="5.6" height="5.6" viewBox="0 0 5.6 5.6"><rect x="0.4" y="0.4" width="4.8" height="4.8" fill="#f8f8f8" stroke="#9a9a9a" stroke-width="0.7"/><path d="M1.5 2.8 H4.1" stroke="#555" stroke-width="0.6"/></svg>
<div class="a" style="left:303.5px;top:50.5px;width:6px;height:7px;background:linear-gradient(90deg,#111,#ddd)"></div>
<div class="a" style="left:313px;top:50.5px;width:6px;height:7px;background:linear-gradient(90deg,#000,#c04000,#ffa000,#ffff80)"></div>
<div class="a" style="left:320.8px;top:49.2px;width:8.6px;height:9.6px;background:#cfe4f8;border:0.6px solid #5aa0e8;box-sizing:border-box;border-radius:1px"></div>
<div class="a" style="left:322.3px;top:50.5px;width:6px;height:7px;background:linear-gradient(90deg,#2020c0,#00c0ff,#00d000,#ffff00,#ff4000,#d00040)"></div>
<div class="a btn" style="left:303.3px;top:61.8px;width:13.300000000000011px;height:7.799999999999997px;background:#e1e1e1;border:1px solid #c6c6c6;font-size:4.55px;line-height:5.799999999999997px;padding-top:1px;letter-spacing:-0.075px;">Auto</div>
<div class="a btn" style="left:320.8px;top:61.8px;width:11.800000000000011px;height:7.799999999999997px;background:#e1e1e1;border:1px solid #c6c6c6;font-size:4.55px;line-height:5.799999999999997px;padding-top:1px;letter-spacing:-0.075px;">In</div>
<div class="a btn" style="left:335.2px;top:61.8px;width:13.400000000000034px;height:7.799999999999997px;background:#e1e1e1;border:1px solid #c6c6c6;font-size:4.55px;line-height:5.799999999999997px;padding-top:1px;letter-spacing:-0.075px;">Out</div>
<svg style="left:303.5px;top:72.55px" width="5.5" height="5.5" viewBox="0 0 5.5 5.5"><rect x="0.35" y="0.35" width="4.8" height="4.8" fill="#fff" stroke="#6a6a6a" stroke-width="0.7"/><path d="M1.3 2.9 L2.4 4.0 L4.3 1.5" stroke="#333" stroke-width="0.7" fill="none"/></svg>
<div class="t" style="left:310.8px;top:73.27px;font-size:4.55px;line-height:5.46px;color:#222;letter-spacing:-0.075px;">Auto Scale Region</div>
<div class="a" style="left:319.5px;top:88.7px;width:0.6px;height:87.8px;background:#555"></div>
<svg style="left:318.8px;top:88.7px" width="2" height="87.8" viewBox="0 0 2 87.8"><g fill="#666"><rect x="0" y="0.000" width="1.3" height="0.45"/><rect x="0" y="2.214" width="1.3" height="0.45"/><rect x="0" y="4.428" width="1.3" height="0.45"/><rect x="0" y="6.642" width="1.3" height="0.45"/><rect x="0" y="8.856" width="1.3" height="0.45"/><rect x="0" y="11.070" width="1.3" height="0.45"/><rect x="0" y="13.284" width="1.3" height="0.45"/><rect x="0" y="15.498" width="1.3" height="0.45"/><rect x="0" y="17.712" width="1.3" height="0.45"/><rect x="0" y="19.926" width="1.3" height="0.45"/><rect x="0" y="22.140" width="1.3" height="0.45"/><rect x="0" y="24.354" width="1.3" height="0.45"/><rect x="0" y="26.568" width="1.3" height="0.45"/><rect x="0" y="28.782" width="1.3" height="0.45"/><rect x="0" y="30.996" width="1.3" height="0.45"/><rect x="0" y="33.210" width="1.3" height="0.45"/><rect x="0" y="35.424" width="1.3" height="0.45"/><rect x="0" y="37.638" width="1.3" height="0.45"/><rect x="0" y="39.852" width="1.3" height="0.45"/><rect x="0" y="42.066" width="1.3" height="0.45"/><rect x="0" y="44.280" width="1.3" height="0.45"/><rect x="0" y="46.494" width="1.3" height="0.45"/><rect x="0" y="48.708" width="1.3" height="0.45"/><rect x="0" y="50.922" width="1.3" height="0.45"/><rect x="0" y="53.136" width="1.3" height="0.45"/><rect x="0" y="55.350" width="1.3" height="0.45"/><rect x="0" y="57.564" width="1.3" height="0.45"/><rect x="0" y="59.778" width="1.3" height="0.45"/><rect x="0" y="61.992" width="1.3" height="0.45"/><rect x="0" y="64.206" width="1.3" height="0.45"/><rect x="0" y="66.420" width="1.3" height="0.45"/><rect x="0" y="68.634" width="1.3" height="0.45"/><rect x="0" y="70.848" width="1.3" height="0.45"/><rect x="0" y="73.062" width="1.3" height="0.45"/><rect x="0" y="75.276" width="1.3" height="0.45"/><rect x="0" y="77.490" width="1.3" height="0.45"/><rect x="0" y="79.704" width="1.3" height="0.45"/><rect x="0" y="81.918" width="1.3" height="0.45"/><rect x="0" y="84.132" width="1.3" height="0.45"/><rect x="0" y="86.346" width="1.3" height="0.45"/></g></svg>
<div class="a" style="left:320.9px;top:94.5px;width:1.4px;height:0.6px;background:#333"></div>
<div class="t" style="left:323.3px;top:92.77px;font-size:4.55px;line-height:5.46px;color:#333;letter-spacing:-0.125px;">50.00</div>
<div class="a" style="left:320.9px;top:105.57000000000001px;width:1.4px;height:0.6px;background:#333"></div>
<div class="t" style="left:323.3px;top:103.84px;font-size:4.55px;line-height:5.46px;color:#333;letter-spacing:-0.125px;">45.00</div>
<div class="a" style="left:320.9px;top:116.64px;width:1.4px;height:0.6px;background:#333"></div>
<div class="t" style="left:323.3px;top:114.91px;font-size:4.55px;line-height:5.46px;color:#333;letter-spacing:-0.125px;">40.00</div>
<div class="a" style="left:320.9px;top:127.71px;width:1.4px;height:0.6px;background:#333"></div>
<div class="t" style="left:323.3px;top:125.98px;font-size:4.55px;line-height:5.46px;color:#333;letter-spacing:-0.125px;">35.00</div>
<div class="a" style="left:320.9px;top:138.77999999999997px;width:1.4px;height:0.6px;background:#333"></div>
<div class="t" style="left:323.3px;top:137.05px;font-size:4.55px;line-height:5.46px;color:#333;letter-spacing:-0.125px;">30.00</div>
<div class="a" style="left:320.9px;top:149.85px;width:1.4px;height:0.6px;background:#333"></div>
<div class="t" style="left:323.3px;top:148.12px;font-size:4.55px;line-height:5.46px;color:#333;letter-spacing:-0.125px;">25.00</div>
<div class="a" style="left:320.9px;top:160.92px;width:1.4px;height:0.6px;background:#333"></div>
<div class="t" style="left:323.3px;top:159.19px;font-size:4.55px;line-height:5.46px;color:#333;letter-spacing:-0.125px;">20.00</div>
<div class="a" style="left:320.9px;top:171.99px;width:1.4px;height:0.6px;background:#333"></div>
<div class="t" style="left:323.3px;top:170.26px;font-size:4.55px;line-height:5.46px;color:#333;letter-spacing:-0.125px;">15.00</div>
<svg style="left:303.2px;top:118.9px" width="16.0" height="7.699999999999989" viewBox="0 0 16.0 7.699999999999989"><path d="M0 0 L16.0 7.699999999999989 L0 7.699999999999989Z" fill="#7a7a7a"/></svg>
<svg style="left:303.2px;top:164.7px" width="16.0" height="8.100000000000023" viewBox="0 0 16.0 8.100000000000023"><path d="M0 0.6 L16.0 0 L0 8.100000000000023Z" fill="#7a7a7a"/></svg>
<svg style="left:303.5px;top:187.55px" width="5.5" height="5.5" viewBox="0 0 5.5 5.5"><rect x="0.35" y="0.35" width="4.8" height="4.8" fill="#fff" stroke="#6a6a6a" stroke-width="0.7"/></svg>
<div class="t" style="left:310.5px;top:188.27px;font-size:4.55px;line-height:5.46px;color:#222;letter-spacing:-0.075px;">Move Together</div>
<div class="a" style="left:303.3px;top:196.7px;width:23.899999999999977px;height:7.5px;background:#fff;border:1px solid #b4b4b4;box-sizing:border-box"></div>
<svg style="left:303.3px;top:196.7px" width="5.2" height="7.5" viewBox="0 0 5.2 7.5"><rect x="0.5" y="0.5" width="4.7" height="6.5" fill="#e8e8e8" stroke="#c8c8c8" stroke-width="0.4"/><path d="M1.5 3.05 L2.8000000000000003 1.65 L4.1 3.05Z M1.5 4.45 L2.8000000000000003 5.85 L4.1 4.45Z" fill="#555"/></svg>
<div class="t" style="right:698.3px;top:198.42px;font-size:4.55px;line-height:5.46px;color:#222;text-align:right;letter-spacing:-0.125px;">35.63</div>
<div class="t" style="left:335px;top:198.37px;font-size:4.55px;line-height:5.46px;color:#222;letter-spacing:-0.125px;">500.00</div>
<div class="a" style="left:303.3px;top:206.8px;width:23.899999999999977px;height:7.5px;background:#fff;border:1px solid #b4b4b4;box-sizing:border-box"></div>
<svg style="left:303.3px;top:206.8px" width="5.2" height="7.5" viewBox="0 0 5.2 7.5"><rect x="0.5" y="0.5" width="4.7" height="6.5" fill="#e8e8e8" stroke="#c8c8c8" stroke-width="0.4"/><path d="M1.5 3.05 L2.8000000000000003 1.65 L4.1 3.05Z M1.5 4.45 L2.8000000000000003 5.85 L4.1 4.45Z" fill="#555"/></svg>
<div class="t" style="right:698.3px;top:208.52px;font-size:4.55px;line-height:5.46px;color:#222;text-align:right;letter-spacing:-0.125px;">18.30</div>
<div class="t" style="left:338px;top:208.47px;font-size:4.55px;line-height:5.46px;color:#222;letter-spacing:-0.125px;">-40.00</div>
<div class="a btn" style="left:303.3px;top:216.3px;width:23.30000000000001px;height:8.099999999999994px;background:#e1e1e1;border:1px solid #c6c6c6;font-size:4.55px;line-height:6.099999999999994px;padding-top:1px;letter-spacing:-0.125px;">Restore</div>
<div class="a btn" style="left:329.5px;top:216.3px;width:15.100000000000023px;height:8.099999999999994px;background:#e1e1e1;border:1px solid #c6c6c6;font-size:4.55px;line-height:6.099999999999994px;padding-top:1px;letter-spacing:-0.125px;">Set</div>
<div class="a" style="left:294.8px;top:230.8px;width:60.0px;height:25.19999999999999px;border:1px solid #b0b0b0;box-sizing:border-box;border-radius:1.5px"></div>
<div class="t" style="left:298.3px;top:234.12px;font-size:4.8px;line-height:5.76px;color:#222;">Zoom/Pan</div>
<div class="t" style="left:326.5px;top:233.46px;font-size:6.4px;line-height:7.68px;color:#3a92da;font-weight:bold;">?</div>
<svg style="left:346.3px;top:233.5px" width="5.6" height="5.6" viewBox="0 0 5.6 5.6"><rect x="0.4" y="0.4" width="4.8" height="4.8" fill="#f8f8f8" stroke="#9a9a9a" stroke-width="0.7"/><path d="M1.5 2.8 H4.1" stroke="#555" stroke-width="0.6"/></svg>
<svg style="left:299.7px;top:244.3px" width="6.5" height="6.5" viewBox="0 0 10 10"><circle cx="4" cy="4" r="3" fill="#c8e0f8" stroke="#3a70b8" stroke-width="1.1"/><path d="M6 6L9.2 9.2" stroke="#d08020" stroke-width="1.8"/><path d="M2.5 4H5.5M4 2.5V5.5" stroke="#244" stroke-width="0.7"/></svg>
<svg style="left:309px;top:244.3px" width="6.5" height="6.5" viewBox="0 0 10 10"><circle cx="4" cy="4" r="3" fill="#c8e0f8" stroke="#3a70b8" stroke-width="1.1"/><path d="M6 6L9.2 9.2" stroke="#d08020" stroke-width="1.8"/><path d="M2.5 4H5.5" stroke="#244" stroke-width="0.7"/></svg>
<svg style="left:318px;top:244.5px" width="6" height="6" viewBox="0 0 10 10"><g fill="#2a80e0"><rect x="0" y="0" width="3.5" height="3.5"/><rect x="6.5" y="0" width="3.5" height="3.5"/><rect x="0" y="6.5" width="3.5" height="3.5"/><rect x="6.5" y="6.5" width="3.5" height="3.5"/></g></svg>
<div class="t" style="left:329.5px;top:245.47px;font-size:4.55px;line-height:5.46px;color:#222;letter-spacing:-0.075px;">1x</div>
<div class="a" style="left:338.5px;top:244.5px;width:4.5px;height:6px;background:radial-gradient(#c89a50,#8a6030);border-radius:40% 40% 35% 35%"></div>
<div class="a" style="left:345.5px;top:244.0px;width:0.6px;height:7px;background:#ccc"></div>
<div class="a" style="left:294.8px;top:258.2px;width:60.0px;height:66.60000000000002px;border:1px solid #b0b0b0;box-sizing:border-box;border-radius:1.5px"></div>
<div class="t" style="left:298.3px;top:261.52px;font-size:4.8px;line-height:5.76px;color:#222;">Picture Overlay</div>
<div class="t" style="left:336.5px;top:260.86px;font-size:6.4px;line-height:7.68px;color:#3a92da;font-weight:bold;">?</div>
<svg style="left:346.3px;top:260.9px" width="5.6" height="5.6" viewBox="0 0 5.6 5.6"><rect x="0.4" y="0.4" width="4.8" height="4.8" fill="#f8f8f8" stroke="#9a9a9a" stroke-width="0.7"/><path d="M1.5 2.8 H4.1" stroke="#555" stroke-width="0.6"/></svg>
<div class="a" style="left:300.5px;top:270.0px;width:24.49999999999998px;height:18.400000000000013px;background:#d8d8d8;border:0.5px solid #bbb;box-sizing:border-box"></div>
<div class="a" style="left:301.3px;top:270.8px;width:22.899999999999977px;height:16.80000000000001px;background:radial-gradient(ellipse at 50% 50%,#0f7a1e,#085a14);border:0.5px solid #053a0a;box-sizing:border-box"></div>
<div class="t" style="left:262.75px;width:100px;text-align:center;top:276.12px;font-size:6.8px;line-height:8.16px;color:#1f8a30;font-weight:bold;letter-spacing:0.3px;">ON</div>
<svg style="left:328.3px;top:273.55px" width="5.5" height="5.5" viewBox="0 0 5.5 5.5"><circle cx="2.75" cy="2.75" r="2.4" fill="#fff" stroke="#6a6a6a" stroke-width="0.7"/></svg>
<div class="t" style="left:335px;top:274.27px;font-size:4.55px;line-height:5.46px;color:#222;letter-spacing:-0.075px;">Opacity</div>
<svg style="left:328.3px;top:280.55px" width="5.5" height="5.5" viewBox="0 0 5.5 5.5"><circle cx="2.75" cy="2.75" r="2.4" fill="#fff" stroke="#6a6a6a" stroke-width="0.7"/><circle cx="2.75" cy="2.75" r="1.3" fill="#222"/></svg>
<div class="t" style="left:335px;top:281.27px;font-size:4.55px;line-height:5.46px;color:#222;letter-spacing:-0.075px;">Merge</div>
<div class="t" style="left:274.3px;width:100px;text-align:center;top:292.27px;font-size:4.55px;line-height:5.46px;color:#222;letter-spacing:-0.125px;">50%</div>
<svg style="left:302px;top:298.5px" width="46" height="1" viewBox="0 0 46 1"><g fill="#aaa"><rect x="0.0" y="0" width="0.5" height="0.5"/><rect x="4.5" y="0" width="0.5" height="0.5"/><rect x="9.0" y="0" width="0.5" height="0.5"/><rect x="13.5" y="0" width="0.5" height="0.5"/><rect x="18.0" y="0" width="0.5" height="0.5"/><rect x="22.5" y="0" width="0.5" height="0.5"/><rect x="27.0" y="0" width="0.5" height="0.5"/><rect x="31.5" y="0" width="0.5" height="0.5"/><rect x="36.0" y="0" width="0.5" height="0.5"/><rect x="40.5" y="0" width="0.5" height="0.5"/><rect x="45.0" y="0" width="0.5" height="0.5"/></g></svg>
<div class="a" style="left:302px;top:303px;width:46px;height:1px;background:#e0e0e0;border:0.4px solid #ccc;box-sizing:border-box;"></div>
<svg style="left:322.5px;top:299.5px" width="4" height="7" viewBox="0 0 4 7"><path d="M0 0H4V5L2 7L0 5Z" fill="#0a6fd0"/></svg>
<div class="a btn" style="left:301.3px;top:311.9px;width:47.5px;height:8.400000000000034px;background:#e1e1e1;border:1px solid #c6c6c6;font-size:4.55px;line-height:6.400000000000034px;padding-top:1px;letter-spacing:-0.075px;">Thermal Overlay</div>
<div class="a" style="left:294.8px;top:328.3px;width:60.0px;height:61.5px;border:1px solid #b0b0b0;box-sizing:border-box;border-radius:1.5px"></div>
<div class="t" style="left:298.3px;top:331.62px;font-size:4.8px;line-height:5.76px;color:#222;">Image Subtract</div>
<div class="t" style="left:336.5px;top:330.96px;font-size:6.4px;line-height:7.68px;color:#3a92da;font-weight:bold;">?</div>
<svg style="left:346.3px;top:331.0px" width="5.6" height="5.6" viewBox="0 0 5.6 5.6"><rect x="0.4" y="0.4" width="4.8" height="4.8" fill="#f8f8f8" stroke="#9a9a9a" stroke-width="0.7"/><path d="M1.5 2.8 H4.1" stroke="#555" stroke-width="0.6"/></svg>
<div class="a" style="left:312.5px;top:339.9px;width:24.699999999999967px;height:18.29999999999999px;background:#d8d8d8;border:0.5px solid #bbb;box-sizing:border-box"></div>
<div class="a" style="left:313.3px;top:340.7px;width:23.099999999999966px;height:16.69999999999999px;background:radial-gradient(ellipse at 50% 50%,#0f7a1e,#085a14);border:0.5px solid #053a0a;box-sizing:border-box"></div>
<div class="t" style="left:274.85px;width:100px;text-align:center;top:345.97px;font-size:6.8px;line-height:8.16px;color:#1f8a30;font-weight:bold;letter-spacing:0.3px;">ON</div>
<div class="a btn" style="left:305.2px;top:364.2px;width:39.400000000000034px;height:8.400000000000034px;background:#e1e1e1;border:1px solid #c6c6c6;font-size:4.55px;line-height:6.400000000000034px;padding-top:1px;letter-spacing:-0.075px;">Set Reference</div>
<div class="a btn" style="left:305.2px;top:375.8px;width:39.400000000000034px;height:8.599999999999966px;background:#e1e1e1;border:1px solid #c6c6c6;font-size:4.55px;line-height:6.599999999999966px;padding-top:1px;letter-spacing:-0.075px;">Zero Reference</div>
<div class="a" style="left:368.4px;top:38.9px;width:353.20000000000005px;height:326.90000000000003px;background:#f0f0f0;border:0.6px solid #c8c8c8;box-sizing:border-box;box-shadow:0 1px 5px rgba(0,0,0,0.28)"></div>
<div class="a" style="left:369.0px;top:39.5px;width:352.00000000000006px;height:12.3px;background:#fff"></div>
<div class="t" style="left:372.9px;top:43.41px;font-size:4.9px;line-height:5.88px;color:#9a9a9a;">Lock-in Thermography</div>
<div class="a" style="left:713.6px;top:41.9px;width:7.4px;height:7.4px;background:#ececec"></div>
<div class="a" style="left:369px;top:51.2px;width:352px;height:9.0px;background:#f8f8f8;"></div>
<div class="t" style="left:374px;top:53.88px;font-size:4.7px;line-height:5.64px;color:#222;">File</div>
<div class="t" style="left:389.5px;top:53.88px;font-size:4.7px;line-height:5.64px;color:#222;">Setup</div>
<div class="t" style="left:408.5px;top:53.88px;font-size:4.7px;line-height:5.64px;color:#222;">Show</div>
<div class="t" style="left:427.5px;top:53.88px;font-size:4.7px;line-height:5.64px;color:#222;">Transfer</div>
<div class="t" style="left:451px;top:53.88px;font-size:4.7px;line-height:5.64px;color:#222;">Tools</div>
<div class="t" style="left:470px;top:53.88px;font-size:4.7px;line-height:5.64px;color:#222;">Help</div>
<div class="t" style="right:306.5px;top:53.86px;font-size:5.07px;line-height:6.08px;color:#1a1a1a;text-align:right;font-family:"Liberation Serif",serif;font-weight:bold;">Optotherm Sentris Lock-in Thermography</div>
<div class="t" style="left:373.5px;top:63.74px;font-size:4.6px;line-height:5.52px;color:#222;">File</div>
<div class="t" style="left:385.5px;top:62.66px;font-size:6.4px;line-height:7.68px;color:#3a92da;font-weight:bold;">?</div>
<div class="a" style="left:392.5px;top:63.3px;width:6px;height:5px;background:linear-gradient(#f8d870,#d8a030);border-radius:0.5px"></div>
<div class="a" style="left:402px;top:63.3px;width:5px;height:5px;background:#3050b0"></div><div class="a" style="left:403.2px;top:63.3px;width:2.6px;height:2px;background:#c8d8f0"></div>
<div class="a" style="left:413px;top:62.8px;width:0.6000000000000227px;height:6.0px;background:#c8c8c8;"></div>
<div class="t" style="left:421px;top:63.74px;font-size:4.6px;line-height:5.52px;color:#222;">Setup</div>
<div class="t" style="left:437px;top:62.66px;font-size:6.4px;line-height:7.68px;color:#3a92da;font-weight:bold;">?</div>
<div class="a" style="left:443.8px;top:61.8px;width:9px;height:8px;background:#cfe4f8;border:0.8px solid #5aa0e8;box-sizing:border-box"></div>
<div class="a" style="left:445.5px;top:63.5px;width:5.6px;height:4.5px;background:linear-gradient(#5aa0e6,#2a6cc0)"></div>
<div class="a" style="left:455.5px;top:62.8px;width:3px;height:6px;border:0.6px solid #777;border-radius:1px;background:linear-gradient(#eee,#9c9)"></div>
<div class="a" style="left:462px;top:61.8px;width:9px;height:8px;background:#cfe4f8;border:0.8px solid #5aa0e8;box-sizing:border-box"></div>
<svg style="left:463.5px;top:63.3px" width="6" height="5" viewBox="0 0 12 10"><path d="M1 9V1H3V9M5 9V1H7V9M9 9V1H11V9" stroke="#e03030" stroke-width="1.2" fill="none"/></svg>
<svg style="left:472.5px;top:62.8px" width="6" height="6" viewBox="0 0 12 12"><path d="M1 1L11 11M11 1L1 11" stroke="#2a6ac8" stroke-width="1.6"/><path d="M1 11L4 8" stroke="#d03030" stroke-width="1.6"/></svg>
<svg style="left:481.5px;top:62.8px" width="7" height="6" viewBox="0 0 14 12"><rect x="0" y="4" width="8" height="8" fill="#3a8ad8"/><path d="M6 6L12 0M8 0H12V4" stroke="#30a030" stroke-width="1.8" fill="none"/></svg>
<div class="a" style="left:495px;top:62.8px;width:0.6000000000000227px;height:6.0px;background:#c8c8c8;"></div>
<div class="t" style="left:502px;top:63.74px;font-size:4.6px;line-height:5.52px;color:#222;">Tools</div>
<div class="a" style="left:515px;top:63.3px;width:6px;height:5px;background:linear-gradient(#a8c8e8 40%,#60a060 60%);border-radius:0.6px"></div>
<div class="a" style="left:528.5px;top:62.8px;width:0.6000000000000227px;height:6.0px;background:#c8c8c8;"></div>
<div class="t" style="left:535px;top:63.74px;font-size:4.6px;line-height:5.52px;color:#222;">Zoom</div>
<div class="t" style="left:553.5px;top:62.66px;font-size:6.4px;line-height:7.68px;color:#3a92da;font-weight:bold;">?</div>
<svg style="left:559.5px;top:62.5px" width="6.5" height="6.5" viewBox="0 0 10 10"><circle cx="4" cy="4" r="3" fill="#c8e0f8" stroke="#3a70b8" stroke-width="1.1"/><path d="M6 6L9.2 9.2" stroke="#d08020" stroke-width="1.8"/></svg>
<svg style="left:568.5px;top:62.5px" width="6.5" height="6.5" viewBox="0 0 10 10"><circle cx="4" cy="4" r="3" fill="#c8e0f8" stroke="#3a70b8" stroke-width="1.1"/><path d="M6 6L9.2 9.2" stroke="#d08020" stroke-width="1.8"/></svg>
<svg style="left:578px;top:62.599999999999994px" width="6.5" height="6.5" viewBox="0 0 10 10"><g fill="#2a80e0"><rect x="0" y="0" width="3.6" height="3.6"/><rect x="6.4" y="0" width="3.6" height="3.6"/><rect x="0" y="6.4" width="3.6" height="3.6"/><rect x="6.4" y="6.4" width="3.6" height="3.6"/></g></svg>
<div class="t" style="left:589.5px;top:64.17px;font-size:4.55px;line-height:5.46px;color:#222;letter-spacing:-0.025px;">1x</div>
<div class="a" style="left:600px;top:62.599999999999994px;width:4.5px;height:6.2px;background:radial-gradient(#c89a50,#8a6030);border-radius:40% 40% 35% 35%"></div>
<svg style="left:372.3px;top:73.5px;overflow:hidden" width="255.7" height="189.5" viewBox="372.3 73.5 255.7 189.5"><defs><filter id="lb" x="-10%" y="-10%" width="120%" height="120%" color-interpolation-filters="sRGB"><feGaussianBlur stdDeviation="2.4"/></filter><filter id="lbb" x="-10%" y="-50%" width="120%" height="200%" color-interpolation-filters="sRGB"><feGaussianBlur stdDeviation="3.4"/></filter><filter id="lb1" x="-20%" y="-20%" width="140%" height="140%" color-interpolation-filters="sRGB"><feGaussianBlur stdDeviation="1.1"/></filter><filter id="lb2" x="-10%" y="-10%" width="120%" height="120%" color-interpolation-filters="sRGB"><feGaussianBlur stdDeviation="0.45"/></filter><linearGradient id="lg" x1="0" y1="0" x2="1" y2="0"><stop offset="0" stop-color="#8e8e8e"/><stop offset="0.5" stop-color="#8a8a8a"/><stop offset="1" stop-color="#888"/></linearGradient></defs><rect x="372.3" y="73.5" width="255.7" height="189.5" fill="url(#lg)"/><rect x="372.3" y="73.5" width="1.2" height="189.5" fill="#c8c8c8"/><g filter="url(#lbb)"><path d="M390.3 124.2H440.8M567.5 125.8H621.5" stroke="#1c1c1c" stroke-width="7.6" stroke-linecap="round"/><path d="M390.3 142.2H440.8M567.5 143.7H621.5" stroke="#1c1c1c" stroke-width="7.6" stroke-linecap="round"/><path d="M390.3 160.2H440.8M567.5 161.3H621.5" stroke="#1c1c1c" stroke-width="7.6" stroke-linecap="round"/><path d="M390.3 178.1H440.8M567.5 179H621.5" stroke="#1c1c1c" stroke-width="7.6" stroke-linecap="round"/><path d="M390.3 196.1H440.8M567.5 196.8H621.5" stroke="#1c1c1c" stroke-width="7.6" stroke-linecap="round"/><path d="M390.3 214.1H440.8M567.5 214.8H621.5" stroke="#1c1c1c" stroke-width="7.6" stroke-linecap="round"/></g><g filter="url(#lb)"><path d="M460.3 55V103L466 111V116" stroke="#3c3c3c" stroke-width="8.5" fill="none"/><path d="M478 55V103L478.7 111V116" stroke="#3c3c3c" stroke-width="8.5" fill="none"/><path d="M494.6 55V103L492 111V116" stroke="#3c3c3c" stroke-width="8.5" fill="none"/><path d="M505.2 106V116" stroke="#404040" stroke-width="7" stroke-linecap="round" fill="none"/><path d="M512.3 55V103L518.2 111V116" stroke="#3c3c3c" stroke-width="8.5" fill="none"/><path d="M531.4 55V103L531.4 111V116" stroke="#3c3c3c" stroke-width="8.5" fill="none"/><path d="M549 55V103L544.2 111V116" stroke="#3c3c3c" stroke-width="8.5" fill="none"/><path d="M457.8 280V232L466 222V216" stroke="#4c4c4c" stroke-width="8.5" fill="none"/><path d="M476.8 280V232L478.7 222V216" stroke="#4c4c4c" stroke-width="8.5" fill="none"/><path d="M493.3 280V232L492 222V216" stroke="#4c4c4c" stroke-width="8.5" fill="none"/><path d="M511 280V232L505.2 222V216" stroke="#4c4c4c" stroke-width="8.5" fill="none"/><path d="M511 280V232L518.2 222V216" stroke="#4c4c4c" stroke-width="8.5" fill="none"/><path d="M528.8 280V232L531.4 222V216" stroke="#4c4c4c" stroke-width="8.5" fill="none"/><path d="M548 280V232L544.2 222V216" stroke="#4c4c4c" stroke-width="8.5" fill="none"/></g><g filter="url(#lb1)"><path d="M466 111V121" stroke="#303030" stroke-width="4.2" stroke-linecap="round"/><path d="M466 216V224" stroke="#3a3a3a" stroke-width="3.6" stroke-linecap="round"/><path d="M478.7 111V121" stroke="#303030" stroke-width="4.2" stroke-linecap="round"/><path d="M478.7 216V224" stroke="#3a3a3a" stroke-width="3.6" stroke-linecap="round"/><path d="M492 111V121" stroke="#303030" stroke-width="4.2" stroke-linecap="round"/><path d="M492 216V224" stroke="#3a3a3a" stroke-width="3.6" stroke-linecap="round"/><path d="M505.2 111V121" stroke="#303030" stroke-width="4.2" stroke-linecap="round"/><path d="M505.2 216V224" stroke="#3a3a3a" stroke-width="3.6" stroke-linecap="round"/><path d="M518.2 111V121" stroke="#303030" stroke-width="4.2" stroke-linecap="round"/><path d="M518.2 216V224" stroke="#3a3a3a" stroke-width="3.6" stroke-linecap="round"/><path d="M531.4 111V121" stroke="#303030" stroke-width="4.2" stroke-linecap="round"/><path d="M531.4 216V224" stroke="#3a3a3a" stroke-width="3.6" stroke-linecap="round"/><path d="M544.2 111V121" stroke="#303030" stroke-width="4.2" stroke-linecap="round"/><path d="M544.2 216V224" stroke="#3a3a3a" stroke-width="3.6" stroke-linecap="round"/></g><rect x="453.5" y="121.6" width="102.5" height="93.6" fill="#979797"/><path d="M477.5 171.7h.8v.8h-.8zM490.9 177.2h.8v.8h-.8zM516.7 127.6h.8v.8h-.8zM454.8 198.6h.8v.8h-.8zM479.7 143.2h.8v.8h-.8zM554.1 164.9h.8v.8h-.8zM538.0 165.4h.8v.8h-.8zM518.0 135.5h.8v.8h-.8zM517.6 201.5h.8v.8h-.8zM506.3 189.8h.8v.8h-.8zM521.3 127.5h.8v.8h-.8zM530.1 176.0h.8v.8h-.8zM483.9 124.5h.8v.8h-.8zM540.9 165.1h.8v.8h-.8zM526.1 202.5h.8v.8h-.8zM525.6 206.3h.8v.8h-.8zM493.4 195.3h.8v.8h-.8zM498.4 207.7h.8v.8h-.8zM542.3 130.6h.8v.8h-.8zM467.2 141.6h.8v.8h-.8zM551.0 161.7h.8v.8h-.8zM516.8 149.3h.8v.8h-.8zM504.7 157.1h.8v.8h-.8zM488.9 175.4h.8v.8h-.8zM512.5 204.8h.8v.8h-.8zM522.4 207.1h.8v.8h-.8zM540.0 212.8h.8v.8h-.8zM521.3 136.6h.8v.8h-.8zM540.4 210.3h.8v.8h-.8zM544.9 174.0h.8v.8h-.8zM525.6 141.0h.8v.8h-.8zM537.5 174.4h.8v.8h-.8zM482.3 127.4h.8v.8h-.8zM539.7 212.7h.8v.8h-.8zM462.4 195.3h.8v.8h-.8zM495.0 135.5h.8v.8h-.8zM483.2 192.3h.8v.8h-.8zM541.6 125.7h.8v.8h-.8zM515.6 125.7h.8v.8h-.8zM526.1 152.0h.8v.8h-.8zM542.5 211.8h.8v.8h-.8zM504.5 213.5h.8v.8h-.8zM484.8 128.7h.8v.8h-.8zM514.1 124.5h.8v.8h-.8zM473.4 159.1h.8v.8h-.8zM515.2 136.0h.8v.8h-.8zM457.8 201.4h.8v.8h-.8zM485.2 209.8h.8v.8h-.8zM544.1 156.4h.8v.8h-.8zM500.0 169.4h.8v.8h-.8zM518.5 176.4h.8v.8h-.8zM510.0 178.7h.8v.8h-.8zM548.5 168.2h.8v.8h-.8zM497.1 187.9h.8v.8h-.8zM477.5 149.3h.8v.8h-.8zM552.3 169.5h.8v.8h-.8zM508.9 122.7h.8v.8h-.8zM495.4 175.0h.8v.8h-.8zM455.5 178.3h.8v.8h-.8zM517.4 127.1h.8v.8h-.8zM516.9 164.5h.8v.8h-.8zM522.1 154.0h.8v.8h-.8zM524.9 189.5h.8v.8h-.8zM455.7 127.2h.8v.8h-.8zM521.8 210.2h.8v.8h-.8zM478.9 163.6h.8v.8h-.8zM513.4 151.0h.8v.8h-.8zM490.3 150.4h.8v.8h-.8zM490.8 176.4h.8v.8h-.8zM483.8 156.3h.8v.8h-.8zM531.5 124.1h.8v.8h-.8zM511.0 189.2h.8v.8h-.8zM484.8 142.1h.8v.8h-.8zM534.7 143.6h.8v.8h-.8zM472.4 161.6h.8v.8h-.8zM524.0 131.0h.8v.8h-.8zM486.0 152.3h.8v.8h-.8zM537.7 161.9h.8v.8h-.8zM539.9 137.2h.8v.8h-.8zM487.5 181.4h.8v.8h-.8zM542.9 163.1h.8v.8h-.8zM476.2 132.7h.8v.8h-.8zM507.0 139.2h.8v.8h-.8zM535.0 198.7h.8v.8h-.8zM472.0 147.2h.8v.8h-.8zM535.0 180.7h.8v.8h-.8zM534.9 153.4h.8v.8h-.8zM466.6 148.5h.8v.8h-.8zM533.7 146.5h.8v.8h-.8zM488.5 160.0h.8v.8h-.8zM495.9 159.3h.8v.8h-.8zM546.5 136.0h.8v.8h-.8zM454.0 208.4h.8v.8h-.8zM542.4 212.4h.8v.8h-.8zM497.4 209.0h.8v.8h-.8zM547.2 142.0h.8v.8h-.8zM528.8 198.6h.8v.8h-.8zM520.5 169.3h.8v.8h-.8zM482.7 153.0h.8v.8h-.8zM476.5 127.9h.8v.8h-.8zM513.0 148.0h.8v.8h-.8zM535.3 125.7h.8v.8h-.8zM544.8 185.4h.8v.8h-.8zM546.8 204.1h.8v.8h-.8zM544.4 174.7h.8v.8h-.8zM454.8 190.2h.8v.8h-.8zM470.9 149.2h.8v.8h-.8zM520.5 169.9h.8v.8h-.8zM495.3 208.0h.8v.8h-.8zM515.3 153.0h.8v.8h-.8zM479.0 200.9h.8v.8h-.8zM501.7 193.6h.8v.8h-.8zM489.0 139.8h.8v.8h-.8zM507.5 196.7h.8v.8h-.8zM470.8 194.4h.8v.8h-.8zM546.6 195.8h.8v.8h-.8zM536.7 122.3h.8v.8h-.8zM517.0 201.0h.8v.8h-.8zM458.5 146.6h.8v.8h-.8zM480.6 170.1h.8v.8h-.8zM496.2 165.1h.8v.8h-.8zM531.9 121.8h.8v.8h-.8zM459.0 133.3h.8v.8h-.8zM466.1 127.9h.8v.8h-.8zM551.9 200.2h.8v.8h-.8zM462.2 167.8h.8v.8h-.8zM485.4 150.5h.8v.8h-.8zM489.0 181.1h.8v.8h-.8zM512.7 154.8h.8v.8h-.8zM472.8 151.8h.8v.8h-.8z" fill="#8a8a8a"/><path d="M466.0 172.7h.8v.8h-.8zM525.8 156.6h.8v.8h-.8zM461.6 138.0h.8v.8h-.8zM491.2 177.2h.8v.8h-.8zM532.5 156.6h.8v.8h-.8zM534.4 178.9h.8v.8h-.8zM497.1 155.9h.8v.8h-.8zM503.6 186.3h.8v.8h-.8zM496.0 185.5h.8v.8h-.8zM500.0 144.1h.8v.8h-.8zM507.6 185.6h.8v.8h-.8zM460.7 160.7h.8v.8h-.8zM496.5 202.5h.8v.8h-.8zM548.1 156.0h.8v.8h-.8zM544.2 194.4h.8v.8h-.8zM480.0 164.3h.8v.8h-.8zM465.9 196.4h.8v.8h-.8zM520.4 203.2h.8v.8h-.8zM533.5 183.0h.8v.8h-.8zM527.6 173.5h.8v.8h-.8zM463.9 175.7h.8v.8h-.8zM454.0 134.8h.8v.8h-.8zM531.7 125.7h.8v.8h-.8zM462.8 130.7h.8v.8h-.8zM542.4 138.1h.8v.8h-.8zM455.9 199.0h.8v.8h-.8zM465.7 199.2h.8v.8h-.8zM521.5 198.5h.8v.8h-.8zM549.7 174.9h.8v.8h-.8zM534.2 124.9h.8v.8h-.8zM531.0 168.6h.8v.8h-.8zM525.7 131.4h.8v.8h-.8zM529.1 207.6h.8v.8h-.8zM459.7 151.4h.8v.8h-.8zM510.5 197.8h.8v.8h-.8zM478.0 138.1h.8v.8h-.8zM478.7 178.3h.8v.8h-.8zM529.6 157.8h.8v.8h-.8zM490.6 158.1h.8v.8h-.8zM488.9 160.1h.8v.8h-.8zM461.9 167.6h.8v.8h-.8zM551.8 159.6h.8v.8h-.8zM529.0 136.4h.8v.8h-.8zM523.3 191.2h.8v.8h-.8zM521.6 169.2h.8v.8h-.8zM502.4 180.8h.8v.8h-.8zM544.1 135.3h.8v.8h-.8zM463.2 190.4h.8v.8h-.8zM546.1 169.2h.8v.8h-.8zM498.2 187.7h.8v.8h-.8zM472.3 146.2h.8v.8h-.8zM473.6 175.5h.8v.8h-.8zM485.3 143.0h.8v.8h-.8zM523.3 209.3h.8v.8h-.8zM483.4 186.5h.8v.8h-.8zM495.2 200.1h.8v.8h-.8zM512.5 146.2h.8v.8h-.8zM475.5 123.7h.8v.8h-.8zM501.9 156.8h.8v.8h-.8zM470.9 154.8h.8v.8h-.8zM486.0 192.8h.8v.8h-.8zM468.0 212.8h.8v.8h-.8zM501.9 176.7h.8v.8h-.8zM500.8 198.4h.8v.8h-.8zM536.5 172.9h.8v.8h-.8zM502.1 187.9h.8v.8h-.8zM540.0 158.4h.8v.8h-.8zM527.6 209.9h.8v.8h-.8zM500.7 142.7h.8v.8h-.8zM477.2 187.6h.8v.8h-.8zM521.7 209.8h.8v.8h-.8zM539.7 143.9h.8v.8h-.8zM472.7 145.4h.8v.8h-.8zM472.4 186.4h.8v.8h-.8zM540.2 204.4h.8v.8h-.8zM479.3 201.2h.8v.8h-.8zM485.2 160.5h.8v.8h-.8zM527.1 129.5h.8v.8h-.8zM462.9 198.3h.8v.8h-.8zM483.0 154.4h.8v.8h-.8zM512.1 183.7h.8v.8h-.8zM454.2 152.4h.8v.8h-.8zM497.6 166.3h.8v.8h-.8zM474.7 175.4h.8v.8h-.8zM550.0 157.6h.8v.8h-.8zM508.5 132.6h.8v.8h-.8zM481.3 182.8h.8v.8h-.8zM464.9 203.2h.8v.8h-.8zM545.3 130.5h.8v.8h-.8zM548.6 156.0h.8v.8h-.8zM531.5 191.3h.8v.8h-.8zM483.3 183.8h.8v.8h-.8zM519.6 195.8h.8v.8h-.8zM480.3 191.0h.8v.8h-.8zM550.6 183.5h.8v.8h-.8zM507.7 132.0h.8v.8h-.8zM503.4 154.0h.8v.8h-.8zM526.0 184.0h.8v.8h-.8zM510.7 138.3h.8v.8h-.8zM518.7 179.6h.8v.8h-.8zM471.6 203.5h.8v.8h-.8zM519.7 132.9h.8v.8h-.8zM547.6 134.6h.8v.8h-.8zM487.0 187.9h.8v.8h-.8zM513.8 172.7h.8v.8h-.8zM518.9 163.7h.8v.8h-.8zM485.1 137.8h.8v.8h-.8zM460.4 187.5h.8v.8h-.8zM529.7 171.6h.8v.8h-.8zM528.2 154.6h.8v.8h-.8zM480.4 156.9h.8v.8h-.8zM541.6 125.5h.8v.8h-.8zM504.5 144.3h.8v.8h-.8zM531.2 154.2h.8v.8h-.8zM487.1 158.7h.8v.8h-.8zM508.2 192.6h.8v.8h-.8zM489.1 199.5h.8v.8h-.8zM464.8 146.5h.8v.8h-.8zM463.6 132.0h.8v.8h-.8zM532.2 188.5h.8v.8h-.8zM472.2 139.0h.8v.8h-.8zM495.6 190.0h.8v.8h-.8zM535.9 190.5h.8v.8h-.8zM513.3 135.1h.8v.8h-.8zM493.7 139.4h.8v.8h-.8zM506.8 173.9h.8v.8h-.8zM473.9 144.6h.8v.8h-.8zM532.4 124.4h.8v.8h-.8zM534.6 203.6h.8v.8h-.8zM549.4 156.8h.8v.8h-.8z" fill="#a4a4a4"/><g filter="url(#lb2)"><ellipse cx="478.7" cy="130.6" rx="4.4" ry="2.8" fill="#383838"/><ellipse cx="492.3" cy="130.6" rx="4.4" ry="2.8" fill="#383838"/><ellipse cx="504.6" cy="130.6" rx="4.4" ry="2.8" fill="#383838"/><ellipse cx="518.3" cy="130.6" rx="4.4" ry="2.8" fill="#383838"/><ellipse cx="531.1" cy="130.6" rx="4.4" ry="2.8" fill="#383838"/><ellipse cx="478.7" cy="205.6" rx="4.4" ry="2.8" fill="#383838"/><ellipse cx="504.6" cy="205.6" rx="4.4" ry="2.8" fill="#383838"/><ellipse cx="518.3" cy="205.6" rx="4.4" ry="2.8" fill="#383838"/><ellipse cx="531.1" cy="205.6" rx="4.4" ry="2.8" fill="#383838"/><path d="M488 203H497V204M488 206H497" stroke="#555" stroke-width="0.8" fill="none"/><g transform="rotate(45 468 137)"><ellipse cx="468" cy="137" rx="6.5" ry="4.2" fill="#363636"/></g><g transform="rotate(-45 541.5 139)"><ellipse cx="541.5" cy="139" rx="5" ry="3.6" fill="#383838"/></g><g transform="rotate(-45 467.5 200.5)"><ellipse cx="467.5" cy="200.5" rx="6.5" ry="4.8" fill="#363636"/></g><g transform="rotate(45 541.5 199.5)"><ellipse cx="541.5" cy="199.5" rx="5.5" ry="4.2" fill="#383838"/></g><path d="M462 150L468 152L469 156L464 158L463 166L466 172L462 175L457 174L460 166L460 158L457 156Z" fill="#3a3a3a"/><path d="M464 176L465 181" stroke="#555" stroke-width="1"/><path d="M541 149.5L549.5 148.5L549.8 187.5L541.5 187L541.5 183.5L545.5 182L545.8 155L541.2 153.5Z" fill="#363636"/></g><rect x="487" y="149.6" width="37" height="39.4" fill="#a0a0a0" stroke="#777" stroke-width="0.5"/><g fill="#3c3c3c"><rect x="489.0" y="151.0" width="1.4" height="1.4"/><rect x="491.6" y="151.0" width="1.4" height="1.4"/><rect x="494.2" y="151.0" width="1.4" height="1.4"/><rect x="496.8" y="151.0" width="1.4" height="1.4"/><rect x="499.4" y="151.0" width="1.4" height="1.4"/><rect x="502.0" y="151.0" width="1.4" height="1.4"/><rect x="489.0" y="187.2" width="1.4" height="1.4"/><rect x="491.6" y="187.2" width="1.4" height="1.4"/><rect x="494.2" y="187.2" width="1.4" height="1.4"/><rect x="496.8" y="187.2" width="1.4" height="1.4"/><rect x="499.4" y="187.2" width="1.4" height="1.4"/><rect x="502.0" y="187.2" width="1.4" height="1.4"/><rect x="504.6" y="187.2" width="1.4" height="1.4"/><rect x="507.2" y="187.2" width="1.4" height="1.4"/><rect x="509.8" y="187.2" width="1.4" height="1.4"/><rect x="512.4" y="187.2" width="1.4" height="1.4"/><rect x="515.0" y="187.2" width="1.4" height="1.4"/><rect x="517.6" y="187.2" width="1.4" height="1.4"/><rect x="520.2" y="187.2" width="1.4" height="1.4"/><rect x="522.8" y="187.2" width="1.4" height="1.4"/><rect x="506.0" y="152.0" width="1.4" height="1.4"/><rect x="509.0" y="152.0" width="1.4" height="1.4"/><rect x="512.0" y="152.0" width="1.4" height="1.4"/><rect x="515.0" y="152.0" width="1.4" height="1.4"/><rect x="506.0" y="155.0" width="1.4" height="1.4"/><rect x="512.0" y="156.0" width="1.4" height="1.4"/><rect x="515.0" y="158.0" width="1.4" height="1.4"/><rect x="509.0" y="161.0" width="1.4" height="1.4"/><rect x="515.0" y="162.0" width="1.4" height="1.4"/><rect x="518.0" y="165.0" width="1.4" height="1.4"/><rect x="497.0" y="166.0" width="1.4" height="1.4"/><rect x="501.0" y="166.0" width="1.4" height="1.4"/><rect x="503.0" y="170.0" width="1.4" height="1.4"/><rect x="506.0" y="173.0" width="1.4" height="1.4"/><rect x="517.0" y="175.0" width="1.4" height="1.4"/><rect x="519.0" y="178.0" width="1.4" height="1.4"/><rect x="516.0" y="182.0" width="1.4" height="1.4"/><rect x="508.0" y="180.0" width="1.4" height="1.4"/><rect x="498.0" y="171.0" width="1.4" height="1.4"/><rect x="520.0" y="153.0" width="1.4" height="1.4"/><rect x="520.0" y="157.0" width="1.4" height="1.4"/></g><circle cx="493.8" cy="189.2" r="1.5" fill="#d0e020"/><circle cx="493.5" cy="189.2" r="0.8" fill="#30c030"/><path d="M493 190L485 235M496 190L492 240" stroke="#b0b0b0" stroke-width="0.4" fill="none"/></svg>
<div class="a" style="left:630.3px;top:72.8px;width:7.2px;height:190.6px;border:0.5px solid #aaa;box-sizing:border-box;background:#ccc"></div>
<div class="a" style="left:630.9px;top:73.4px;width:6px;height:189.4px;background:linear-gradient(#ffffff 0.0%,#ffffff 0.6%,#ffc0e0 2.4%,#ff0090 4.8%,#a00000 10.3%,#ff8000 16.2%,#ffff00 20.4%,#00f000 25.7%,#00a000 30.9%,#a0a0a0 36.0%,#80c8c8 41.5%,#00ffff 48.4%,#0090b0 57.9%,#0000ff 69.0%,#000080 80.6%,#8000ff 90.6%,#100010 100.0%)"></div>
<svg style="left:637.4px;top:90.6px" width="3" height="175" viewBox="0 0 3 175"><g fill="#555"><rect x="0" y="0.00" width="2.2" height="0.5"/><rect x="0" y="5.12" width="1.2" height="0.5"/><rect x="0" y="10.24" width="1.2" height="0.5"/><rect x="0" y="15.36" width="1.2" height="0.5"/><rect x="0" y="20.48" width="1.2" height="0.5"/><rect x="0" y="25.60" width="2.2" height="0.5"/><rect x="0" y="30.72" width="1.2" height="0.5"/><rect x="0" y="35.84" width="1.2" height="0.5"/><rect x="0" y="40.96" width="1.2" height="0.5"/><rect x="0" y="46.08" width="1.2" height="0.5"/><rect x="0" y="51.20" width="2.2" height="0.5"/><rect x="0" y="56.32" width="1.2" height="0.5"/><rect x="0" y="61.44" width="1.2" height="0.5"/><rect x="0" y="66.56" width="1.2" height="0.5"/><rect x="0" y="71.68" width="1.2" height="0.5"/><rect x="0" y="76.80" width="2.2" height="0.5"/><rect x="0" y="81.92" width="1.2" height="0.5"/><rect x="0" y="87.04" width="1.2" height="0.5"/><rect x="0" y="92.16" width="1.2" height="0.5"/><rect x="0" y="97.28" width="1.2" height="0.5"/><rect x="0" y="102.40" width="2.2" height="0.5"/><rect x="0" y="107.52" width="1.2" height="0.5"/><rect x="0" y="112.64" width="1.2" height="0.5"/><rect x="0" y="117.76" width="1.2" height="0.5"/><rect x="0" y="122.88" width="1.2" height="0.5"/><rect x="0" y="128.00" width="2.2" height="0.5"/><rect x="0" y="133.12" width="1.2" height="0.5"/><rect x="0" y="138.24" width="1.2" height="0.5"/><rect x="0" y="143.36" width="1.2" height="0.5"/><rect x="0" y="148.48" width="1.2" height="0.5"/><rect x="0" y="153.60" width="2.2" height="0.5"/><rect x="0" y="158.72" width="1.2" height="0.5"/><rect x="0" y="163.84" width="1.2" height="0.5"/><rect x="0" y="168.96" width="1.2" height="0.5"/></g></svg>
<svg style="left:637.4px;top:75.2px" width="3" height="16" viewBox="0 0 3 16"><g fill="#555"><rect x="0" y="0" width="1.2" height="0.5"/><rect x="0" y="5.12" width="1.2" height="0.5"/><rect x="0" y="10.24" width="1.2" height="0.5"/></g></svg>
<div class="t" style="left:641.3px;top:88.67px;font-size:4.55px;line-height:5.46px;color:#333;letter-spacing:-0.025px;">10.00</div>
<div class="t" style="left:641.3px;top:114.27px;font-size:4.55px;line-height:5.46px;color:#333;letter-spacing:-0.025px;">5.00</div>
<div class="t" style="left:641.3px;top:139.87px;font-size:4.55px;line-height:5.46px;color:#333;letter-spacing:-0.025px;">0.00</div>
<div class="t" style="left:640.3px;top:165.47px;font-size:4.55px;line-height:5.46px;color:#333;letter-spacing:-0.025px;">-5.00</div>
<div class="t" style="left:640.3px;top:191.07px;font-size:4.55px;line-height:5.46px;color:#333;letter-spacing:-0.025px;">-10.00</div>
<div class="t" style="left:640.3px;top:216.67px;font-size:4.55px;line-height:5.46px;color:#333;letter-spacing:-0.025px;">-15.00</div>
<div class="t" style="left:640.3px;top:242.27px;font-size:4.55px;line-height:5.46px;color:#333;letter-spacing:-0.025px;">-20.00</div>
<div class="a" style="left:658.4px;top:72.7px;width:60.0px;height:191.10000000000002px;border:1px solid #b0b0b0;box-sizing:border-box;border-radius:1.5px"></div>
<div class="t" style="left:661.9px;top:76.02px;font-size:4.8px;line-height:5.76px;color:#222;">Color Palette</div>
<div class="t" style="left:693.5px;top:75.36px;font-size:6.4px;line-height:7.68px;color:#3a92da;font-weight:bold;">?</div>
<svg style="left:709.9px;top:75.4px" width="5.6" height="5.6" viewBox="0 0 5.6 5.6"><rect x="0.4" y="0.4" width="4.8" height="4.8" fill="#f8f8f8" stroke="#9a9a9a" stroke-width="0.7"/><path d="M1.5 2.8 H4.1" stroke="#555" stroke-width="0.6"/></svg>
<div class="a btn" style="left:667px;top:85px;width:15.600000000000023px;height:8.599999999999994px;background:#e1e1e1;border:1px solid #c6c6c6;font-size:4.55px;line-height:6.599999999999994px;padding-top:1px;letter-spacing:-0.025px;">Auto</div>
<div class="a btn" style="left:685px;top:85px;width:12px;height:8.599999999999994px;background:#e1e1e1;border:1px solid #c6c6c6;font-size:4.55px;line-height:6.599999999999994px;padding-top:1px;letter-spacing:-0.025px;">In</div>
<div class="a btn" style="left:699.2px;top:85px;width:13.399999999999977px;height:8.599999999999994px;background:#e1e1e1;border:1px solid #c6c6c6;font-size:4.55px;line-height:6.599999999999994px;padding-top:1px;letter-spacing:-0.025px;">Out</div>
<svg style="left:667.3px;top:96.85px" width="5.5" height="5.5" viewBox="0 0 5.5 5.5"><rect x="0.35" y="0.35" width="4.8" height="4.8" fill="#fff" stroke="#6a6a6a" stroke-width="0.7"/><path d="M1.3 2.9 L2.4 4.0 L4.3 1.5" stroke="#333" stroke-width="0.7" fill="none"/></svg>
<div class="t" style="left:674px;top:97.57px;font-size:4.55px;line-height:5.46px;color:#222;letter-spacing:-0.075px;">Auto Scale Each</div>
<svg style="left:667.3px;top:105.45px" width="5.5" height="5.5" viewBox="0 0 5.5 5.5"><rect x="0.35" y="0.35" width="4.8" height="4.8" fill="#fff" stroke="#6a6a6a" stroke-width="0.7"/></svg>
<div class="t" style="left:674px;top:106.17px;font-size:4.55px;line-height:5.46px;color:#222;letter-spacing:-0.075px;">Auto Scale Region</div>
<div class="a" style="left:683px;top:122px;width:0.6px;height:99.80000000000001px;background:#555"></div>
<svg style="left:682.3px;top:122px" width="2" height="99.80000000000001" viewBox="0 0 2 99.80000000000001"><g fill="#666"><rect x="0" y="0.000" width="1.3" height="0.45"/><rect x="0" y="1.760" width="1.3" height="0.45"/><rect x="0" y="3.520" width="1.3" height="0.45"/><rect x="0" y="5.280" width="1.3" height="0.45"/><rect x="0" y="7.040" width="1.3" height="0.45"/><rect x="0" y="8.800" width="1.3" height="0.45"/><rect x="0" y="10.560" width="1.3" height="0.45"/><rect x="0" y="12.320" width="1.3" height="0.45"/><rect x="0" y="14.080" width="1.3" height="0.45"/><rect x="0" y="15.840" width="1.3" height="0.45"/><rect x="0" y="17.600" width="1.3" height="0.45"/><rect x="0" y="19.360" width="1.3" height="0.45"/><rect x="0" y="21.120" width="1.3" height="0.45"/><rect x="0" y="22.880" width="1.3" height="0.45"/><rect x="0" y="24.640" width="1.3" height="0.45"/><rect x="0" y="26.400" width="1.3" height="0.45"/><rect x="0" y="28.160" width="1.3" height="0.45"/><rect x="0" y="29.920" width="1.3" height="0.45"/><rect x="0" y="31.680" width="1.3" height="0.45"/><rect x="0" y="33.440" width="1.3" height="0.45"/><rect x="0" y="35.200" width="1.3" height="0.45"/><rect x="0" y="36.960" width="1.3" height="0.45"/><rect x="0" y="38.720" width="1.3" height="0.45"/><rect x="0" y="40.480" width="1.3" height="0.45"/><rect x="0" y="42.240" width="1.3" height="0.45"/><rect x="0" y="44.000" width="1.3" height="0.45"/><rect x="0" y="45.760" width="1.3" height="0.45"/><rect x="0" y="47.520" width="1.3" height="0.45"/><rect x="0" y="49.280" width="1.3" height="0.45"/><rect x="0" y="51.040" width="1.3" height="0.45"/><rect x="0" y="52.800" width="1.3" height="0.45"/><rect x="0" y="54.560" width="1.3" height="0.45"/><rect x="0" y="56.320" width="1.3" height="0.45"/><rect x="0" y="58.080" width="1.3" height="0.45"/><rect x="0" y="59.840" width="1.3" height="0.45"/><rect x="0" y="61.600" width="1.3" height="0.45"/><rect x="0" y="63.360" width="1.3" height="0.45"/><rect x="0" y="65.120" width="1.3" height="0.45"/><rect x="0" y="66.880" width="1.3" height="0.45"/><rect x="0" y="68.640" width="1.3" height="0.45"/><rect x="0" y="70.400" width="1.3" height="0.45"/><rect x="0" y="72.160" width="1.3" height="0.45"/><rect x="0" y="73.920" width="1.3" height="0.45"/><rect x="0" y="75.680" width="1.3" height="0.45"/><rect x="0" y="77.440" width="1.3" height="0.45"/><rect x="0" y="79.200" width="1.3" height="0.45"/><rect x="0" y="80.960" width="1.3" height="0.45"/><rect x="0" y="82.720" width="1.3" height="0.45"/><rect x="0" y="84.480" width="1.3" height="0.45"/><rect x="0" y="86.240" width="1.3" height="0.45"/><rect x="0" y="88.000" width="1.3" height="0.45"/><rect x="0" y="89.760" width="1.3" height="0.45"/><rect x="0" y="91.520" width="1.3" height="0.45"/><rect x="0" y="93.280" width="1.3" height="0.45"/><rect x="0" y="95.040" width="1.3" height="0.45"/><rect x="0" y="96.800" width="1.3" height="0.45"/><rect x="0" y="98.560" width="1.3" height="0.45"/></g></svg>
<div class="a" style="left:684.4px;top:127.2px;width:1.4px;height:0.6px;background:#333"></div>
<div class="t" style="left:687px;top:125.47px;font-size:4.55px;line-height:5.46px;color:#333;letter-spacing:-0.125px;"></div>
<div class="a" style="left:684.4px;top:144.7px;width:1.4px;height:0.6px;background:#333"></div>
<div class="t" style="left:687px;top:142.97px;font-size:4.55px;line-height:5.46px;color:#333;letter-spacing:-0.125px;"></div>
<div class="a" style="left:684.4px;top:162.29999999999998px;width:1.4px;height:0.6px;background:#333"></div>
<div class="t" style="left:687px;top:160.57px;font-size:4.55px;line-height:5.46px;color:#333;letter-spacing:-0.125px;"></div>
<div class="a" style="left:684.4px;top:180.39999999999998px;width:1.4px;height:0.6px;background:#333"></div>
<div class="t" style="left:687px;top:178.67px;font-size:4.55px;line-height:5.46px;color:#333;letter-spacing:-0.125px;"></div>
<div class="a" style="left:684.4px;top:197.89999999999998px;width:1.4px;height:0.6px;background:#333"></div>
<div class="t" style="left:687px;top:196.17px;font-size:4.55px;line-height:5.46px;color:#333;letter-spacing:-0.125px;"></div>
<div class="a" style="left:684.4px;top:215.5px;width:1.4px;height:0.6px;background:#333"></div>
<div class="t" style="left:687px;top:213.77px;font-size:4.55px;line-height:5.46px;color:#333;letter-spacing:-0.125px;"></div>
<div class="t" style="left:687.5px;top:125.47px;font-size:4.55px;line-height:5.46px;color:#333;letter-spacing:-0.125px;">20.00</div>
<div class="t" style="left:687.5px;top:142.97px;font-size:4.55px;line-height:5.46px;color:#333;letter-spacing:-0.125px;">10.00</div>
<div class="t" style="left:687.5px;top:160.57px;font-size:4.55px;line-height:5.46px;color:#333;letter-spacing:-0.125px;">0.00</div>
<div class="t" style="left:686.5px;top:178.67px;font-size:4.55px;line-height:5.46px;color:#333;letter-spacing:-0.125px;">-10.00</div>
<div class="t" style="left:686.5px;top:196.17px;font-size:4.55px;line-height:5.46px;color:#333;letter-spacing:-0.125px;">-20.00</div>
<div class="t" style="left:686.5px;top:213.77px;font-size:4.55px;line-height:5.46px;color:#333;letter-spacing:-0.125px;">-30.00</div>
<svg style="left:667px;top:131px" width="16" height="8.199999999999989" viewBox="0 0 16 8.199999999999989"><path d="M0 0 L16 8.199999999999989 L0 8.199999999999989Z" fill="#7a7a7a"/></svg>
<svg style="left:667px;top:204.8px" width="16" height="8.0" viewBox="0 0 16 8.0"><path d="M0 0.6 L16 0 L0 8.0Z" fill="#7a7a7a"/></svg>
<div class="a" style="left:667px;top:232px;width:23.5px;height:7.599999999999994px;background:#fff;border:1px solid #b4b4b4;box-sizing:border-box"></div>
<svg style="left:667px;top:232px" width="5.2" height="7.599999999999994" viewBox="0 0 5.2 7.599999999999994"><rect x="0.5" y="0.5" width="4.7" height="6.599999999999994" fill="#e8e8e8" stroke="#c8c8c8" stroke-width="0.4"/><path d="M1.5 3.099999999999997 L2.8000000000000003 1.699999999999997 L4.1 3.099999999999997Z M1.5 4.499999999999997 L2.8000000000000003 5.899999999999997 L4.1 4.499999999999997Z" fill="#555"/></svg>
<div class="t" style="right:335.0px;top:233.77px;font-size:4.55px;line-height:5.46px;color:#222;text-align:right;letter-spacing:-0.125px;">13.39</div>
<div class="t" style="left:696px;top:233.77px;font-size:4.55px;line-height:5.46px;color:#222;letter-spacing:-0.125px;">550.00</div>
<div class="a" style="left:667px;top:242px;width:23.5px;height:7.599999999999994px;background:#fff;border:1px solid #b4b4b4;box-sizing:border-box"></div>
<svg style="left:667px;top:242px" width="5.2" height="7.599999999999994" viewBox="0 0 5.2 7.599999999999994"><rect x="0.5" y="0.5" width="4.7" height="6.599999999999994" fill="#e8e8e8" stroke="#c8c8c8" stroke-width="0.4"/><path d="M1.5 3.099999999999997 L2.8000000000000003 1.699999999999997 L4.1 3.099999999999997Z M1.5 4.499999999999997 L2.8000000000000003 5.899999999999997 L4.1 4.499999999999997Z" fill="#555"/></svg>
<div class="t" style="right:335.0px;top:243.77px;font-size:4.55px;line-height:5.46px;color:#222;text-align:right;letter-spacing:-0.125px;">-24.03</div>
<div class="t" style="left:694.5px;top:243.77px;font-size:4.55px;line-height:5.46px;color:#222;letter-spacing:-0.125px;">-100.00</div>
<div class="a btn" style="left:667px;top:252.2px;width:23.399999999999977px;height:8.199999999999989px;background:#e1e1e1;border:1px solid #c6c6c6;font-size:4.55px;line-height:6.199999999999989px;padding-top:1px;letter-spacing:-0.125px;">Restore</div>
<div class="a btn" style="left:693.2px;top:252.2px;width:15.399999999999977px;height:8.199999999999989px;background:#e1e1e1;border:1px solid #c6c6c6;font-size:4.55px;line-height:6.199999999999989px;padding-top:1px;letter-spacing:-0.125px;">Set</div>
<div class="a" style="left:372px;top:266.6px;width:116.69999999999999px;height:43.89999999999998px;border:1px solid #b0b0b0;box-sizing:border-box;border-radius:1.5px"></div>
<div class="t" style="left:375.5px;top:269.92px;font-size:4.8px;line-height:5.76px;color:#222;">Testing</div>
<div class="t" style="left:396px;top:269.26px;font-size:6.4px;line-height:7.68px;color:#3a92da;font-weight:bold;">?</div>
<svg style="left:480.2px;top:269.3px" width="5.6" height="5.6" viewBox="0 0 5.6 5.6"><rect x="0.4" y="0.4" width="4.8" height="4.8" fill="#f8f8f8" stroke="#9a9a9a" stroke-width="0.7"/><path d="M1.5 2.8 H4.1" stroke="#555" stroke-width="0.6"/></svg>
<div class="a" style="left:378.0px;top:279.09999999999997px;width:24.1px;height:17.700000000000024px;background:#d8d8d8;border:0.5px solid #bbb;box-sizing:border-box"></div>
<div class="a" style="left:378.8px;top:279.9px;width:22.5px;height:16.100000000000023px;background:radial-gradient(ellipse at 50% 50%,#0f7a1e,#085a14);border:0.5px solid #053a0a;box-sizing:border-box"></div>
<div class="t" style="left:340.05px;width:100px;text-align:center;top:284.87px;font-size:6.8px;line-height:8.16px;color:#1f8a30;font-weight:bold;letter-spacing:0.3px;">ON</div>
<div class="t" style="left:340px;width:100px;text-align:center;top:298.37px;font-size:4.55px;line-height:5.46px;color:#222;letter-spacing:-0.075px;">High Low</div>
<div class="a" style="left:383.3px;top:302.8px;width:5px;height:5.2px;background:#0a6a16;border:0.5px solid #063a0a;box-sizing:border-box"></div>
<div class="a" style="left:392.2px;top:302.8px;width:5px;height:5.2px;background:#0a6a16;border:0.5px solid #063a0a;box-sizing:border-box"></div>
<div class="t" style="left:403.5px;top:292.17px;font-size:4.55px;line-height:5.46px;color:#222;letter-spacing:-0.025px;">Cycles</div>
<div class="a" style="left:419.2px;top:291px;width:20.30000000000001px;height:6.5px;background:#f8f8f8;border:0.6px solid #b0b0b0;box-sizing:border-box"></div>
<div class="t" style="right:586.0px;top:292.22px;font-size:4.55px;line-height:5.46px;color:#222;text-align:right;letter-spacing:-0.025px;">49</div>
<div class="t" style="left:408px;top:303.27px;font-size:4.55px;line-height:5.46px;color:#222;letter-spacing:-0.025px;">Time</div>
<div class="a" style="left:419.2px;top:302.2px;width:20.30000000000001px;height:6.400000000000034px;background:#f8f8f8;border:0.6px solid #b0b0b0;box-sizing:border-box"></div>
<div class="t" style="right:586.0px;top:303.37px;font-size:4.55px;line-height:5.46px;color:#222;text-align:right;letter-spacing:-0.025px;">50</div>
<div class="t" style="left:441.8px;top:303.27px;font-size:4.55px;line-height:5.46px;color:#222;letter-spacing:-0.025px;">sec</div>
<div class="t" style="left:452.5px;top:284.17px;font-size:4.55px;line-height:5.46px;color:#222;letter-spacing:-0.075px;">Cycle: 100%</div>
<div class="a" style="left:452.9px;top:289.5px;width:27.100000000000023px;height:6.699999999999989px;background:#14b414;"></div>
<div class="a btn" style="left:452.7px;top:299.4px;width:27.30000000000001px;height:8.800000000000011px;background:#e1e1e1;border:1px solid #c6c6c6;font-size:4.55px;line-height:6.800000000000011px;padding-top:1px;letter-spacing:-0.025px;">Clear Test</div>
<div class="a" style="left:372px;top:312.6px;width:116.69999999999999px;height:39.799999999999955px;border:1px solid #b0b0b0;box-sizing:border-box;border-radius:1.5px"></div>
<div class="t" style="left:375.5px;top:315.92px;font-size:4.8px;line-height:5.76px;color:#222;">Test Info</div>
<div class="t" style="left:399px;top:315.26px;font-size:6.4px;line-height:7.68px;color:#3a92da;font-weight:bold;">?</div>
<svg style="left:480.2px;top:315.3px" width="5.6" height="5.6" viewBox="0 0 5.6 5.6"><rect x="0.4" y="0.4" width="4.8" height="4.8" fill="#f8f8f8" stroke="#9a9a9a" stroke-width="0.7"/><path d="M1.5 2.8 H4.1" stroke="#555" stroke-width="0.6"/></svg>
<div class="t" style="left:376.5px;top:325.97px;font-size:4.55px;line-height:5.46px;color:#222;letter-spacing:-0.025px;">Int Cycles</div>
<div class="a" style="left:398.2px;top:324.6px;width:16.100000000000023px;height:6.199999999999989px;background:#f8f8f8;border:0.6px solid #b0b0b0;box-sizing:border-box"></div>
<div class="t" style="right:611.2px;top:325.67px;font-size:4.55px;line-height:5.46px;color:#222;text-align:right;letter-spacing:-0.025px;">0</div>
<div class="t" style="right:627.7px;top:336.17px;font-size:4.55px;line-height:5.46px;color:#222;text-align:right;letter-spacing:-0.025px;">Accepted</div>
<div class="a" style="left:398.2px;top:334.9px;width:24.30000000000001px;height:6.300000000000011px;background:#f8f8f8;border:0.6px solid #b0b0b0;box-sizing:border-box"></div>
<div class="t" style="right:603.0px;top:336.02px;font-size:4.55px;line-height:5.46px;color:#222;text-align:right;letter-spacing:-0.025px;">2963</div>
<div class="t" style="right:571.7px;top:336.17px;font-size:4.55px;line-height:5.46px;color:#222;text-align:right;letter-spacing:-0.025px;">Noise (image)</div>
<div class="a" style="left:454.5px;top:334.9px;width:19.80000000000001px;height:6.300000000000011px;background:#f8f8f8;border:0.6px solid #b0b0b0;box-sizing:border-box"></div>
<div class="t" style="right:551.2px;top:336.02px;font-size:4.55px;line-height:5.46px;color:#222;text-align:right;letter-spacing:-0.025px;">8.193</div>
<div class="t" style="left:477px;top:336.17px;font-size:4.55px;line-height:5.46px;color:#222;letter-spacing:-0.025px;">mK</div>
<div class="t" style="right:627.7px;top:345.27px;font-size:4.55px;line-height:5.46px;color:#222;text-align:right;letter-spacing:-0.025px;">Rejected</div>
<div class="a" style="left:398.2px;top:344.2px;width:24.30000000000001px;height:6.300000000000011px;background:#f8f8f8;border:0.6px solid #b0b0b0;box-sizing:border-box"></div>
<div class="t" style="right:603.0px;top:345.32px;font-size:4.55px;line-height:5.46px;color:#222;text-align:right;letter-spacing:-0.025px;">0</div>
<div class="t" style="right:571.7px;top:345.27px;font-size:4.55px;line-height:5.46px;color:#222;text-align:right;letter-spacing:-0.025px;">Noise (theory)</div>
<div class="a" style="left:454.5px;top:344.2px;width:19.80000000000001px;height:6.300000000000011px;background:#f8f8f8;border:0.6px solid #b0b0b0;box-sizing:border-box"></div>
<div class="t" style="right:551.2px;top:345.32px;font-size:4.55px;line-height:5.46px;color:#222;text-align:right;letter-spacing:-0.025px;">1.837</div>
<div class="t" style="left:477px;top:345.27px;font-size:4.55px;line-height:5.46px;color:#222;letter-spacing:-0.025px;">mK</div>
<div class="a" style="left:490.4px;top:266.6px;width:57.89999999999998px;height:43.89999999999998px;border:1px solid #b0b0b0;box-sizing:border-box;border-radius:1.5px"></div>
<div class="t" style="left:493.9px;top:269.92px;font-size:4.8px;line-height:5.76px;color:#222;">Update</div>
<div class="t" style="left:515px;top:269.26px;font-size:6.4px;line-height:7.68px;color:#3a92da;font-weight:bold;">?</div>
<svg style="left:539.8px;top:269.3px" width="5.6" height="5.6" viewBox="0 0 5.6 5.6"><rect x="0.4" y="0.4" width="4.8" height="4.8" fill="#f8f8f8" stroke="#9a9a9a" stroke-width="0.7"/><path d="M1.5 2.8 H4.1" stroke="#555" stroke-width="0.6"/></svg>
<svg style="left:495.2px;top:279.35px" width="5.5" height="5.5" viewBox="0 0 5.5 5.5"><circle cx="2.75" cy="2.75" r="2.4" fill="#fff" stroke="#6a6a6a" stroke-width="0.7"/><circle cx="2.75" cy="2.75" r="1.3" fill="#222"/></svg>
<div class="t" style="left:502px;top:280.07px;font-size:4.55px;line-height:5.46px;color:#222;letter-spacing:-0.025px;">Single Phase</div>
<svg style="left:495.2px;top:286.85px" width="5.5" height="5.5" viewBox="0 0 5.5 5.5"><circle cx="2.75" cy="2.75" r="2.4" fill="#fff" stroke="#6a6a6a" stroke-width="0.7"/></svg>
<div class="t" style="left:502px;top:287.57px;font-size:4.55px;line-height:5.46px;color:#222;letter-spacing:-0.025px;">Amplitude</div>
<svg style="left:525.5px;top:286.85px" width="5.5" height="5.5" viewBox="0 0 5.5 5.5"><rect x="0.35" y="0.35" width="4.8" height="4.8" fill="#fff" stroke="#6a6a6a" stroke-width="0.7"/></svg>
<div class="t" style="left:532.5px;top:287.57px;font-size:4.55px;line-height:5.46px;color:#222;letter-spacing:-0.025px;">Phase</div>
<div class="a btn" style="left:495.2px;top:299.8px;width:27.19999999999999px;height:8.5px;background:#e1e1e1;border:1px solid #c6c6c6;font-size:4.55px;line-height:6.5px;padding-top:1px;letter-spacing:-0.025px;">Amplitude</div>
<div class="a btn" style="left:525.6px;top:299.8px;width:19.0px;height:8.5px;background:#e5f1fb;border:1px solid #0078d7;font-size:4.55px;line-height:6.5px;padding-top:1px;letter-spacing:-0.025px;">Phase</div>
<div class="a" style="left:490.4px;top:312.6px;width:57.89999999999998px;height:39.799999999999955px;border:1px solid #b0b0b0;box-sizing:border-box;border-radius:1.5px"></div>
<div class="t" style="left:493.9px;top:315.92px;font-size:4.8px;line-height:5.76px;color:#222;">Single Phase</div>
<div class="t" style="left:525.5px;top:315.26px;font-size:6.4px;line-height:7.68px;color:#3a92da;font-weight:bold;">?</div>
<svg style="left:539.8px;top:315.3px" width="5.6" height="5.6" viewBox="0 0 5.6 5.6"><rect x="0.4" y="0.4" width="4.8" height="4.8" fill="#f8f8f8" stroke="#9a9a9a" stroke-width="0.7"/><path d="M1.5 2.8 H4.1" stroke="#555" stroke-width="0.6"/></svg>
<div class="t" style="left:494px;top:327.47px;font-size:4.55px;line-height:5.46px;color:#222;letter-spacing:-0.025px;">Phase Angle: 0°</div>
<div class="a" style="left:494px;top:335.6px;width:51px;height:1.0px;background:#e6e6e6;"></div>
<svg style="left:541.6px;top:332.2px" width="5" height="8" viewBox="0 0 5 8"><path d="M0 0H5V6L2.5 8L0 6Z" fill="#0a6fd0"/></svg>
<div class="a btn" style="left:494.6px;top:342.3px;width:19.399999999999977px;height:7.899999999999977px;background:#e1e1e1;border:1px solid #c6c6c6;font-size:4.55px;line-height:5.899999999999977px;padding-top:1px;letter-spacing:-0.025px;">Show</div>
<div class="a btn" style="left:522.5px;top:342.3px;width:10.5px;height:7.899999999999977px;background:#e1e1e1;border:1px solid #c6c6c6;font-size:4.55px;line-height:5.899999999999977px;padding-top:1px;letter-spacing:-0.025px;">&lt;</div>
<div class="a btn" style="left:535px;top:342.3px;width:10.5px;height:7.899999999999977px;background:#e1e1e1;border:1px solid #c6c6c6;font-size:4.55px;line-height:5.899999999999977px;padding-top:1px;letter-spacing:-0.025px;">&gt;</div>
<div class="a" style="left:550.4px;top:267px;width:58.10000000000002px;height:43.69999999999999px;border:1px solid #b0b0b0;box-sizing:border-box;border-radius:1.5px"></div>
<div class="t" style="left:553.9px;top:270.32px;font-size:4.8px;line-height:5.76px;color:#222;">Overlay Merge</div>
<div class="t" style="left:590.5px;top:269.66px;font-size:6.4px;line-height:7.68px;color:#3a92da;font-weight:bold;">?</div>
<svg style="left:600.0px;top:269.7px" width="5.6" height="5.6" viewBox="0 0 5.6 5.6"><rect x="0.4" y="0.4" width="4.8" height="4.8" fill="#f8f8f8" stroke="#9a9a9a" stroke-width="0.7"/><path d="M1.5 2.8 H4.1" stroke="#555" stroke-width="0.6"/></svg>
<svg style="left:554.5px;top:278.65px" width="5.5" height="5.5" viewBox="0 0 5.5 5.5"><rect x="0.35" y="0.35" width="4.8" height="4.8" fill="#fff" stroke="#6a6a6a" stroke-width="0.7"/><path d="M1.3 2.9 L2.4 4.0 L4.3 1.5" stroke="#333" stroke-width="0.7" fill="none"/></svg>
<div class="t" style="left:561px;top:279.37px;font-size:4.55px;line-height:5.46px;color:#222;letter-spacing:-0.025px;">Show</div>
<div class="a btn" style="left:582px;top:278.2px;width:17.200000000000045px;height:8.0px;background:#e1e1e1;border:1px solid #c6c6c6;font-size:4.55px;line-height:6.0px;padding-top:1px;letter-spacing:-0.025px;">Scale</div>
<div class="t" style="left:554.8px;top:287.17px;font-size:4.55px;line-height:5.46px;color:#222;letter-spacing:-0.025px;">Range: 67%</div>
<div class="a" style="left:554.8px;top:295px;width:50.200000000000045px;height:1px;background:#e6e6e6;"></div>
<svg style="left:585.2px;top:291.5px" width="5" height="8" viewBox="0 0 5 8"><path d="M0 0H5V6L2.5 8L0 6Z" fill="#0a6fd0"/></svg>
<div class="a btn" style="left:555.4px;top:300.3px;width:19.600000000000023px;height:8.099999999999966px;background:#e1e1e1;border:1px solid #c6c6c6;font-size:4.55px;line-height:6.099999999999966px;padding-top:1px;letter-spacing:-0.025px;">Refresh</div>
<div class="a" style="left:550.4px;top:312.7px;width:58.10000000000002px;height:39.60000000000002px;border:1px solid #b0b0b0;box-sizing:border-box;border-radius:1.5px"></div>
<div class="t" style="left:553.9px;top:316.02px;font-size:4.8px;line-height:5.76px;color:#222;">Cycle Seq</div>
<div class="t" style="left:580.5px;top:315.36px;font-size:6.4px;line-height:7.68px;color:#3a92da;font-weight:bold;">?</div>
<svg style="left:600.0px;top:315.4px" width="5.6" height="5.6" viewBox="0 0 5.6 5.6"><rect x="0.4" y="0.4" width="4.8" height="4.8" fill="#f8f8f8" stroke="#9a9a9a" stroke-width="0.7"/><path d="M1.5 2.8 H4.1" stroke="#555" stroke-width="0.6"/></svg>
<div class="t" style="left:554.8px;top:327.37px;font-size:4.55px;line-height:5.46px;color:#222;letter-spacing:-0.025px;">Image #: 1 of 60</div>
<div class="a" style="left:554.8px;top:335.6px;width:50.200000000000045px;height:1.0px;background:#e6e6e6;"></div>
<svg style="left:553.8px;top:332.2px" width="5" height="8" viewBox="0 0 5 8"><path d="M0 0H5V6L2.5 8L0 6Z" fill="#0a6fd0"/></svg>
<div class="a btn" style="left:555.4px;top:342.4px;width:19.600000000000023px;height:8.0px;background:#e1e1e1;border:1px solid #c6c6c6;font-size:4.55px;line-height:6.0px;padding-top:1px;letter-spacing:-0.025px;">Show</div>
<div class="a btn" style="left:582.6px;top:342.4px;width:8.899999999999977px;height:8.0px;background:#e1e1e1;border:1px solid #c6c6c6;font-size:4.55px;line-height:6.0px;padding-top:1px;letter-spacing:-0.025px;">&lt;</div>
<div class="a btn" style="left:594.6px;top:342.4px;width:8.899999999999977px;height:8.0px;background:#e1e1e1;border:1px solid #c6c6c6;font-size:4.55px;line-height:6.0px;padding-top:1px;letter-spacing:-0.025px;">&gt;</div>
<div class="a" style="left:610.5px;top:267px;width:107.5px;height:25.399999999999977px;border:1px solid #b0b0b0;box-sizing:border-box;border-radius:1.5px"></div>
<div class="t" style="left:614.0px;top:270.32px;font-size:4.8px;line-height:5.76px;color:#222;">Cursor Info</div>
<div class="t" style="left:643.5px;top:269.66px;font-size:6.4px;line-height:7.68px;color:#3a92da;font-weight:bold;">?</div>
<svg style="left:709.5px;top:269.7px" width="5.6" height="5.6" viewBox="0 0 5.6 5.6"><rect x="0.4" y="0.4" width="4.8" height="4.8" fill="#f8f8f8" stroke="#9a9a9a" stroke-width="0.7"/><path d="M1.5 2.8 H4.1" stroke="#555" stroke-width="0.6"/></svg>
<div class="t" style="left:617.5px;top:279.97px;font-size:4.55px;line-height:5.46px;color:#222;letter-spacing:-0.025px;">Temp</div>
<div class="a" style="left:630.3px;top:278.7px;width:19.700000000000045px;height:6.5px;background:#f8f8f8;border:0.6px solid #b0b0b0;box-sizing:border-box"></div>
<div class="t" style="right:375.5px;top:279.92px;font-size:4.55px;line-height:5.46px;color:#222;text-align:right;letter-spacing:-0.025px;">-6.81</div>
<div class="t" style="left:653px;top:279.97px;font-size:4.55px;line-height:5.46px;color:#222;letter-spacing:-0.025px;">mK</div>
<div class="t" style="left:668px;top:279.97px;font-size:4.55px;line-height:5.46px;color:#222;letter-spacing:-0.025px;">Location</div>
<div class="a" style="left:686.4px;top:278.7px;width:24.100000000000023px;height:6.5px;background:#f8f8f8;border:0.6px solid #b0b0b0;box-sizing:border-box"></div>
<div class="t" style="right:315.0px;top:279.92px;font-size:4.55px;line-height:5.46px;color:#222;text-align:right;letter-spacing:-0.025px;">35,3</div>
<div class="a" style="left:610.5px;top:295px;width:107.5px;height:57.30000000000001px;border:1px solid #b0b0b0;box-sizing:border-box;border-radius:1.5px"></div>
<div class="t" style="left:614.0px;top:298.32px;font-size:4.8px;line-height:5.76px;color:#222;">Region Tools</div>
<div class="t" style="left:646.5px;top:297.66px;font-size:6.4px;line-height:7.68px;color:#3a92da;font-weight:bold;">?</div>
<svg style="left:709.5px;top:297.7px" width="5.6" height="5.6" viewBox="0 0 5.6 5.6"><rect x="0.4" y="0.4" width="4.8" height="4.8" fill="#f8f8f8" stroke="#9a9a9a" stroke-width="0.7"/><path d="M1.5 2.8 H4.1" stroke="#555" stroke-width="0.6"/></svg>
<svg style="left:616.5px;top:309.0px" width="5" height="6.5" viewBox="0 0 10 12"><path d="M1 0V10L3.5 7.5L5.5 11.5L7 10.8L5 7H8.5Z" fill="#fff" stroke="#333" stroke-width="0.8"/></svg>
<div class="a" style="left:625.5px;top:309.2px;width:0.6000000000000227px;height:6.0px;background:#c8c8c8;"></div>
<svg style="left:628px;top:310.2px" width="4" height="4" viewBox="0 0 4 4"><path d="M2 0V4M0 2H4" stroke="#888" stroke-width="0.6"/></svg>
<svg style="left:636px;top:309.2px" width="6" height="6" viewBox="0 0 6 6"><path d="M0.3 5.7L5.7 0.3" stroke="#555" stroke-width="0.6"/></svg>
<div class="a" style="left:644.5px;top:310.2px;width:6px;height:4px;background:#3a8ad8;border:0.6px solid #1a4a90;box-sizing:border-box"></div>
<div class="a" style="left:653px;top:309.2px;width:6px;height:6px;border-radius:50%;background:#3a8ad8;border:0.5px solid #1a4a90;box-sizing:border-box"></div>
<svg style="left:661px;top:309.2px" width="6" height="6" viewBox="0 0 12 12"><path d="M0 1H10L11 11H4Z" fill="#eee" stroke="#333" stroke-width="0.9"/></svg>
<svg style="left:668.5px;top:309.2px" width="6" height="6" viewBox="0 0 12 12"><path d="M1 0L11 10L11 12H1Z" fill="#4a90d8" stroke="#1a4a90" stroke-width="0.9"/></svg>
<div class="a" style="left:677px;top:309.2px;width:0.6000000000000227px;height:6.0px;background:#c8c8c8;"></div>
<div class="a" style="left:680.5px;top:311.2px;width:3.5px;height:3.5px;background:#111"></div><div class="a" style="left:679px;top:309.2px;width:1.5px;height:1.5px;background:#555"></div>
<div class="a" style="left:687.5px;top:310.7px;width:6px;height:3px;background:#e0b030;border-top:0.5px solid #806020;border-bottom:0.5px solid #806020;box-sizing:border-box"></div>
<div class="a" style="left:697px;top:309.2px;width:0.6000000000000227px;height:6.0px;background:#c8c8c8;"></div>
<svg style="left:700px;top:309.2px" width="6" height="6" viewBox="0 0 6 6"><path d="M0.5 0.5L5.5 5.5M5.5 0.5L0.5 5.5" stroke="#e01818" stroke-width="1.2"/></svg>
<div class="t" style="right:398px;top:324.27px;font-size:4.55px;line-height:5.46px;color:#222;text-align:right;letter-spacing:-0.025px;">Max</div>
<div class="a" style="left:627.7px;top:323.2px;width:19.799999999999955px;height:6.400000000000034px;background:#f8f8f8;border:0.6px solid #b0b0b0;box-sizing:border-box"></div>
<div class="t" style="right:378.0px;top:324.37px;font-size:4.55px;line-height:5.46px;color:#222;text-align:right;letter-spacing:-0.025px;">10.27</div>
<div class="t" style="left:650px;top:324.27px;font-size:4.55px;line-height:5.46px;color:#222;letter-spacing:-0.025px;">mK</div>
<div class="t" style="right:398px;top:332.17px;font-size:4.55px;line-height:5.46px;color:#222;text-align:right;letter-spacing:-0.025px;">Min</div>
<div class="a" style="left:627.7px;top:331.1px;width:19.799999999999955px;height:6.399999999999977px;background:#f8f8f8;border:0.6px solid #b0b0b0;box-sizing:border-box"></div>
<div class="t" style="right:378.0px;top:332.27px;font-size:4.55px;line-height:5.46px;color:#222;text-align:right;letter-spacing:-0.025px;">-20.91</div>
<div class="t" style="left:650px;top:332.17px;font-size:4.55px;line-height:5.46px;color:#222;letter-spacing:-0.025px;">mK</div>
<div class="t" style="right:397.70000000000005px;top:340.17px;font-size:4.55px;line-height:5.46px;color:#222;text-align:right;letter-spacing:-0.025px;">Mean</div>
<div class="a" style="left:627.7px;top:339.1px;width:19.799999999999955px;height:6.399999999999977px;background:#f8f8f8;border:0.6px solid #b0b0b0;box-sizing:border-box"></div>
<div class="t" style="right:378.0px;top:340.27px;font-size:4.55px;line-height:5.46px;color:#222;text-align:right;letter-spacing:-0.025px;">-8.05</div>
<div class="t" style="left:650px;top:340.17px;font-size:4.55px;line-height:5.46px;color:#222;letter-spacing:-0.025px;">mK</div>
<svg style="left:663.4px;top:323.25px" width="5.5" height="5.5" viewBox="0 0 5.5 5.5"><circle cx="2.75" cy="2.75" r="2.4" fill="#fff" stroke="#6a6a6a" stroke-width="0.7"/><circle cx="2.75" cy="2.75" r="1.3" fill="#222"/></svg>
<div class="t" style="left:670.5px;top:323.97px;font-size:4.55px;line-height:5.46px;color:#222;letter-spacing:-0.025px;">Main Image Transfer</div>
<svg style="left:663.4px;top:330.75px" width="5.5" height="5.5" viewBox="0 0 5.5 5.5"><circle cx="2.75" cy="2.75" r="2.4" fill="#fff" stroke="#6a6a6a" stroke-width="0.7"/></svg>
<div class="t" style="left:670.5px;top:331.47px;font-size:4.55px;line-height:5.46px;color:#222;letter-spacing:-0.025px;">Phase Image Transfer</div>
<div class="a btn" style="left:663.8px;top:339.4px;width:18.800000000000068px;height:8.200000000000045px;background:#e1e1e1;border:1px solid #c6c6c6;font-size:4.55px;line-height:6.2000000000000455px;padding-top:1px;letter-spacing:-0.025px;">Send</div>
<div class="a btn" style="left:686.2px;top:339.4px;width:18.799999999999955px;height:8.200000000000045px;background:#e1e1e1;border:1px solid #c6c6c6;font-size:4.55px;line-height:6.2000000000000455px;padding-top:1px;letter-spacing:-0.025px;">Get</div>
<div class="a" style="left:369px;top:355.5px;width:352px;height:9.699999999999989px;background:#f0f0f0;"></div>
<div class="a" style="left:369px;top:356.2px;width:352px;height:0.6000000000000227px;background:#dadada;"></div>
<div class="t" style="left:375.5px;top:358.26px;font-size:6.4px;line-height:7.68px;color:#3a92da;font-weight:bold;">?</div>
<div class="t" style="left:383px;top:359.34px;font-size:4.6px;line-height:5.52px;color:#222;">1 Hz</div>
<div class="t" style="left:399.3px;top:359.34px;font-size:4.6px;line-height:5.52px;color:#222;">10 uK</div>
<div class="t" style="left:418px;top:359.34px;font-size:4.6px;line-height:5.52px;color:#222;">10/6/2021 11:19:12 AM</div>
<div class="t" style="left:472px;top:359.34px;font-size:4.6px;line-height:5.52px;color:#222;">part 1 610mV 5mA 1Hz 20um lens 50x 40C.csit</div>
<div class="a" style="left:729.9px;top:39.9px;width:130.30000000000007px;height:325.3px;background:#f0f0f0;border:0.6px solid #c8c8c8;box-sizing:border-box;box-shadow:0 1px 5px rgba(0,0,0,0.28)"></div>
<div class="a" style="left:730.5px;top:40.5px;width:129.10000000000008px;height:11.6px;background:#fff"></div>
<div class="t" style="left:734.4px;top:44.06px;font-size:4.9px;line-height:5.88px;color:#9a9a9a;">Instrument Setup</div>
<div class="a" style="left:852.2px;top:42.9px;width:7.4px;height:7.4px;background:#ececec"></div>
<div class="a" style="left:730.5px;top:51.5px;width:129.10000000000002px;height:10.0px;background:#f8f8f8;"></div>
<div class="t" style="left:735px;top:54.38px;font-size:4.7px;line-height:5.64px;color:#222;">File</div>
<div class="t" style="left:750.5px;top:54.38px;font-size:4.7px;line-height:5.64px;color:#222;">Help</div>
<div class="t" style="left:734.8px;top:64.17px;font-size:4.55px;line-height:5.46px;color:#222;letter-spacing:-0.125px;">Instrument Model/Series</div>
<div class="a" style="left:735px;top:70.2px;width:83.60000000000002px;height:8.399999999999991px;background:#e5e5e5;border:1px solid #c0c0c0;box-sizing:border-box"></div>
<div class="t" style="left:736.5px;top:72.37px;font-size:4.55px;line-height:5.46px;color:#222;letter-spacing:-0.075px;">Keithley Graphical 2450 SMU</div>
<svg class="a" style="left:812.6px;top:72.9px" width="4" height="3" viewBox="0 0 4 3"><path d="M0.3 0.6 L2 2.2 L3.7 0.6" stroke="#444" stroke-width="0.6" fill="none"/></svg>
<div class="t" style="left:823.2px;top:64.17px;font-size:4.55px;line-height:5.46px;color:#222;letter-spacing:-0.075px;">Serial Number</div>
<div class="a" style="left:823.2px;top:70.2px;width:32.09999999999991px;height:7.3999999999999915px;background:#fff;border:0.6px solid #7a7a7a;box-sizing:border-box"></div>
<div class="t" style="left:824.7px;top:71.87px;font-size:4.55px;line-height:5.46px;color:#222;letter-spacing:-0.075px;">04437003</div>
<div class="a btn" style="left:735.4px;top:81.2px;width:43.200000000000045px;height:8.0px;background:#e1e1e1;border:1px solid #c6c6c6;font-size:4.55px;line-height:6.0px;padding-top:1px;letter-spacing:-0.125px;">Initialize Instrument</div>
<svg style="left:783.2px;top:83.45px" width="5.5" height="5.5" viewBox="0 0 5.5 5.5"><rect x="0.35" y="0.35" width="4.8" height="4.8" fill="#fff" stroke="#6a6a6a" stroke-width="0.7"/></svg>
<div class="t" style="left:790.5px;top:84.17px;font-size:4.55px;line-height:5.46px;color:#222;letter-spacing:-0.075px;">Enable Instrument</div>
<div class="a" style="left:736.2px;top:95.6px;width:119.29999999999995px;height:172.6px;border:1px solid #dcdcdc;box-sizing:border-box;border-radius:1px"></div>
<div class="t" style="left:738px;top:92.86999999999999px;font-size:4.55px;line-height:5.46px;background:#f0f0f0;padding:0 0.5px;color:#222;letter-spacing:-0.075px;">Instrument Setup</div>
<div class="t" style="left:739px;top:101.27px;font-size:4.55px;line-height:5.46px;color:#222;letter-spacing:-0.075px;">Protocol</div>
<div class="a" style="left:739.2px;top:107.3px;width:32.09999999999991px;height:8.299999999999997px;background:#e5e5e5;border:1px solid #c0c0c0;box-sizing:border-box"></div>
<div class="t" style="left:740.7px;top:109.42px;font-size:4.55px;line-height:5.46px;color:#222;letter-spacing:-0.075px;">SCPI</div>
<svg class="a" style="left:765.3px;top:109.94999999999999px" width="4" height="3" viewBox="0 0 4 3"><path d="M0.3 0.6 L2 2.2 L3.7 0.6" stroke="#444" stroke-width="0.6" fill="none"/></svg>
<svg style="left:740.3px;top:120.65px" width="5.5" height="5.5" viewBox="0 0 5.5 5.5"><rect x="0.35" y="0.35" width="4.8" height="4.8" fill="#fff" stroke="#6a6a6a" stroke-width="0.7"/><path d="M1.3 2.9 L2.4 4.0 L4.3 1.5" stroke="#333" stroke-width="0.7" fill="none"/></svg>
<div class="t" style="left:747px;top:121.37px;font-size:4.55px;line-height:5.46px;color:#222;letter-spacing:-0.075px;">Reset Defaults</div>
<div class="a" style="left:793.3px;top:103.5px;width:57.30000000000007px;height:23.799999999999997px;border:1px solid #dcdcdc;box-sizing:border-box;border-radius:1px"></div>
<div class="t" style="left:796.5px;top:100.77px;font-size:4.55px;line-height:5.46px;background:#f0f0f0;padding:0 0.5px;color:#222;letter-spacing:-0.075px;">Sounds</div>
<svg style="left:797.5px;top:108.75px" width="5.5" height="5.5" viewBox="0 0 5.5 5.5"><rect x="0.35" y="0.35" width="4.8" height="4.8" fill="#fff" stroke="#6a6a6a" stroke-width="0.7"/></svg>
<div class="t" style="left:805px;top:109.47px;font-size:4.55px;line-height:5.46px;color:#222;letter-spacing:-0.075px;">Key Press</div>
<svg style="left:797.5px;top:117.55px" width="5.5" height="5.5" viewBox="0 0 5.5 5.5"><rect x="0.35" y="0.35" width="4.8" height="4.8" fill="#fff" stroke="#6a6a6a" stroke-width="0.7"/></svg>
<div class="t" style="left:805px;top:118.27px;font-size:4.55px;line-height:5.46px;color:#222;letter-spacing:-0.075px;">Event/Error</div>
<div class="a" style="left:739.6px;top:134.6px;width:111.0px;height:71.4px;border:1px solid #dcdcdc;box-sizing:border-box;border-radius:1px"></div>
<div class="t" style="left:742px;top:131.87px;font-size:4.55px;line-height:5.46px;background:#f0f0f0;padding:0 0.5px;color:#222;letter-spacing:-0.075px;">Source Settings</div>
<div class="a" style="left:743.3px;top:144px;width:27.90000000000009px;height:27px;border:1px solid #dcdcdc;box-sizing:border-box;border-radius:1px"></div>
<div class="t" style="left:747px;top:141.27px;font-size:4.55px;line-height:5.46px;background:#f0f0f0;padding:0 0.5px;color:#222;letter-spacing:-0.075px;">Terminals</div>
<svg style="left:747.7px;top:149.55px" width="5.5" height="5.5" viewBox="0 0 5.5 5.5"><circle cx="2.75" cy="2.75" r="2.4" fill="#fff" stroke="#6a6a6a" stroke-width="0.7"/><circle cx="2.75" cy="2.75" r="1.3" fill="#222"/></svg>
<div class="t" style="left:755px;top:150.27px;font-size:4.55px;line-height:5.46px;color:#222;letter-spacing:-0.075px;">Front</div>
<svg style="left:747.7px;top:158.75px" width="5.5" height="5.5" viewBox="0 0 5.5 5.5"><circle cx="2.75" cy="2.75" r="2.4" fill="#fff" stroke="#6a6a6a" stroke-width="0.7"/></svg>
<div class="t" style="left:755px;top:159.47px;font-size:4.55px;line-height:5.46px;color:#222;letter-spacing:-0.075px;">Rear</div>
<div class="a" style="left:776.3px;top:144px;width:69.0px;height:27px;border:1px solid #dcdcdc;box-sizing:border-box;border-radius:1px"></div>
<div class="t" style="left:779.5px;top:141.27px;font-size:4.55px;line-height:5.46px;background:#f0f0f0;padding:0 0.5px;color:#222;letter-spacing:-0.075px;">Voltage</div>
<div class="t" style="left:789px;width:100px;text-align:center;top:145.47px;font-size:4.55px;line-height:5.46px;color:#222;letter-spacing:-0.075px;">Test</div>
<div class="t" style="left:781px;top:150.27px;font-size:4.55px;line-height:5.46px;color:#222;letter-spacing:-0.075px;">High</div>
<div class="a" style="left:793.2px;top:149.3px;width:31.799999999999955px;height:7.5px;background:#fff;border:1px solid #b4b4b4;box-sizing:border-box"></div>
<svg style="left:793.2px;top:149.3px" width="5.2" height="7.5" viewBox="0 0 5.2 7.5"><rect x="0.5" y="0.5" width="4.7" height="6.5" fill="#e8e8e8" stroke="#c8c8c8" stroke-width="0.4"/><path d="M1.5 3.05 L2.8000000000000003 1.65 L4.1 3.05Z M1.5 4.45 L2.8000000000000003 5.85 L4.1 4.45Z" fill="#555"/></svg>
<div class="t" style="right:200.5px;top:151.02px;font-size:4.55px;line-height:5.46px;color:#222;text-align:right;letter-spacing:-0.075px;">0.000</div>
<div class="t" style="left:828.5px;top:150.77px;font-size:4.55px;line-height:5.46px;color:#222;letter-spacing:-0.075px;">V</div>
<svg style="left:835.5px;top:150.55px" width="5.5" height="5.5" viewBox="0 0 5.5 5.5"><rect x="0.35" y="0.35" width="4.8" height="4.8" fill="#fff" stroke="#6a6a6a" stroke-width="0.7"/></svg>
<div class="t" style="left:782.5px;top:161.47px;font-size:4.55px;line-height:5.46px;color:#222;letter-spacing:-0.075px;">Low</div>
<div class="a" style="left:793.2px;top:159.5px;width:31.799999999999955px;height:7.5px;background:#fff;border:1px solid #b4b4b4;box-sizing:border-box"></div>
<svg style="left:793.2px;top:159.5px" width="5.2" height="7.5" viewBox="0 0 5.2 7.5"><rect x="0.5" y="0.5" width="4.7" height="6.5" fill="#e8e8e8" stroke="#c8c8c8" stroke-width="0.4"/><path d="M1.5 3.05 L2.8000000000000003 1.65 L4.1 3.05Z M1.5 4.45 L2.8000000000000003 5.85 L4.1 4.45Z" fill="#555"/></svg>
<div class="t" style="right:200.5px;top:161.22px;font-size:4.55px;line-height:5.46px;color:#222;text-align:right;letter-spacing:-0.075px;">0.000</div>
<div class="t" style="left:828.5px;top:160.97px;font-size:4.55px;line-height:5.46px;color:#222;letter-spacing:-0.075px;">V</div>
<svg style="left:835.5px;top:160.75px" width="5.5" height="5.5" viewBox="0 0 5.5 5.5"><rect x="0.35" y="0.35" width="4.8" height="4.8" fill="#fff" stroke="#6a6a6a" stroke-width="0.7"/></svg>
<svg style="left:743.5px;top:177.55px" width="5.5" height="5.5" viewBox="0 0 5.5 5.5"><rect x="0.35" y="0.35" width="4.8" height="4.8" fill="#fff" stroke="#6a6a6a" stroke-width="0.7"/></svg>
<div class="t" style="left:751px;top:178.27px;font-size:4.55px;line-height:5.46px;color:#222;letter-spacing:-0.075px;">Turn Output Off at 0V</div>
<div class="t" style="left:742.8px;top:187.27px;font-size:4.55px;line-height:5.46px;color:#222;letter-spacing:-0.075px;">Output Off</div>
<div class="a" style="left:743.2px;top:193.3px;width:39.799999999999955px;height:8.0px;background:#e5e5e5;border:1px solid #c0c0c0;box-sizing:border-box"></div>
<div class="t" style="left:744.7px;top:195.27px;font-size:4.55px;line-height:5.46px;color:#222;letter-spacing:-0.075px;">Normal</div>
<svg class="a" style="left:777px;top:195.8px" width="4" height="3" viewBox="0 0 4 3"><path d="M0.3 0.6 L2 2.2 L3.7 0.6" stroke="#444" stroke-width="0.6" fill="none"/></svg>
<svg style="left:787.3px;top:194.55px" width="5.5" height="5.5" viewBox="0 0 5.5 5.5"><rect x="0.35" y="0.35" width="4.8" height="4.8" fill="#fff" stroke="#6a6a6a" stroke-width="0.7"/></svg>
<div class="t" style="left:795px;top:195.27px;font-size:4.55px;line-height:5.46px;color:#222;letter-spacing:-0.075px;">High Capacitance Mode</div>
<div class="a" style="left:739.6px;top:211.5px;width:111.0px;height:41.0px;border:1px solid #dcdcdc;box-sizing:border-box;border-radius:1px"></div>
<div class="t" style="left:742px;top:208.77px;font-size:4.55px;line-height:5.46px;background:#f0f0f0;padding:0 0.5px;color:#222;letter-spacing:-0.075px;">Measure Settings</div>
<div class="t" style="left:744.5px;top:217.97px;font-size:4.55px;line-height:5.46px;color:#222;letter-spacing:-0.075px;">Current Limit</div>
<div class="a" style="left:744.6px;top:224px;width:40.0px;height:7.599999999999994px;background:#fff;border:1px solid #b4b4b4;box-sizing:border-box"></div>
<svg style="left:744.6px;top:224px" width="5.2" height="7.599999999999994" viewBox="0 0 5.2 7.599999999999994"><rect x="0.5" y="0.5" width="4.7" height="6.599999999999994" fill="#e8e8e8" stroke="#c8c8c8" stroke-width="0.4"/><path d="M1.5 3.099999999999997 L2.8000000000000003 1.699999999999997 L4.1 3.099999999999997Z M1.5 4.499999999999997 L2.8000000000000003 5.899999999999997 L4.1 4.499999999999997Z" fill="#555"/></svg>
<div class="t" style="right:240.89999999999998px;top:225.77px;font-size:4.55px;line-height:5.46px;color:#222;text-align:right;letter-spacing:-0.075px;">0.100000</div>
<div class="t" style="left:787.5px;top:225.77px;font-size:4.55px;line-height:5.46px;color:#222;letter-spacing:-0.075px;">mA</div>
<div class="t" style="left:744.5px;top:235.97px;font-size:4.55px;line-height:5.46px;color:#222;letter-spacing:-0.075px;">Display Digits</div>
<div class="a" style="left:745.4px;top:241.6px;width:15.300000000000068px;height:7.599999999999994px;background:#fff;border:1px solid #b4b4b4;box-sizing:border-box"></div>
<svg style="left:745.4px;top:241.6px" width="5.2" height="7.599999999999994" viewBox="0 0 5.2 7.599999999999994"><rect x="0.5" y="0.5" width="4.7" height="6.599999999999994" fill="#e8e8e8" stroke="#c8c8c8" stroke-width="0.4"/><path d="M1.5 3.099999999999997 L2.8000000000000003 1.699999999999997 L4.1 3.099999999999997Z M1.5 4.499999999999997 L2.8000000000000003 5.899999999999997 L4.1 4.499999999999997Z" fill="#555"/></svg>
<div class="t" style="right:264.79999999999995px;top:243.37px;font-size:4.55px;line-height:5.46px;color:#222;text-align:right;letter-spacing:-0.075px;">5</div>
<div class="t" style="left:780.4px;top:235.97px;font-size:4.55px;line-height:5.46px;color:#222;letter-spacing:-0.075px;">NPL Cycles</div>
<div class="a" style="left:780.6px;top:241.6px;width:19.899999999999977px;height:7.599999999999994px;background:#fff;border:1px solid #b4b4b4;box-sizing:border-box"></div>
<svg style="left:780.6px;top:241.6px" width="5.2" height="7.599999999999994" viewBox="0 0 5.2 7.599999999999994"><rect x="0.5" y="0.5" width="4.7" height="6.599999999999994" fill="#e8e8e8" stroke="#c8c8c8" stroke-width="0.4"/><path d="M1.5 3.099999999999997 L2.8000000000000003 1.699999999999997 L4.1 3.099999999999997Z M1.5 4.499999999999997 L2.8000000000000003 5.899999999999997 L4.1 4.499999999999997Z" fill="#555"/></svg>
<div class="t" style="right:225.0px;top:243.37px;font-size:4.55px;line-height:5.46px;color:#222;text-align:right;letter-spacing:-0.075px;">0.10</div>
<svg style="left:813.2px;top:242.75px" width="5.5" height="5.5" viewBox="0 0 5.5 5.5"><rect x="0.35" y="0.35" width="4.8" height="4.8" fill="#fff" stroke="#6a6a6a" stroke-width="0.7"/></svg>
<div class="t" style="left:820.5px;top:243.47px;font-size:4.55px;line-height:5.46px;color:#222;letter-spacing:-0.075px;">Auto Zero</div>
<div class="a btn" style="left:739.4px;top:257px;width:43.80000000000007px;height:8.300000000000011px;background:#e1e1e1;border:1px solid #c6c6c6;font-size:4.55px;line-height:6.300000000000011px;padding-top:1px;letter-spacing:-0.075px;">Setup Instrument</div>
<div class="t" style="left:786.8px;top:259.27px;font-size:4.55px;line-height:5.46px;color:#d01818;letter-spacing:-0.075px;">* Setup Required</div>
<div class="a btn" style="left:826.6px;top:257px;width:23.699999999999932px;height:8.300000000000011px;background:#e1e1e1;border:1px solid #c6c6c6;font-size:4.55px;line-height:6.300000000000011px;padding-top:1px;letter-spacing:-0.075px;">IV Curve</div>
<div class="a" style="left:736.2px;top:274.5px;width:119.29999999999995px;height:86.5px;border:1px solid #dcdcdc;box-sizing:border-box;border-radius:1px"></div>
<div class="t" style="left:738px;top:271.77px;font-size:4.55px;line-height:5.46px;background:#f0f0f0;padding:0 0.5px;color:#222;letter-spacing:-0.075px;">Measurement Readings</div>
<div class="a" style="left:739.6px;top:282px;width:57.39999999999998px;height:30px;border:1px solid #dcdcdc;box-sizing:border-box;border-radius:1px"></div>
<div class="t" style="left:742px;top:279.27px;font-size:4.55px;line-height:5.46px;background:#f0f0f0;padding:0 0.5px;color:#222;letter-spacing:-0.075px;">Read During Voltage Test</div>
<svg style="left:744.5px;top:286.75px" width="5.5" height="5.5" viewBox="0 0 5.5 5.5"><rect x="0.35" y="0.35" width="4.8" height="4.8" fill="#fff" stroke="#6a6a6a" stroke-width="0.7"/></svg>
<div class="t" style="left:752px;top:287.47px;font-size:4.55px;line-height:5.46px;color:#222;letter-spacing:-0.075px;">Enable</div>
<div class="t" style="left:744px;top:295.27px;font-size:4.55px;line-height:5.46px;color:#222;letter-spacing:-0.075px;">Read Rate</div>
<div class="a" style="left:744.5px;top:301.6px;width:15.299999999999955px;height:7.199999999999989px;background:#fff;border:1px solid #b4b4b4;box-sizing:border-box"></div>
<svg style="left:744.5px;top:301.6px" width="5.2" height="7.199999999999989" viewBox="0 0 5.2 7.199999999999989"><rect x="0.5" y="0.5" width="4.7" height="6.199999999999989" fill="#e8e8e8" stroke="#c8c8c8" stroke-width="0.4"/><path d="M1.5 2.899999999999994 L2.8000000000000003 1.4999999999999942 L4.1 2.899999999999994Z M1.5 4.2999999999999945 L2.8000000000000003 5.699999999999994 L4.1 4.2999999999999945Z" fill="#555"/></svg>
<div class="t" style="right:265.70000000000005px;top:303.17px;font-size:4.55px;line-height:5.46px;color:#222;text-align:right;letter-spacing:-0.075px;">2</div>
<div class="t" style="left:762px;top:302.57px;font-size:4.55px;line-height:5.46px;color:#222;letter-spacing:-0.075px;">per sec</div>
<div class="a" style="left:800.5px;top:282px;width:50.10000000000002px;height:30px;border:1px solid #dcdcdc;box-sizing:border-box;border-radius:1px"></div>
<div class="t" style="left:802.5px;top:279.27px;font-size:4.55px;line-height:5.46px;background:#f0f0f0;padding:0 0.5px;color:#222;letter-spacing:-0.075px;">Read When Testing</div>
<svg style="left:805px;top:286.75px" width="5.5" height="5.5" viewBox="0 0 5.5 5.5"><rect x="0.35" y="0.35" width="4.8" height="4.8" fill="#fff" stroke="#6a6a6a" stroke-width="0.7"/></svg>
<div class="t" style="left:812.5px;top:287.47px;font-size:4.55px;line-height:5.46px;color:#222;letter-spacing:-0.075px;">Enable (1Hz max)</div>
<div class="t" style="left:804.5px;top:295.27px;font-size:4.55px;line-height:5.46px;color:#222;letter-spacing:-0.075px;">Read Delay</div>
<div class="a" style="left:805px;top:301.6px;width:15.299999999999955px;height:7.199999999999989px;background:#fff;border:1px solid #b4b4b4;box-sizing:border-box"></div>
<svg style="left:805px;top:301.6px" width="5.2" height="7.199999999999989" viewBox="0 0 5.2 7.199999999999989"><rect x="0.5" y="0.5" width="4.7" height="6.199999999999989" fill="#e8e8e8" stroke="#c8c8c8" stroke-width="0.4"/><path d="M1.5 2.899999999999994 L2.8000000000000003 1.4999999999999942 L4.1 2.899999999999994Z M1.5 4.2999999999999945 L2.8000000000000003 5.699999999999994 L4.1 4.2999999999999945Z" fill="#555"/></svg>
<div class="t" style="right:205.20000000000005px;top:303.17px;font-size:4.55px;line-height:5.46px;color:#222;text-align:right;letter-spacing:-0.075px;">10</div>
<div class="t" style="left:822.5px;top:302.57px;font-size:4.55px;line-height:5.46px;color:#222;letter-spacing:-0.075px;">images</div>
<div class="a btn" style="left:739.5px;top:316px;width:39.5px;height:8.399999999999977px;background:#e1e1e1;border:1px solid #c6c6c6;font-size:4.55px;line-height:6.399999999999977px;padding-top:1px;letter-spacing:-0.075px;">Take Reading</div>
<div class="a btn" style="left:791px;top:316px;width:59.299999999999955px;height:8.399999999999977px;background:#e1e1e1;border:1px solid #c6c6c6;font-size:4.55px;line-height:6.399999999999977px;padding-top:1px;letter-spacing:-0.075px;">Send to Adv Save/Export</div>
<div class="t" style="left:739.5px;top:328.17px;font-size:4.55px;line-height:5.46px;color:#222;letter-spacing:-0.075px;">Current</div>
<div class="a" style="left:739.5px;top:333.3px;width:39.0px;height:7.300000000000011px;background:#000;"></div>
<div class="t" style="left:780.5px;top:335.27px;font-size:4.55px;line-height:5.46px;color:#222;letter-spacing:-0.075px;">mA</div>
<div class="t" style="left:791.3px;top:328.17px;font-size:4.55px;line-height:5.46px;color:#222;letter-spacing:-0.075px;">Power</div>
<div class="a" style="left:791.3px;top:333.3px;width:51.0px;height:7.300000000000011px;background:#000;"></div>
<div class="t" style="left:843.8px;top:335.27px;font-size:4.55px;line-height:5.46px;color:#222;letter-spacing:-0.075px;">uW</div>
<div class="t" style="left:739.5px;top:343.47px;font-size:4.55px;line-height:5.46px;color:#222;letter-spacing:-0.075px;">Voltage</div>
<div class="a" style="left:739.5px;top:348.7px;width:39.0px;height:7.300000000000011px;background:#000;"></div>
<div class="t" style="left:781.5px;top:350.67px;font-size:4.55px;line-height:5.46px;color:#222;letter-spacing:-0.075px;">V</div>
<div class="t" style="left:791.3px;top:343.47px;font-size:4.55px;line-height:5.46px;color:#222;letter-spacing:-0.075px;">Resistance</div>
<div class="a" style="left:791.3px;top:348.7px;width:51.0px;height:7.300000000000011px;background:#000;"></div>
<div class="t" style="left:843.8px;top:350.67px;font-size:4.55px;line-height:5.46px;color:#222;letter-spacing:-0.075px;">Ohm</div>
<div class="a" style="left:904.8px;top:38.8px;width:92.0px;height:183.0px;background:#f0f0f0;border:0.6px solid #c8c8c8;box-sizing:border-box;box-shadow:0 1px 5px rgba(0,0,0,0.28)"></div>
<div class="a" style="left:905.4px;top:39.4px;width:90.8px;height:11.8px;background:#fff"></div>
<div class="t" style="left:909.3px;top:43.06px;font-size:4.9px;line-height:5.88px;color:#9a9a9a;">Thermal Stage</div>
<div class="a" style="left:988.8px;top:41.8px;width:7.4px;height:7.4px;background:#ececec"></div>
<div class="a" style="left:905.4px;top:50.6px;width:90.80000000000007px;height:9.899999999999999px;background:#f8f8f8;"></div>
<div class="t" style="left:910.5px;top:54.08px;font-size:4.7px;line-height:5.64px;color:#222;">File</div>
<div class="t" style="left:925.5px;top:54.08px;font-size:4.7px;line-height:5.64px;color:#222;">Help</div>
<div class="a" style="left:909px;top:67.5px;width:83px;height:26.0px;border:1px solid #dcdcdc;box-sizing:border-box;border-radius:1px"></div>
<div class="t" style="left:911.5px;top:64.77px;font-size:4.55px;line-height:5.46px;background:#f0f0f0;padding:0 0.5px;color:#222;letter-spacing:-0.025px;">Serial Communication</div>
<div class="t" style="left:915.8px;top:74.17px;font-size:4.55px;line-height:5.46px;color:#222;letter-spacing:-0.025px;">Com Port</div>
<div class="a" style="left:916px;top:80.2px;width:36px;height:8.200000000000003px;background:#e5e5e5;border:1px solid #c0c0c0;box-sizing:border-box"></div>
<div class="t" style="left:917.5px;top:82.27px;font-size:4.55px;line-height:5.46px;color:#222;letter-spacing:-0.025px;">COM1</div>
<svg class="a" style="left:946px;top:82.80000000000001px" width="4" height="3" viewBox="0 0 4 3"><path d="M0.3 0.6 L2 2.2 L3.7 0.6" stroke="#444" stroke-width="0.6" fill="none"/></svg>
<div class="a" style="left:969.8px;top:71px;width:5.6px;height:5.6px;background:#0a6a16;border:0.5px solid #043a0a;box-sizing:border-box"></div>
<div class="a btn" style="left:957px;top:80px;width:31px;height:8.599999999999994px;background:#e1e1e1;border:1px solid #c6c6c6;font-size:4.55px;line-height:6.599999999999994px;padding-top:1px;letter-spacing:-0.025px;">Open Port</div>
<div class="a" style="left:909px;top:99.5px;width:83px;height:58.0px;border:1px solid #dcdcdc;box-sizing:border-box;border-radius:1px"></div>
<div class="t" style="left:911.5px;top:96.77px;font-size:4.55px;line-height:5.46px;background:#f0f0f0;padding:0 0.5px;color:#222;letter-spacing:-0.025px;">Get Controller Settings</div>
<div class="t" style="left:916px;top:106.67px;font-size:4.55px;line-height:5.46px;color:#222;letter-spacing:-0.025px;">Range</div>
<div class="a" style="left:916px;top:111.5px;width:31.5px;height:7.299999999999997px;background:#f4f4f4;border:0.6px solid #8a8a8a;box-sizing:border-box"></div>
<div class="t" style="left:881.75px;width:100px;text-align:center;top:113.12px;font-size:4.55px;line-height:5.46px;color:#222;letter-spacing:-0.025px;">0 - 80°C</div>
<div class="a btn" style="left:957.3px;top:111px;width:15.700000000000045px;height:8.200000000000003px;background:#e1e1e1;border:1px solid #c6c6c6;font-size:4.55px;line-height:6.200000000000003px;padding-top:1px;letter-spacing:-0.025px;">Get</div>
<div class="a" style="left:916.5px;top:126.5px;width:71.5px;height:28.0px;border:1px solid #dcdcdc;box-sizing:border-box;border-radius:1px"></div>
<div class="t" style="left:919px;top:123.77px;font-size:4.55px;line-height:5.46px;background:#f0f0f0;padding:0 0.5px;color:#222;letter-spacing:-0.025px;">Realtime Updates</div>
<svg style="left:923.3px;top:131.25px" width="5.5" height="5.5" viewBox="0 0 5.5 5.5"><rect x="0.35" y="0.35" width="4.8" height="4.8" fill="#fff" stroke="#6a6a6a" stroke-width="0.7"/><path d="M1.3 2.9 L2.4 4.0 L4.3 1.5" stroke="#333" stroke-width="0.7" fill="none"/></svg>
<div class="t" style="left:930.5px;top:131.97px;font-size:4.55px;line-height:5.46px;color:#222;letter-spacing:-0.025px;">Enable</div>
<div class="t" style="left:923.5px;top:139.97px;font-size:4.55px;line-height:5.46px;color:#222;letter-spacing:-0.025px;text-decoration:underline;">Setpoint</div>
<div class="a" style="left:923.3px;top:144.5px;width:20.200000000000045px;height:6.300000000000011px;background:#f4f4f4;border:0.6px solid #8a8a8a;box-sizing:border-box"></div>
<div class="t" style="right:82.0px;top:145.62px;font-size:4.55px;line-height:5.46px;color:#222;text-align:right;letter-spacing:-0.025px;"></div>
<div class="t" style="left:945.5px;top:145.97px;font-size:4.55px;line-height:5.46px;color:#222;letter-spacing:-0.025px;">°C</div>
<div class="t" style="left:957.5px;top:139.97px;font-size:4.55px;line-height:5.46px;color:#222;letter-spacing:-0.025px;text-decoration:underline;">Temperature</div>
<div class="a" style="left:957.3px;top:144.5px;width:20.200000000000045px;height:6.300000000000011px;background:#f4f4f4;border:0.6px solid #8a8a8a;box-sizing:border-box"></div>
<div class="t" style="right:48.0px;top:145.62px;font-size:4.55px;line-height:5.46px;color:#222;text-align:right;letter-spacing:-0.025px;"></div>
<div class="t" style="left:979.5px;top:146.47px;font-size:4.55px;line-height:5.46px;color:#222;letter-spacing:-0.025px;">°C</div>
<div class="a" style="left:909px;top:164.5px;width:83px;height:52.0px;border:1px solid #dcdcdc;box-sizing:border-box;border-radius:1px"></div>
<div class="t" style="left:911.5px;top:161.77px;font-size:4.55px;line-height:5.46px;background:#f0f0f0;padding:0 0.5px;color:#222;letter-spacing:-0.025px;">Set Controller Settings</div>
<div class="t" style="left:916px;top:170.77px;font-size:4.55px;line-height:5.46px;color:#222;letter-spacing:-0.025px;">Range</div>
<div class="a" style="left:916px;top:176.5px;width:36px;height:8.0px;background:#e5e5e5;border:1px solid #c0c0c0;box-sizing:border-box"></div>
<div class="t" style="left:917.5px;top:178.47px;font-size:4.55px;line-height:5.46px;color:#222;letter-spacing:-0.025px;">0 - 80°C</div>
<svg class="a" style="left:946px;top:179.0px" width="4" height="3" viewBox="0 0 4 3"><path d="M0.3 0.6 L2 2.2 L3.7 0.6" stroke="#444" stroke-width="0.6" fill="none"/></svg>
<div class="a btn" style="left:957.3px;top:176.3px;width:15.700000000000045px;height:8.299999999999983px;background:#e1e1e1;border:1px solid #c6c6c6;font-size:4.55px;line-height:6.299999999999983px;padding-top:1px;letter-spacing:-0.025px;">Set</div>
<div class="t" style="left:916px;top:188.47px;font-size:4.55px;line-height:5.46px;color:#222;letter-spacing:-0.025px;">Setpoint</div>
<div class="a" style="left:916px;top:194px;width:27.5px;height:8px;background:#fff;border:1px solid #b4b4b4;box-sizing:border-box"></div>
<svg style="left:916px;top:194px" width="5.2" height="8" viewBox="0 0 5.2 8"><rect x="0.5" y="0.5" width="4.7" height="7" fill="#e8e8e8" stroke="#c8c8c8" stroke-width="0.4"/><path d="M1.5 3.3 L2.8000000000000003 1.9 L4.1 3.3Z M1.5 4.7 L2.8000000000000003 6.1 L4.1 4.7Z" fill="#555"/></svg>
<div class="t" style="right:82.0px;top:195.97px;font-size:4.55px;line-height:5.46px;color:#222;text-align:right;letter-spacing:-0.025px;">0.00</div>
<div class="t" style="left:946px;top:195.97px;font-size:4.55px;line-height:5.46px;color:#222;letter-spacing:-0.025px;">°C</div>
<div class="a btn" style="left:957.3px;top:193.8px;width:15.700000000000045px;height:8.399999999999977px;background:#e1e1e1;border:1px solid #c6c6c6;font-size:4.55px;line-height:6.399999999999977px;padding-top:1px;letter-spacing:-0.025px;">Set</div>
<svg style="left:916.3px;top:207.25px" width="5.5" height="5.5" viewBox="0 0 5.5 5.5"><rect x="0.35" y="0.35" width="4.8" height="4.8" fill="#fff" stroke="#6a6a6a" stroke-width="0.7"/></svg>
<div class="t" style="left:923.5px;top:207.97px;font-size:4.55px;line-height:5.46px;color:#222;letter-spacing:-0.025px;">Set Default Settings</div>
<div class="a" style="left:369px;top:377.8px;width:168px;height:159.8px;background:#f0f0f0;border:0.6px solid #c8c8c8;box-sizing:border-box;box-shadow:0 1px 5px rgba(0,0,0,0.28)"></div>
<div class="a" style="left:369.6px;top:378.40000000000003px;width:166.8px;height:11.8px;background:#fff"></div>
<div class="t" style="left:373.5px;top:382.06px;font-size:4.9px;line-height:5.88px;color:#9a9a9a;">Lock-in Test Setup</div>
<div class="a" style="left:529px;top:380.8px;width:7.4px;height:7.4px;background:#ececec"></div>
<div class="a" style="left:369.6px;top:389.6px;width:166.79999999999995px;height:9.599999999999966px;background:#f8f8f8;"></div>
<div class="t" style="left:375px;top:392.88px;font-size:4.7px;line-height:5.64px;color:#222;">File</div>
<div class="t" style="left:390px;top:392.88px;font-size:4.7px;line-height:5.64px;color:#222;">Help</div>
<div class="a" style="left:375.8px;top:405.2px;width:47.80000000000001px;height:127.50000000000006px;border:1px solid #dcdcdc;box-sizing:border-box;border-radius:1px"></div>
<div class="t" style="left:377.5px;top:402.46999999999997px;font-size:4.55px;line-height:5.46px;background:#f0f0f0;padding:0 0.5px;color:#222;letter-spacing:-0.025px;">Cycle Frequency</div>
<svg style="left:380px;top:412.75px" width="5.5" height="5.5" viewBox="0 0 5.5 5.5"><circle cx="2.75" cy="2.75" r="2.4" fill="#fff" stroke="#6a6a6a" stroke-width="0.7"/></svg>
<div class="t" style="left:390.5px;top:413.47px;font-size:4.55px;line-height:5.46px;color:#222;letter-spacing:-0.025px;">15.000 Hz</div>
<svg style="left:380px;top:421.95px" width="5.5" height="5.5" viewBox="0 0 5.5 5.5"><circle cx="2.75" cy="2.75" r="2.4" fill="#fff" stroke="#6a6a6a" stroke-width="0.7"/></svg>
<div class="t" style="left:392.8px;top:422.67px;font-size:4.55px;line-height:5.46px;color:#222;letter-spacing:-0.025px;">7.500 Hz</div>
<svg style="left:380px;top:431.25px" width="5.5" height="5.5" viewBox="0 0 5.5 5.5"><circle cx="2.75" cy="2.75" r="2.4" fill="#fff" stroke="#6a6a6a" stroke-width="0.7"/></svg>
<div class="t" style="left:392.8px;top:431.97px;font-size:4.55px;line-height:5.46px;color:#222;letter-spacing:-0.025px;">5.000 Hz</div>
<svg style="left:380px;top:440.55px" width="5.5" height="5.5" viewBox="0 0 5.5 5.5"><circle cx="2.75" cy="2.75" r="2.4" fill="#fff" stroke="#6a6a6a" stroke-width="0.7"/></svg>
<div class="t" style="left:392.8px;top:441.27px;font-size:4.55px;line-height:5.46px;color:#222;letter-spacing:-0.025px;">3.750 Hz</div>
<svg style="left:380px;top:449.85px" width="5.5" height="5.5" viewBox="0 0 5.5 5.5"><circle cx="2.75" cy="2.75" r="2.4" fill="#fff" stroke="#6a6a6a" stroke-width="0.7"/></svg>
<div class="t" style="left:392.8px;top:450.57px;font-size:4.55px;line-height:5.46px;color:#222;letter-spacing:-0.025px;">3.000 Hz</div>
<svg style="left:380px;top:459.15px" width="5.5" height="5.5" viewBox="0 0 5.5 5.5"><circle cx="2.75" cy="2.75" r="2.4" fill="#fff" stroke="#6a6a6a" stroke-width="0.7"/></svg>
<div class="t" style="left:392.8px;top:459.87px;font-size:4.55px;line-height:5.46px;color:#222;letter-spacing:-0.025px;">2.500 Hz</div>
<div class="a" style="left:380px;top:468.35px;width:5.5px;height:5.5px;border:1px solid #d8d8d8;border-radius:50%;background:#f4f4f4;box-sizing:border-box"></div>
<div class="t" style="left:390.5px;top:469.07px;font-size:4.55px;line-height:5.46px;color:#b8b8b8;letter-spacing:-0.025px;">2.000 Hz</div>
<svg style="left:380px;top:477.65px" width="5.5" height="5.5" viewBox="0 0 5.5 5.5"><circle cx="2.75" cy="2.75" r="2.4" fill="#fff" stroke="#6a6a6a" stroke-width="0.7"/></svg>
<div class="t" style="left:392.8px;top:478.37px;font-size:4.55px;line-height:5.46px;color:#222;letter-spacing:-0.025px;">1.875 Hz</div>
<svg style="left:380px;top:486.85px" width="5.5" height="5.5" viewBox="0 0 5.5 5.5"><circle cx="2.75" cy="2.75" r="2.4" fill="#fff" stroke="#6a6a6a" stroke-width="0.7"/></svg>
<div class="t" style="left:392.8px;top:487.57px;font-size:4.55px;line-height:5.46px;color:#222;letter-spacing:-0.025px;">1.500 Hz</div>
<svg style="left:380px;top:496.05px" width="5.5" height="5.5" viewBox="0 0 5.5 5.5"><circle cx="2.75" cy="2.75" r="2.4" fill="#fff" stroke="#6a6a6a" stroke-width="0.7"/></svg>
<div class="t" style="left:392.8px;top:496.77px;font-size:4.55px;line-height:5.46px;color:#222;letter-spacing:-0.025px;">1.250 Hz</div>
<svg style="left:380px;top:505.25px" width="5.5" height="5.5" viewBox="0 0 5.5 5.5"><circle cx="2.75" cy="2.75" r="2.4" fill="#fff" stroke="#6a6a6a" stroke-width="0.7"/><circle cx="2.75" cy="2.75" r="1.3" fill="#222"/></svg>
<div class="t" style="left:392.8px;top:505.97px;font-size:4.55px;line-height:5.46px;color:#222;letter-spacing:-0.025px;">1.000 Hz</div>
<svg style="left:380px;top:514.55px" width="5.5" height="5.5" viewBox="0 0 5.5 5.5"><circle cx="2.75" cy="2.75" r="2.4" fill="#fff" stroke="#6a6a6a" stroke-width="0.7"/></svg>
<div class="t" style="left:387.8px;top:515.27px;font-size:4.55px;line-height:5.46px;color:#222;letter-spacing:-0.025px;">Cycle Time</div>
<div class="a" style="left:389.5px;top:521px;width:16.30000000000001px;height:7.5px;background:#fff;border:1px solid #b4b4b4;box-sizing:border-box"></div>
<svg style="left:389.5px;top:521px" width="5.2" height="7.5" viewBox="0 0 5.2 7.5"><rect x="0.5" y="0.5" width="4.7" height="6.5" fill="#e8e8e8" stroke="#c8c8c8" stroke-width="0.4"/><path d="M1.5 3.05 L2.8000000000000003 1.65 L4.1 3.05Z M1.5 4.45 L2.8000000000000003 5.85 L4.1 4.45Z" fill="#555"/></svg>
<div class="t" style="right:619.7px;top:522.72px;font-size:4.55px;line-height:5.46px;color:#222;text-align:right;letter-spacing:-0.025px;">2</div>
<div class="t" style="left:407.5px;top:522.77px;font-size:4.55px;line-height:5.46px;color:#222;letter-spacing:-0.025px;">sec</div>
<div class="a" style="left:426.4px;top:405.2px;width:60.200000000000045px;height:36.5px;border:1px solid #dcdcdc;box-sizing:border-box;border-radius:1px"></div>
<div class="t" style="left:429.5px;top:402.46999999999997px;font-size:4.55px;line-height:5.46px;background:#f0f0f0;padding:0 0.5px;color:#222;letter-spacing:-0.025px;">Test Duration</div>
<svg style="left:432.3px;top:412.45px" width="5.5" height="5.5" viewBox="0 0 5.5 5.5"><rect x="0.35" y="0.35" width="4.8" height="4.8" fill="#fff" stroke="#6a6a6a" stroke-width="0.7"/><path d="M1.3 2.9 L2.4 4.0 L4.3 1.5" stroke="#333" stroke-width="0.7" fill="none"/></svg>
<div class="t" style="left:439.5px;top:413.17px;font-size:4.55px;line-height:5.46px;color:#222;letter-spacing:-0.025px;">Continuous Test</div>
<div class="t" style="left:432.3px;top:422.97px;font-size:4.55px;line-height:5.46px;color:#222;letter-spacing:-0.025px;">Number of Cycles</div>
<div class="a" style="left:432.3px;top:429px;width:32.19999999999999px;height:7.5px;background:#fff;border:1px solid #b4b4b4;box-sizing:border-box"></div>
<svg style="left:432.3px;top:429px" width="5.2" height="7.5" viewBox="0 0 5.2 7.5"><rect x="0.5" y="0.5" width="4.7" height="6.5" fill="#e8e8e8" stroke="#c8c8c8" stroke-width="0.4"/><path d="M1.5 3.05 L2.8000000000000003 1.65 L4.1 3.05Z M1.5 4.45 L2.8000000000000003 5.85 L4.1 4.45Z" fill="#555"/></svg>
<div class="t" style="right:561.0px;top:430.72px;font-size:4.55px;line-height:5.46px;color:#222;text-align:right;letter-spacing:-0.025px;">10</div>
<div class="a" style="left:426.4px;top:447.5px;width:60.200000000000045px;height:70.0px;border:1px solid #dcdcdc;box-sizing:border-box;border-radius:1px"></div>
<div class="t" style="left:429.5px;top:444.77px;font-size:4.55px;line-height:5.46px;background:#f0f0f0;padding:0 0.5px;color:#222;letter-spacing:-0.025px;">Power Mode</div>
<svg style="left:432.3px;top:455.65px" width="5.5" height="5.5" viewBox="0 0 5.5 5.5"><circle cx="2.75" cy="2.75" r="2.4" fill="#fff" stroke="#6a6a6a" stroke-width="0.7"/><circle cx="2.75" cy="2.75" r="1.3" fill="#222"/></svg>
<div class="t" style="left:439.5px;top:456.37px;font-size:4.55px;line-height:5.46px;color:#222;letter-spacing:-0.025px;">On/Off</div>
<svg style="left:432.3px;top:464.65px" width="5.5" height="5.5" viewBox="0 0 5.5 5.5"><circle cx="2.75" cy="2.75" r="2.4" fill="#fff" stroke="#6a6a6a" stroke-width="0.7"/></svg>
<div class="t" style="left:439.5px;top:465.37px;font-size:4.55px;line-height:5.46px;color:#222;letter-spacing:-0.025px;">Pulse</div>
<div class="t" style="left:440px;top:474.47px;font-size:4.55px;line-height:5.46px;color:#222;letter-spacing:-0.025px;">Pulse Length</div>
<div class="a" style="left:440.3px;top:480.4px;width:19.69999999999999px;height:7.2000000000000455px;background:#fff;border:1px solid #b4b4b4;box-sizing:border-box"></div>
<svg style="left:440.3px;top:480.4px" width="5.2" height="7.2000000000000455" viewBox="0 0 5.2 7.2000000000000455"><rect x="0.5" y="0.5" width="4.7" height="6.2000000000000455" fill="#e8e8e8" stroke="#c8c8c8" stroke-width="0.4"/><path d="M1.5 2.9000000000000226 L2.8000000000000003 1.5000000000000226 L4.1 2.9000000000000226Z M1.5 4.300000000000023 L2.8000000000000003 5.700000000000022 L4.1 4.300000000000023Z" fill="#555"/></svg>
<div class="t" style="right:565.5px;top:481.97px;font-size:4.55px;line-height:5.46px;color:#222;text-align:right;letter-spacing:-0.025px;">20</div>
<div class="t" style="left:462px;top:481.97px;font-size:4.55px;line-height:5.46px;color:#222;letter-spacing:-0.025px;">ms</div>
<div class="t" style="left:440px;top:491.97px;font-size:4.55px;line-height:5.46px;color:#222;letter-spacing:-0.025px;">Pulses per Cycle</div>
<div class="a" style="left:440.3px;top:497.8px;width:19.69999999999999px;height:7.199999999999989px;background:#fff;border:1px solid #b4b4b4;box-sizing:border-box"></div>
<svg style="left:440.3px;top:497.8px" width="5.2" height="7.199999999999989" viewBox="0 0 5.2 7.199999999999989"><rect x="0.5" y="0.5" width="4.7" height="6.199999999999989" fill="#e8e8e8" stroke="#c8c8c8" stroke-width="0.4"/><path d="M1.5 2.899999999999994 L2.8000000000000003 1.4999999999999942 L4.1 2.899999999999994Z M1.5 4.2999999999999945 L2.8000000000000003 5.699999999999994 L4.1 4.2999999999999945Z" fill="#555"/></svg>
<div class="t" style="right:565.5px;top:499.37px;font-size:4.55px;line-height:5.46px;color:#222;text-align:right;letter-spacing:-0.025px;">1</div>
<div class="t" style="left:440px;top:509.67px;font-size:4.55px;line-height:5.46px;color:#222;letter-spacing:-0.025px;">Max Freq = 12.500 Hz</div>
<div class="a" style="left:489.3px;top:405.2px;width:42.900000000000034px;height:25.30000000000001px;border:1px solid #dcdcdc;box-sizing:border-box;border-radius:1px"></div>
<div class="t" style="left:492px;top:402.46999999999997px;font-size:4.55px;line-height:5.46px;background:#f0f0f0;padding:0 0.5px;color:#222;letter-spacing:-0.025px;">Test Resolution</div>
<svg style="left:495px;top:411.25px" width="5.5" height="5.5" viewBox="0 0 5.5 5.5"><circle cx="2.75" cy="2.75" r="2.4" fill="#fff" stroke="#6a6a6a" stroke-width="0.7"/><circle cx="2.75" cy="2.75" r="1.3" fill="#222"/></svg>
<div class="t" style="left:502.5px;top:411.97px;font-size:4.55px;line-height:5.46px;color:#222;letter-spacing:-0.025px;">10 uK</div>
<svg style="left:495px;top:420.45px" width="5.5" height="5.5" viewBox="0 0 5.5 5.5"><circle cx="2.75" cy="2.75" r="2.4" fill="#fff" stroke="#6a6a6a" stroke-width="0.7"/></svg>
<div class="t" style="left:502.5px;top:421.17px;font-size:4.55px;line-height:5.46px;color:#222;letter-spacing:-0.025px;">10 mK</div>
<div class="a" style="left:489.3px;top:436.5px;width:42.900000000000034px;height:23.5px;border:1px solid #dcdcdc;box-sizing:border-box;border-radius:1px"></div>
<div class="t" style="left:492px;top:433.77px;font-size:4.55px;line-height:5.46px;background:#f0f0f0;padding:0 0.5px;color:#222;letter-spacing:-0.025px;">Image Update</div>
<div class="t" style="left:495.2px;top:442.57px;font-size:4.55px;line-height:5.46px;color:#222;letter-spacing:-0.025px;">Minimum</div>
<div class="a" style="left:495.2px;top:448.2px;width:15.800000000000011px;height:7.400000000000034px;background:#fff;border:1px solid #b4b4b4;box-sizing:border-box"></div>
<svg style="left:495.2px;top:448.2px" width="5.2" height="7.400000000000034" viewBox="0 0 5.2 7.400000000000034"><rect x="0.5" y="0.5" width="4.7" height="6.400000000000034" fill="#e8e8e8" stroke="#c8c8c8" stroke-width="0.4"/><path d="M1.5 3.000000000000017 L2.8000000000000003 1.600000000000017 L4.1 3.000000000000017Z M1.5 4.400000000000017 L2.8000000000000003 5.800000000000017 L4.1 4.400000000000017Z" fill="#555"/></svg>
<div class="t" style="right:514.5px;top:449.87px;font-size:4.55px;line-height:5.46px;color:#222;text-align:right;letter-spacing:-0.025px;">10</div>
<div class="t" style="left:512.8px;top:449.97px;font-size:4.55px;line-height:5.46px;color:#222;letter-spacing:-0.025px;">sec</div>
<div class="a" style="left:489.3px;top:466.5px;width:42.900000000000034px;height:32.5px;border:1px solid #dcdcdc;box-sizing:border-box;border-radius:1px"></div>
<div class="t" style="left:492px;top:463.77px;font-size:4.55px;line-height:5.46px;background:#f0f0f0;padding:0 0.5px;color:#222;letter-spacing:-0.025px;">Auto Save Test</div>
<svg style="left:495.5px;top:471.75px" width="5.5" height="5.5" viewBox="0 0 5.5 5.5"><rect x="0.35" y="0.35" width="4.8" height="4.8" fill="#fff" stroke="#6a6a6a" stroke-width="0.7"/><path d="M1.3 2.9 L2.4 4.0 L4.3 1.5" stroke="#333" stroke-width="0.7" fill="none"/></svg>
<div class="t" style="left:502.8px;top:472.47px;font-size:4.55px;line-height:5.46px;color:#222;letter-spacing:-0.025px;">Enable</div>
<div class="t" style="left:496px;top:481.97px;font-size:4.55px;line-height:5.46px;color:#222;letter-spacing:-0.025px;">Period</div>
<div class="a" style="left:495.8px;top:487.8px;width:16.19999999999999px;height:7.399999999999977px;background:#fff;border:1px solid #b4b4b4;box-sizing:border-box"></div>
<svg style="left:495.8px;top:487.8px" width="5.2" height="7.399999999999977" viewBox="0 0 5.2 7.399999999999977"><rect x="0.5" y="0.5" width="4.7" height="6.399999999999977" fill="#e8e8e8" stroke="#c8c8c8" stroke-width="0.4"/><path d="M1.5 2.9999999999999885 L2.8000000000000003 1.5999999999999885 L4.1 2.9999999999999885Z M1.5 4.399999999999989 L2.8000000000000003 5.799999999999988 L4.1 4.399999999999989Z" fill="#555"/></svg>
<div class="t" style="right:513.5px;top:489.47px;font-size:4.55px;line-height:5.46px;color:#222;text-align:right;letter-spacing:-0.025px;">30</div>
<div class="t" style="left:513.8px;top:489.47px;font-size:4.55px;line-height:5.46px;color:#222;letter-spacing:-0.025px;">min</div>
</div></body></html>
